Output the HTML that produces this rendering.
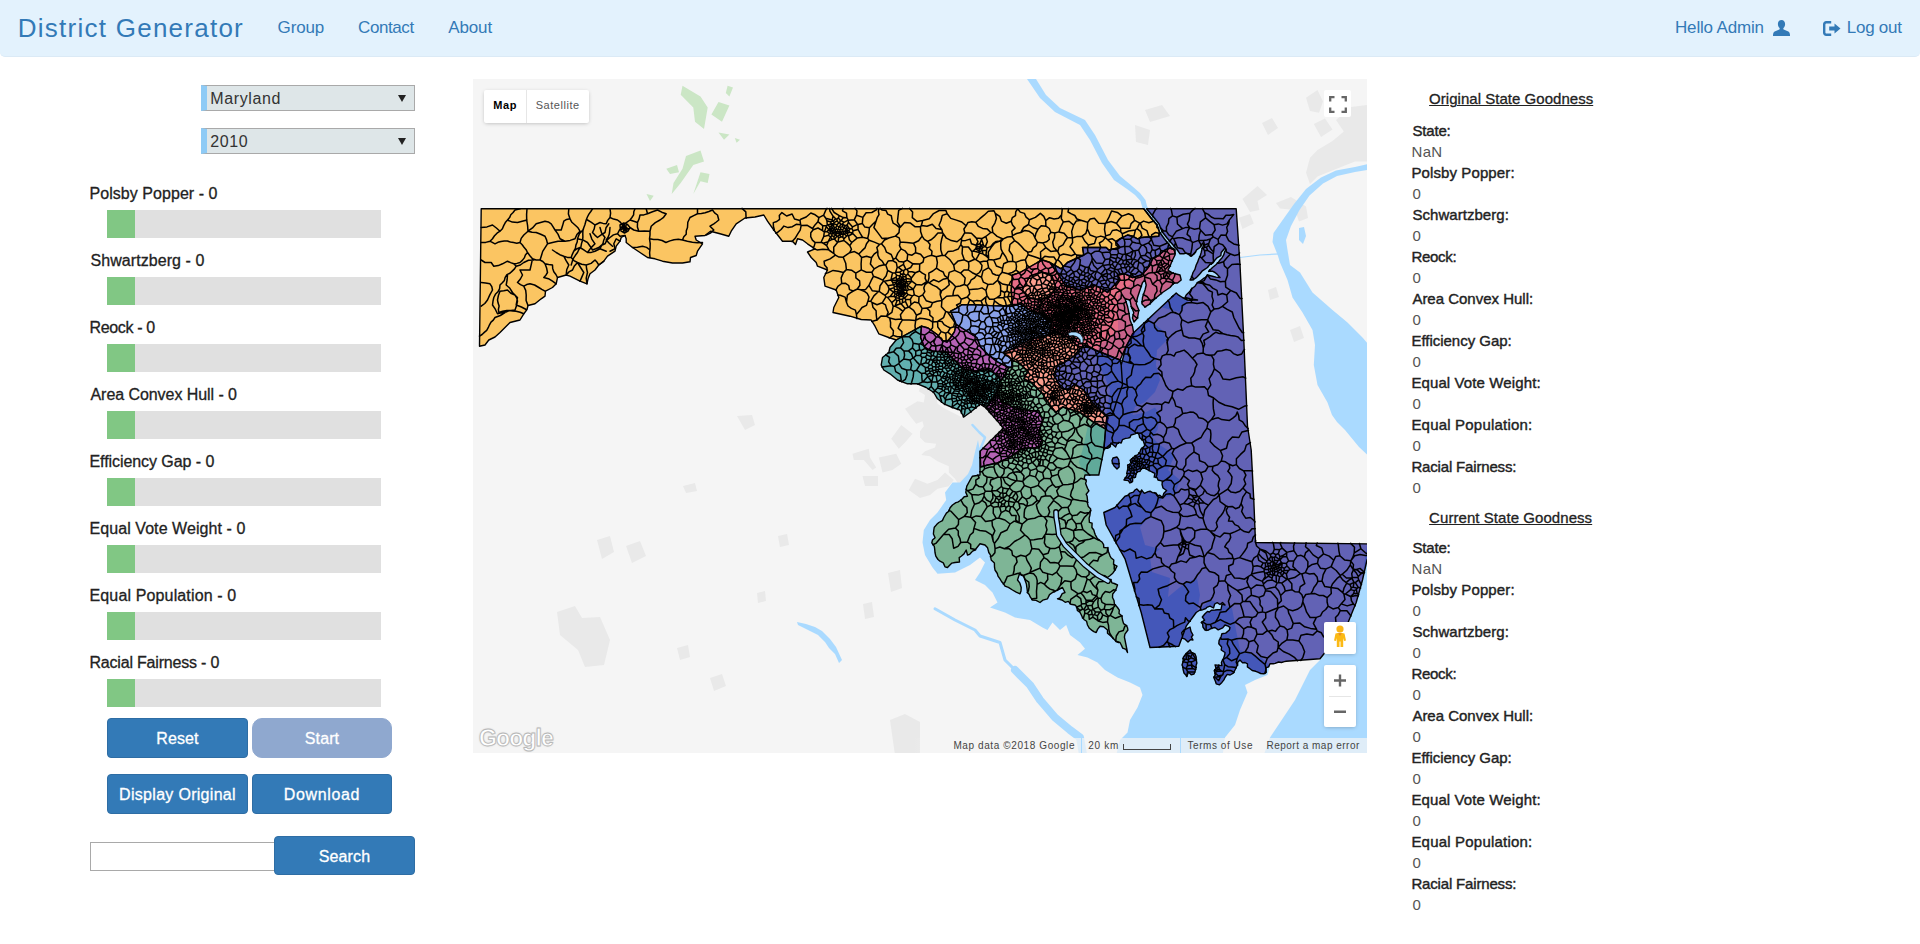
<!DOCTYPE html>
<html lang="en">
<head>
<meta charset="utf-8">
<title>District Generator</title>
<style>
html,body{margin:0;padding:0;}
body{width:1920px;height:944px;overflow:hidden;background:#fff;position:relative;font-family:"Liberation Sans","DejaVu Sans",sans-serif;color:#222;}
.abs{position:absolute;white-space:nowrap;}
#nav{position:absolute;left:0;top:0;width:1920px;height:56px;background:#e3f2fd;border-radius:0 0 5px 5px;border-bottom:1px solid #dbeaf6;}
.brand{font-size:26px;line-height:36px;color:#337ab7;}
.lnk{font-size:17px;line-height:24px;color:#337ab7;}
.sel{position:absolute;left:201px;width:214px;height:26px;box-sizing:border-box;background:#dee6e8;border:1px solid #a9a9a9;border-left:6px solid #8ecbf6;}
.sel span{position:absolute;left:3.3px;top:0.6px;font-size:16px;line-height:24px;color:#333;letter-spacing:0.6px;}
.sel i{position:absolute;right:8px;top:9px;width:0;height:0;border-left:4px solid transparent;border-right:4px solid transparent;border-top:7px solid #222;}
.lab{font-size:16px;line-height:20px;color:#222;-webkit-text-stroke:0.3px #222;}
.bar{position:absolute;left:107px;width:274px;height:28px;background:#e0e0e0;}
.bar b{position:absolute;left:0;top:0;width:28px;height:28px;background:#81c784;display:block;}
.btn{position:absolute;height:40px;box-sizing:border-box;background:#337ab7;border:1px solid #2e6da4;border-radius:4px;color:#fff;font-size:16px;line-height:40px;text-align:center;-webkit-text-stroke:0.3px #fff;letter-spacing:0.1px;}
#srch{position:absolute;left:90px;top:842px;width:185px;height:29px;box-sizing:border-box;border:1px solid #a9a9a9;background:#fff;}
.rt{font-size:15px;line-height:21px;}
.rt.k{color:#222;-webkit-text-stroke:0.4px #222;}
.rt.v{color:#555;}
.rt.h{color:#222;text-decoration:underline;-webkit-text-stroke:0.3px #222;}
#map{position:absolute;left:473px;top:79px;width:894px;height:674px;overflow:hidden;background:#f5f5f5;}
#map svg.m{position:absolute;left:0;top:0;}
</style>
</head>
<body>
<div id="nav"></div>

<svg class="abs" style="left:1773px;top:20px" width="17" height="16" viewBox="0 0 17 16"><path fill="#337ab7" d="M8.5 0C6.2 0 4.9 1.700 4.9 4.100c0 1.600.6 3 1.600 4 .3.400.3 1-.2 1.300L1.700 11.400C.6 12 .2 13 0 15v1h17v-1c-.2-2-.6-3-1.700-3.600L10.700 9.400c-.5-.3-.5-.9-.2-1.300 1-1 1.600-2.400 1.600-4C12.100 1.700 10.800 0 8.500 0z"/></svg>
<svg class="abs" style="left:1823px;top:21px" width="18" height="15" viewBox="0 0 18 15"><path fill="#337ab7" d="M3.200 0H8.200V2.400H3.600C2.900 2.400 2.400 2.900 2.400 3.600V11.400C2.400 12.100 2.900 12.600 3.600 12.600H8.200V15H3.200C1.400 15 0 13.600 0 11.800V3.200C0 1.400 1.400 0 3.200 0Z"/><path fill="#337ab7" d="M11.500 2.600L17.500 7.500L11.500 12.400V9.600H6.200V5.400H11.500Z"/></svg>

<div class="sel" style="top:85px"><span>Maryland</span><i></i></div>
<div class="sel" style="top:128px"><span>2010</span><i></i></div>
<div class="bar" style="top:210px"><b></b></div>
<div class="bar" style="top:277px"><b></b></div>
<div class="bar" style="top:344px"><b></b></div>
<div class="bar" style="top:411px"><b></b></div>
<div class="bar" style="top:478px"><b></b></div>
<div class="bar" style="top:545px"><b></b></div>
<div class="bar" style="top:612px"><b></b></div>
<div class="bar" style="top:679px"><b></b></div>
<div class="abs brand" style="left:17.8px;top:9.9px;letter-spacing:1.25px;">District Generator</div>
<div class="abs lnk" style="left:277.6px;top:15.6px;letter-spacing:-0.17px;">Group</div>
<div class="abs lnk" style="left:358.1px;top:15.6px;letter-spacing:-0.43px;">Contact</div>
<div class="abs lnk" style="left:448.3px;top:15.6px;letter-spacing:-0.15px;">About</div>
<div class="abs lnk" style="left:1675.0px;top:15.6px;letter-spacing:-0.17px;">Hello Admin</div>
<div class="abs lnk" style="left:1846.8px;top:15.6px;letter-spacing:-0.27px;">Log out</div>
<div class="abs lab" style="left:89.5px;top:183.9px;letter-spacing:0.05px;">Polsby Popper - 0</div>
<div class="abs lab" style="left:90.5px;top:250.9px;letter-spacing:0.06px;">Shwartzberg - 0</div>
<div class="abs lab" style="left:89.5px;top:317.9px;letter-spacing:-0.34px;">Reock - 0</div>
<div class="abs lab" style="left:90.5px;top:384.9px;letter-spacing:-0.06px;">Area Convex Hull - 0</div>
<div class="abs lab" style="left:89.5px;top:451.9px;letter-spacing:-0.07px;">Efficiency Gap - 0</div>
<div class="abs lab" style="left:89.5px;top:518.9px;letter-spacing:0.07px;">Equal Vote Weight - 0</div>
<div class="abs lab" style="left:89.5px;top:585.9px;letter-spacing:0.14px;">Equal Population - 0</div>
<div class="abs lab" style="left:89.5px;top:652.9px;letter-spacing:-0.20px;">Racial Fairness - 0</div>
<div class="abs rt h" style="left:1429.1px;top:88.4px;letter-spacing:0.03px;">Original State Goodness</div>
<div class="abs rt k" style="left:1412.4px;top:120.2px;letter-spacing:-0.17px;">State:</div>
<div class="abs rt v" style="left:1411.6px;top:141.2px;letter-spacing:0.21px;">NaN</div>
<div class="abs rt k" style="left:1411.4px;top:162.2px;letter-spacing:0.11px;">Polsby Popper:</div>
<div class="abs rt v" style="left:1412.6px;top:183.2px;letter-spacing:0.00px;">0</div>
<div class="abs rt k" style="left:1412.4px;top:204.2px;letter-spacing:0.05px;">Schwartzberg:</div>
<div class="abs rt v" style="left:1412.6px;top:225.2px;letter-spacing:0.00px;">0</div>
<div class="abs rt k" style="left:1411.4px;top:246.2px;letter-spacing:-0.27px;">Reock:</div>
<div class="abs rt v" style="left:1412.6px;top:267.2px;letter-spacing:0.00px;">0</div>
<div class="abs rt k" style="left:1412.4px;top:288.2px;letter-spacing:-0.01px;">Area Convex Hull:</div>
<div class="abs rt v" style="left:1412.6px;top:309.2px;letter-spacing:0.00px;">0</div>
<div class="abs rt k" style="left:1411.4px;top:330.2px;letter-spacing:-0.02px;">Efficiency Gap:</div>
<div class="abs rt v" style="left:1412.6px;top:351.2px;letter-spacing:0.00px;">0</div>
<div class="abs rt k" style="left:1411.4px;top:372.2px;letter-spacing:0.11px;">Equal Vote Weight:</div>
<div class="abs rt v" style="left:1412.6px;top:393.2px;letter-spacing:0.00px;">0</div>
<div class="abs rt k" style="left:1411.4px;top:414.2px;letter-spacing:0.20px;">Equal Population:</div>
<div class="abs rt v" style="left:1412.6px;top:435.2px;letter-spacing:0.00px;">0</div>
<div class="abs rt k" style="left:1411.4px;top:456.2px;letter-spacing:-0.17px;">Racial Fairness:</div>
<div class="abs rt v" style="left:1412.6px;top:477.2px;letter-spacing:0.00px;">0</div>
<div class="abs rt h" style="left:1429.1px;top:506.6px;letter-spacing:0.06px;">Current State Goodness</div>
<div class="abs rt k" style="left:1412.4px;top:537.0px;letter-spacing:-0.17px;">State:</div>
<div class="abs rt v" style="left:1411.6px;top:558.0px;letter-spacing:0.21px;">NaN</div>
<div class="abs rt k" style="left:1411.4px;top:579.0px;letter-spacing:0.11px;">Polsby Popper:</div>
<div class="abs rt v" style="left:1412.6px;top:600.0px;letter-spacing:0.00px;">0</div>
<div class="abs rt k" style="left:1412.4px;top:621.0px;letter-spacing:0.05px;">Schwartzberg:</div>
<div class="abs rt v" style="left:1412.6px;top:642.0px;letter-spacing:0.00px;">0</div>
<div class="abs rt k" style="left:1411.4px;top:663.0px;letter-spacing:-0.27px;">Reock:</div>
<div class="abs rt v" style="left:1412.6px;top:684.0px;letter-spacing:0.00px;">0</div>
<div class="abs rt k" style="left:1412.4px;top:705.0px;letter-spacing:-0.01px;">Area Convex Hull:</div>
<div class="abs rt v" style="left:1412.6px;top:726.0px;letter-spacing:0.00px;">0</div>
<div class="abs rt k" style="left:1411.4px;top:747.0px;letter-spacing:-0.02px;">Efficiency Gap:</div>
<div class="abs rt v" style="left:1412.6px;top:768.0px;letter-spacing:0.00px;">0</div>
<div class="abs rt k" style="left:1411.4px;top:789.0px;letter-spacing:0.11px;">Equal Vote Weight:</div>
<div class="abs rt v" style="left:1412.6px;top:810.0px;letter-spacing:0.00px;">0</div>
<div class="abs rt k" style="left:1411.4px;top:831.0px;letter-spacing:0.20px;">Equal Population:</div>
<div class="abs rt v" style="left:1412.6px;top:852.0px;letter-spacing:0.00px;">0</div>
<div class="abs rt k" style="left:1411.4px;top:873.0px;letter-spacing:-0.17px;">Racial Fairness:</div>
<div class="abs rt v" style="left:1412.6px;top:894.0px;letter-spacing:0.00px;">0</div>
<div class="btn" style="left:107px;top:718px;width:141px">Reset</div>
<div class="btn" style="left:252px;top:718px;width:140px;background:#8fa8cf;border-color:#8fa8cf;border-radius:10px">Start</div>
<div class="btn" style="left:107px;top:774px;width:141px;letter-spacing:0.3px">Display Original</div>
<div class="btn" style="left:252px;top:774px;width:140px;letter-spacing:0.65px">Download</div>
<div id="srch"></div>
<div class="btn" style="left:274px;top:836px;width:141px;height:39px">Search</div>
<div id="map">
<svg class="m" width="894" height="674" viewBox="0 0 894 674">
<rect width="894" height="674" fill="#f5f5f5"/>
<path fill="#e9e9e9" d="M447.0,308.5 457.0,309.8 463.2,317.2 464.5,324.8 472.0,329.8 489.5,338.5 507.6,324.0 532.6,349.8 507.0,374.8 505.8,397.2 497.0,398.5 494.5,401.0 489.5,404.8 485.8,406.0 482.0,399.8 475.8,393.5 475.8,387.2 464.5,382.2 457.0,377.2 448.2,376.0 452.0,372.2 462.0,368.5 463.2,364.8 452.0,363.5 447.0,358.5 447.0,352.2 450.8,347.2 449.5,342.2 443.2,344.8 438.2,338.5 432.0,329.8 444.5,322.2 450.8,323.5 452.0,316.0 445.8,312.2Z M418.2,359.8 428.2,346.0 439.5,354.8 432.0,363.5 425.8,369.8Z M405.8,378.5 423.2,374.8 428.2,384.8 419.5,391.0 409.5,393.5Z M379.5,374.8 395.8,369.8 397.0,378.5 403.2,388.5 399.5,391.0 390.8,381.0 380.8,381.0Z M389.5,397.0 405.0,397.0 405.0,407.0 392.0,407.0Z M442.0,399.8 454.5,404.8 464.5,401.0 472.0,393.5 480.8,401.0 475.8,407.2 464.5,409.8 457.0,416.0 447.0,419.0 435.8,411.0Z M878.0,28.0 894.0,26.0 894.0,82.5 882.0,82.5 863.0,90.0 844.5,97.5 837.0,105.0 833.0,93.8 837.0,78.8 844.5,71.0 859.5,62.0 870.8,52.5 863.0,41.0Z M840.8,45.0 852.0,39.4 859.5,50.6 848.0,58.0Z M833.0,18.8 844.5,11.0 850.0,22.5 846.0,33.8 837.0,31.9Z M769.5,120.0 784.5,107.0 794.0,116.0 784.5,122.0 786.4,131.0 777.0,133.0Z M803.0,124.0 818.0,118.0 833.0,127.5 835.0,139.0 826.0,142.5 822.0,131.0 807.0,129.4Z M765.8,138.8 777.0,135.0 780.8,144.4 769.5,150.0Z M789.0,44.0 799.0,39.0 805.0,49.0 795.0,56.0Z M672.0,31.0 689.0,26.0 697.0,37.0 677.0,43.0Z M662.0,46.0 677.0,51.0 675.0,66.0 663.0,63.0Z M264.0,337.0 279.0,336.0 282.0,346.0 272.0,351.0Z M210.0,407.0 222.0,404.0 224.0,412.0 213.0,414.0Z M305.0,457.0 314.0,455.0 316.0,466.0 307.0,468.0Z M284.0,514.0 292.0,512.0 293.0,522.0 285.0,524.0Z M390.0,525.0 399.0,523.0 401.0,538.0 392.0,540.0Z M237.0,599.0 249.0,595.0 253.0,607.0 241.0,612.0Z M204.0,569.0 215.0,566.0 217.0,578.0 207.0,581.0Z M415.0,494.0 427.0,491.0 429.0,509.0 418.0,513.0Z M417.0,641.0 432.0,635.0 447.0,643.0 447.0,676.0 422.0,676.0Z M84.0,533.0 102.0,527.0 109.0,539.0 127.0,538.0 137.0,561.0 131.0,586.0 112.0,588.0 105.0,571.0 87.0,556.0Z M124.0,461.0 137.0,457.0 141.0,473.0 129.0,480.0Z M153.0,467.0 167.0,462.0 173.0,477.0 159.0,484.0Z M817.0,251.0 827.0,247.0 831.0,259.0 821.0,263.0Z M795.0,211.0 803.0,208.0 806.0,218.0 797.0,221.0Z"/>
<path fill="#cbe6c5" d="M209.5,6.8 227.5,17.6 234.7,28.4 231.0,50.0 222.0,42.8 220.3,28.4 207.7,15.8Z M245.5,23.0 256.4,26.6 249.0,42.8 238.4,35.6Z M254.6,6.8 260.0,8.6 256.4,17.6 252.8,14.0Z M245.5,53.6 256.4,55.4 251.0,60.8Z M261.8,59.0 267.0,60.8 263.6,63.7Z M213.0,77.0 227.5,71.6 231.0,82.5 220.3,86.0 207.7,104.0 198.7,115.0 200.5,104.0 209.5,89.7Z M193.3,89.7 204.0,86.0 206.0,93.3 197.0,95.0Z M227.5,93.3 236.5,95.0 234.7,104.0 227.5,102.3 220.3,115.0Z M173.5,115.0 180.7,116.7 177.0,122.0Z"/>
<path fill="#aadaff" d="M505.0,361.0 502.0,373.0 499.0,386.0 495.0,395.0 487.0,403.5 479.5,403.5 472.0,413.5 473.2,421.0 464.5,433.5 457.0,441.0 450.8,451.0 449.5,463.5 452.0,476.0 459.5,488.5 464.5,494.8 482.0,493.5 497.0,486.0 507.0,478.5 512.0,483.5 507.0,493.5 502.0,501.0 512.0,506.0 519.5,513.5 524.5,523.5 517.0,528.5 532.0,533.5 542.0,538.5 557.0,541.0 569.5,548.5 574.5,551.0 579.5,543.5 587.0,551.0 593.2,546.0 597.0,556.0 607.0,563.5 612.0,569.8 604.5,576.0 614.5,578.5 624.5,583.5 632.0,591.0 644.5,598.5 657.0,603.5 667.0,608.5 669.5,616.0 664.5,628.5 657.0,641.0 654.5,653.5 647.0,661.0 642.0,681.0 749.0,681.0 752.0,658.5 762.0,646.0 767.0,631.0 774.5,613.5 772.0,606.0 782.0,601.0 794.5,596.0 797.0,587.0 789.0,579.0 767.0,571.0 763.0,551.0 759.0,529.0 737.0,521.0 724.0,533.5 727.0,516.0 724.0,499.0 712.0,504.0 695.0,518.0 697.0,499.0 679.0,493.0 677.0,478.0 687.0,470.0 672.0,466.0 667.0,448.0 682.0,431.0 689.5,418.5 702.0,416.0 707.0,401.0 695.0,391.0 702.0,376.0 687.0,366.0 679.5,358.5 684.5,351.0 687.0,336.0 682.0,328.5 672.0,333.5 659.5,336.0 662.0,328.0 672.0,323.0 682.0,313.0 687.0,301.0 683.0,286.0 684.0,271.0 694.0,261.0 689.0,251.0 677.0,241.0 687.0,228.0 707.0,233.0 716.0,221.0 705.7,216.2 709.5,218.5 714.5,221.0 717.4,221.3 720.6,221.0 724.5,221.0 721.6,220.4 717.0,219.8 712.0,218.5 713.2,216.0 717.0,212.2 718.3,210.0 722.0,207.2 724.1,204.1 727.0,202.2 730.2,199.7 732.5,198.4 734.5,196.0 739.5,197.2 742.9,198.1 747.0,198.5 744.0,195.1 742.0,193.5 739.4,192.2 735.8,192.2 739.5,188.5 742.9,185.8 745.1,183.6 747.0,181.0 749.1,178.7 750.6,176.2 751.7,172.7 753.2,170.4 752.0,169.0 748.2,173.5 747.8,176.6 744.3,178.6 742.0,181.0 739.8,184.2 736.8,185.5 734.5,188.5 732.0,190.2 729.0,192.2 727.0,194.8 724.2,197.7 722.6,199.1 719.5,201.0 717.0,201.0 718.6,198.1 720.0,193.5 721.9,190.4 723.2,186.0 724.5,183.4 725.8,179.8 727.1,177.3 728.2,173.5 729.1,169.6 730.8,166.0 729.5,164.0 727.0,168.5 723.6,170.8 722.0,173.5 718.2,177.2 713.2,174.0 710.7,174.8 707.0,174.8 704.0,170.5 699.0,163.0 693.0,168.0 677.0,183.0 667.0,196.0 645.0,217.0 645.0,251.0 627.0,266.0 622.0,273.0 625.0,286.0 631.0,296.0 637.0,311.0 635.0,326.0 633.0,337.0 614.5,348.5 609.5,371.0 605.8,383.5 612.0,396.0 612.0,396.0 611.2,399.2 613.4,401.9 612.6,404.5 614.5,409.2 615.9,411.9 613.2,415.3 614.1,417.3 614.5,421.0 614.5,424.3 615.3,427.6 617.7,429.9 617.2,433.7 616.9,436.2 616.1,439.1 616.4,443.4 619.1,444.2 618.9,448.5 620.8,451.0 621.8,454.6 622.3,455.8 624.2,459.1 625.7,460.8 629.0,463.0 630.6,465.7 630.8,468.5 634.7,468.9 635.4,472.5 636.9,476.6 638.0,478.8 640.8,481.0 640.5,485.3 644.0,487.2 642.0,491.0 639.8,494.2 636.8,496.7 634.5,498.5 632.1,496.8 627.0,496.0 629.2,497.7 632.5,499.5 634.0,501.0 637.8,500.7 638.9,503.8 641.3,504.5 644.5,506.0 643.7,508.4 642.4,511.6 639.7,515.0 639.5,518.5 641.0,521.5 641.4,524.9 644.5,528.5 646.3,531.1 646.0,534.5 648.8,536.7 649.5,541.0 650.6,544.6 653.2,546.4 654.5,548.5 654.9,551.0 651.9,555.2 651.4,558.2 652.0,561.0 654.5,573.5 653.0,570.4 649.7,569.1 648.3,566.0 647.0,563.5 643.0,562.5 642.0,561.4 639.5,558.5 637.8,556.9 634.5,554.2 634.5,551.0 630.6,547.8 627.0,547.2 624.7,550.1 623.2,553.5 620.8,552.6 618.7,551.1 616.4,549.3 614.5,546.0 613.6,542.3 611.3,540.7 609.5,538.5 608.1,535.5 606.6,532.7 604.4,531.6 603.7,527.7 602.0,526.0 597.9,525.3 595.3,522.4 592.2,523.3 589.0,521.0 584.5,519.8 587.0,518.8 589.2,514.7 592.0,513.5 589.5,508.5 584.5,511.0 579.5,513.5 576.5,515.6 574.5,519.8 569.8,521.2 567.0,523.5 563.1,521.4 559.5,521.0 557.2,517.9 556.2,515.5 554.5,513.5 554.1,510.0 553.7,507.3 553.4,504.9 552.0,501.0 550.8,497.1 548.1,496.1 547.0,493.5 545.8,496.9 544.5,501.0 546.9,504.2 548.2,508.5 548.0,511.9 547.0,514.8 543.2,513.1 539.5,511.0 535.4,508.4 532.0,507.2 530.5,504.7 528.5,502.5 527.0,499.8 525.0,497.1 524.3,494.5 522.0,491.0 521.5,488.2 521.4,483.9 518.2,481.0 517.4,475.9 515.8,473.5 514.6,468.8 512.0,466.0 507.0,464.8 505.2,467.0 502.0,471.0 499.6,472.1 496.7,475.3 494.5,476.0 493.2,471.0 491.0,474.9 488.2,477.2 486.2,478.6 486.5,483.0 482.0,483.5 478.9,484.1 476.9,486.0 474.5,488.5 472.0,487.8 470.3,483.9 467.0,482.2 465.0,480.5 462.8,477.1 462.0,473.5 461.7,470.1 461.3,467.4 458.8,463.8 459.5,461.0 462.1,458.7 460.4,455.0 460.8,451.0 461.3,448.2 463.6,445.6 465.8,443.5 469.4,441.6 470.8,438.5 473.4,434.1 475.8,432.2 477.1,428.8 479.5,426.0 482.9,423.7 484.8,423.1 488.2,421.0 491.2,417.7 494.5,417.2 492.8,413.4 493.2,411.0 493.7,407.3 495.8,403.5 497.8,399.8 499.5,397.2 507.0,396.0 507.0,372.2Z M902.0,83.5 882.0,88.0 863.0,91.5 848.0,98.5 833.0,110.0 821.0,125.0 810.0,140.5 800.5,154.0 799.5,163.0 805.0,177.0 807.0,183.5 814.5,201.0 819.5,218.5 829.5,233.5 839.5,251.0 842.0,266.0 840.8,286.0 844.5,306.0 854.5,323.5 859.0,336.0 864.0,343.0 872.0,351.0 886.0,368.0 902.0,383.0 902.0,273.0 889.5,258.5 874.5,243.5 859.5,231.0 839.5,213.5 827.0,193.5 817.0,186.0 814.5,171.0 813.0,161.0 818.0,147.0 826.5,131.0 836.5,116.5 850.0,104.5 864.0,97.0 882.0,93.0 902.0,89.5Z M826.0,149.0 831.0,148.0 833.0,157.0 830.0,165.0 826.0,161.0Z M894.0,466.0 902.0,466.0 902.0,681.0 789.0,681.0 797.0,658.5 802.0,651.0 812.0,636.0 822.0,621.0 829.5,606.0 837.0,591.0 847.0,581.0 852.0,573.5 872.0,553.0 883.0,525.0 889.0,501.0Z M554.0,0.0 563.0,0.0 573.0,16.0 587.0,29.0 612.0,41.0 622.0,56.0 635.0,81.0 647.0,97.0 659.0,107.0 667.0,114.0 672.5,121.0 675.0,131.0 670.0,131.0 667.5,122.0 662.0,116.0 654.0,110.0 641.0,101.0 629.0,84.0 617.0,61.0 607.0,46.0 582.0,33.0 567.0,19.0Z M670.0,129.0 674.0,129.0 681.0,138.0 687.0,145.0 690.0,152.5 695.0,159.0 701.0,166.0 705.0,171.0 702.0,175.0 697.0,168.5 691.0,160.5 686.0,153.5 683.5,146.5 677.5,139.5Z M324.0,543.0 333.0,545.0 342.0,548.0 349.0,552.0 357.0,560.0 363.0,568.0 369.0,581.0 366.0,584.0 362.0,575.0 356.0,569.0 352.0,563.0 345.0,556.0 335.0,551.0 325.0,546.0Z"/>
<path fill="none" stroke="#aadaff" stroke-width="4.5" stroke-linecap="round" stroke-linejoin="round" d="M672.5,129.0 679.5,138.5 685.0,145.5 688.0,152.5 693.0,159.5 699.5,167.0 704.0,172.0"/>
<path fill="none" stroke="#aadaff" stroke-width="3" stroke-linecap="round" stroke-linejoin="round" d="M462.0,529.8 482.0,541.0 502.0,551.0 507.0,557.0 527.0,563.5 532.0,581.0 542.0,591.0"/>
<path fill="none" stroke="#aadaff" stroke-width="8" stroke-linecap="round" stroke-linejoin="round" d="M542.0,591.0 557.0,606.0 567.0,621.0 582.0,638.5 597.0,651.0 607.0,658.5 611.0,681.0"/>
<path fill="none" stroke="#aadaff" stroke-width="1.2" stroke-linecap="round" stroke-linejoin="round" d="M767.0,178.5 787.0,176.0 807.0,174.8"/>
<path fill="none" stroke="#aadaff" stroke-width="2.5" stroke-linecap="round" stroke-linejoin="round" d="M499.5,346.0 506.0,353.0 512.0,358.5 507.0,371.0"/>
<path fill="orange" fill-opacity="0.6" fill-rule="evenodd" stroke="#000" stroke-width="1.4" stroke-linejoin="round" d="M8.2,129.8 670.8,129.8 678.0,139.0 684.0,146.0 686.5,153.0 685.8,157.2 668.2,158.5 664.5,159.8 659.5,157.2 654.5,156.0 647.0,159.8 643.2,163.5 647.0,168.5 635.8,171.0 633.2,168.5 609.5,168.5 610.8,176.0 594.5,183.5 588.2,189.8 577.0,183.5 569.5,181.0 564.5,183.5 547.0,193.5 539.5,196.0 538.2,211.0 539.5,227.2 517.0,226.6 502.0,225.7 488.9,225.7 483.2,229.4 477.6,232.2 480.4,238.8 483.2,245.4 481.4,252.9 477.6,258.5 473.9,263.2 469.2,261.3 464.5,255.7 455.0,249.0 448.5,247.2 423.2,261.0 415.8,258.5 405.8,254.8 402.0,247.2 398.2,241.0 388.2,240.5 377.0,237.2 360.0,233.5 360.8,228.5 365.8,218.5 363.2,211.0 352.0,207.2 350.8,198.5 354.5,191.0 344.5,187.2 343.2,183.5 338.2,178.5 334.5,173.0 342.0,169.8 334.5,164.8 329.5,161.0 324.5,159.8 322.5,165.5 319.5,162.2 317.0,162.2 309.5,162.2 300.8,151.0 294.5,142.2 290.8,136.0 282.0,138.0 272.0,139.0 263.2,144.8 258.2,152.2 255.8,157.2 247.0,154.8 237.5,152.2 232.0,156.5 222.0,157.2 223.2,161.0 229.5,164.8 224.5,172.2 223.2,176.5 217.5,178.5 217.0,182.8 209.5,184.0 199.5,184.0 189.5,182.2 182.0,179.8 174.5,178.5 167.0,173.5 159.5,168.5 153.2,163.5 153.2,159.8 152.0,156.5 148.2,158.5 147.0,162.2 143.2,167.2 142.0,172.2 134.5,177.2 130.8,182.2 125.8,186.0 122.0,191.0 117.0,194.8 115.0,199.8 114.0,204.8 107.0,202.2 97.0,197.2 93.2,196.0 84.5,198.5 83.2,204.8 79.5,208.5 72.5,212.2 72.0,217.2 68.2,219.8 62.0,224.8 55.0,226.5 54.0,230.5 50.8,234.8 47.0,241.0 37.0,243.5 32.0,248.5 27.0,253.5 22.0,258.0 15.8,261.0 12.0,266.0 6.5,267.2Z"/>
<path fill="teal" fill-opacity="0.6" fill-rule="evenodd" stroke="#000" stroke-width="1.4" stroke-linejoin="round" d="M423.2,261.0 448.5,247.2 447.6,258.5 451.4,267.9 457.0,271.6 473.9,273.5 483.2,282.9 490.8,290.4 502.0,292.2 515.1,290.4 524.5,296.0 528.2,303.5 524.5,311.0 520.8,318.5 513.0,329.0 507.5,325.0 503.2,328.5 497.0,333.5 490.8,338.0 487.0,331.0 479.5,328.5 470.8,324.8 464.5,319.8 460.8,313.5 453.2,308.5 444.5,304.8 434.5,304.8 424.5,301.0 417.0,294.8 410.8,291.0 408.2,286.0 409.5,278.5 415.8,273.5 417.0,268.5Z"/>
<path fill="darkmagenta" fill-opacity="0.6" fill-rule="evenodd" stroke="#000" stroke-width="1.4" stroke-linejoin="round" d="M448.5,247.2 455.0,249.0 464.5,255.7 469.2,261.3 473.9,263.2 477.6,258.5 481.4,252.9 483.2,245.4 488.9,249.0 498.2,254.8 503.9,258.5 507.6,267.9 515.0,275.4 524.5,282.9 535.8,288.5 532.0,296.0 526.4,303.5 524.5,314.8 528.2,322.2 539.5,327.9 554.5,331.6 565.8,331.6 569.5,341.0 565.8,352.2 569.5,363.5 565.8,369.0 554.5,369.0 547.0,371.0 539.5,376.6 532.0,380.4 524.5,384.0 515.0,386.0 507.6,388.0 507.3,372.0 530.5,349.0 513.0,329.0 520.8,318.5 524.5,311.0 528.2,303.5 524.5,296.0 515.1,290.4 502.0,292.2 490.8,290.4 483.2,282.9 473.9,273.5 457.0,271.6 451.4,267.9 447.6,258.5Z"/>
<path fill="royalblue" fill-opacity="0.6" fill-rule="evenodd" stroke="#000" stroke-width="1.4" stroke-linejoin="round" d="M483.2,229.4 488.9,225.7 502.0,225.7 517.0,226.6 539.5,227.2 547.0,224.8 558.0,232.0 573.0,236.0 579.0,243.0 577.0,254.0 567.0,259.0 557.0,266.0 547.0,271.6 532.0,273.5 539.5,281.0 539.5,288.5 535.8,288.5 524.5,282.9 515.0,275.4 507.6,267.9 503.9,258.5 498.2,254.8 488.9,249.0 483.2,245.4 480.4,238.8 477.6,232.2Z"/>
<path fill="tomato" fill-opacity="0.6" fill-rule="evenodd" stroke="#000" stroke-width="1.4" stroke-linejoin="round" d="M530.0,273.5 539.5,269.8 558.0,260.0 573.0,256.6 582.6,253.0 595.8,258.5 607.0,269.8 601.0,277.0 592.0,283.0 584.5,286.6 580.8,296.0 588.2,309.0 595.8,311.0 601.4,305.4 610.8,311.0 614.5,318.5 623.9,327.9 635.0,339.0 633.2,350.4 620.0,342.9 607.0,333.5 590.0,327.9 582.6,333.5 577.0,326.0 569.5,314.8 558.2,303.5 550.8,299.8 554.5,292.2 547.0,284.8 539.5,281.0Z M549.0,211.0 557.0,197.0 569.0,193.0 579.0,197.0 583.0,209.0 577.0,217.0 567.0,221.0 557.0,219.0Z"/>
<path fill="crimson" fill-opacity="0.6" fill-rule="evenodd" stroke="#000" stroke-width="1.4" stroke-linejoin="round" d="M539.5,227.2 538.2,211.0 539.5,196.0 547.0,193.5 564.5,183.5 569.5,181.0 577.0,183.5 585.8,196.0 592.0,206.0 607.0,211.0 622.0,206.0 630.8,211.0 634.5,213.5 645.8,201.0 644.5,196.0 652.0,194.8 659.5,198.5 668.2,196.0 673.2,191.0 677.0,186.0 679.5,179.8 684.5,177.2 692.0,171.0 697.0,169.0 702.0,171.0 702.0,176.0 698.9,182.2 697.0,187.2 695.0,191.0 698.2,193.5 702.0,194.8 707.0,196.0 708.2,201.0 704.5,204.0 700.8,204.0 697.0,208.5 689.5,213.5 682.0,219.8 677.0,224.8 672.0,227.9 668.9,224.8 669.5,218.5 672.0,211.0 673.2,206.0 672.0,201.0 669.5,203.5 667.0,211.0 664.5,218.5 663.2,224.8 665.8,231.0 664.5,239.0 661.0,243.0 659.5,239.0 660.8,233.5 658.2,227.2 657.0,221.0 652.0,219.8 654.5,227.2 655.8,233.5 657.0,241.0 659.5,247.2 660.8,254.8 653.2,267.2 647.0,281.0 622.0,271.0 612.0,266.0 607.0,269.8 595.8,258.5 582.6,253.0 573.0,256.6 577.0,254.0 579.0,243.0 573.0,236.0 558.0,232.0 547.0,224.8Z M549.0,211.0 557.0,197.0 569.0,193.0 579.0,197.0 583.0,209.0 577.0,217.0 567.0,221.0 557.0,219.0Z"/>
<path fill="seagreen" fill-opacity="0.6" fill-rule="evenodd" stroke="#000" stroke-width="1.4" stroke-linejoin="round" d="M507.0,372.2 507.0,396.0 499.5,397.2 497.8,399.8 495.8,403.5 493.7,407.3 493.2,411.0 492.8,413.4 494.5,417.2 491.2,417.7 488.2,421.0 484.8,423.1 482.9,423.7 479.5,426.0 477.1,428.8 475.8,432.2 473.4,434.1 470.8,438.5 469.4,441.6 465.8,443.5 463.6,445.6 461.3,448.2 460.8,451.0 460.4,455.0 462.1,458.7 459.5,461.0 458.8,463.8 461.3,467.4 461.7,470.1 462.0,473.5 462.8,477.1 465.0,480.5 467.0,482.2 470.3,483.9 472.0,487.8 474.5,488.5 476.9,486.0 478.9,484.1 482.0,483.5 486.5,483.0 486.2,478.6 488.2,477.2 491.0,474.9 493.2,471.0 494.5,476.0 496.7,475.3 499.6,472.1 502.0,471.0 505.2,467.0 507.0,464.8 512.0,466.0 514.6,468.8 515.8,473.5 517.4,475.9 518.2,481.0 521.4,483.9 521.5,488.2 522.0,491.0 524.3,494.5 525.0,497.1 527.0,499.8 528.5,502.5 530.5,504.7 532.0,507.2 535.4,508.4 539.5,511.0 543.2,513.1 547.0,514.8 548.0,511.9 548.2,508.5 546.9,504.2 544.5,501.0 545.8,496.9 547.0,493.5 548.1,496.1 550.8,497.1 552.0,501.0 553.4,504.9 553.7,507.3 554.1,510.0 554.5,513.5 556.2,515.5 557.2,517.9 559.5,521.0 563.1,521.4 567.0,523.5 569.8,521.2 574.5,519.8 576.5,515.6 579.5,513.5 584.5,511.0 589.5,508.5 592.0,513.5 589.2,514.7 587.0,518.8 584.5,519.8 589.0,521.0 592.2,523.3 595.3,522.4 597.9,525.3 602.0,526.0 603.7,527.7 604.4,531.6 606.6,532.7 608.1,535.5 609.5,538.5 611.3,540.7 613.6,542.3 614.5,546.0 616.4,549.3 618.7,551.1 620.8,552.6 623.2,553.5 624.7,550.1 627.0,547.2 630.6,547.8 634.5,551.0 634.5,554.2 637.8,556.9 639.5,558.5 642.0,561.4 643.0,562.5 647.0,563.5 648.3,566.0 649.7,569.1 653.0,570.4 654.5,573.5 652.0,561.0 651.4,558.2 651.9,555.2 654.9,551.0 654.5,548.5 653.2,546.4 650.6,544.6 649.5,541.0 648.8,536.7 646.0,534.5 646.3,531.1 644.5,528.5 641.4,524.9 641.0,521.5 639.5,518.5 639.7,515.0 642.4,511.6 643.7,508.4 644.5,506.0 641.3,504.5 638.9,503.8 637.8,500.7 634.0,501.0 632.5,499.5 629.2,497.7 627.0,496.0 632.1,496.8 634.5,498.5 636.8,496.7 639.8,494.2 642.0,491.0 644.0,487.2 640.5,485.3 640.8,481.0 638.0,478.8 636.9,476.6 635.4,472.5 634.7,468.9 630.8,468.5 630.6,465.7 629.0,463.0 625.7,460.8 624.2,459.1 622.3,455.8 621.8,454.6 620.8,451.0 618.9,448.5 619.1,444.2 616.4,443.4 616.1,439.1 616.9,436.2 617.2,433.7 617.7,429.9 615.3,427.6 614.5,424.3 614.5,421.0 614.1,417.3 613.2,415.3 615.9,411.9 614.5,409.2 612.6,404.5 613.4,401.9 611.2,399.2 612.0,396.0 625.8,396.0 630.8,371.0 633.0,346.0 634.0,337.0 633.2,350.4 620.0,342.9 607.0,333.5 590.0,327.9 582.6,333.5 577.0,326.0 569.5,314.8 558.2,303.5 550.8,299.8 554.5,292.2 547.0,284.8 539.5,281.0 539.5,288.5 535.8,288.5 532.0,296.0 526.4,303.5 524.5,314.8 528.2,322.2 539.5,327.9 554.5,331.6 565.8,331.6 569.5,341.0 565.8,352.2 569.5,363.5 565.8,369.0 554.5,369.0 547.0,371.0 539.5,376.6 532.0,380.4 524.5,384.0 515.0,386.0 507.6,388.0Z"/>
<path fill="darkblue" fill-opacity="0.6" fill-rule="evenodd" stroke="#000" stroke-width="1.4" stroke-linejoin="round" d="M670.8,129.8 678.0,139.0 684.0,146.0 686.5,153.0 685.8,157.2 668.2,158.5 664.5,159.8 659.5,157.2 654.5,156.0 647.0,159.8 643.2,163.5 647.0,168.5 635.8,171.0 633.2,168.5 609.5,168.5 610.8,176.0 594.5,183.5 588.2,189.8 577.0,183.5 585.8,196.0 592.0,206.0 607.0,211.0 622.0,206.0 630.8,211.0 634.5,213.5 645.8,201.0 644.5,196.0 652.0,194.8 659.5,198.5 668.2,196.0 673.2,191.0 677.0,186.0 679.5,179.8 684.5,177.2 692.0,171.0 697.0,169.0 702.0,171.0 698.0,168.0 691.5,160.0 686.5,153.0 684.0,146.0 678.0,139.0Z M673.5,129.8 680.5,138.0 686.0,145.0 689.0,152.5 694.0,159.0 700.5,166.5 704.0,170.5 707.0,174.8 710.7,174.8 713.2,174.0 718.2,177.2 722.0,173.5 723.6,170.8 727.0,168.5 729.5,164.0 730.8,166.0 729.1,169.6 728.2,173.5 727.1,177.3 725.8,179.8 724.5,183.4 723.2,186.0 721.9,190.4 720.0,193.5 718.6,198.1 717.0,201.0 719.5,201.0 722.6,199.1 724.2,197.7 727.0,194.8 729.0,192.2 732.0,190.2 734.5,188.5 736.8,185.5 739.8,184.2 742.0,181.0 744.3,178.6 747.8,176.6 748.2,173.5 752.0,169.0 753.2,170.4 751.7,172.7 750.6,176.2 749.1,178.7 747.0,181.0 745.1,183.6 742.9,185.8 739.5,188.5 735.8,192.2 739.4,192.2 742.0,193.5 744.0,195.1 747.0,198.5 742.9,198.1 739.5,197.2 734.5,196.0 732.5,198.4 730.2,199.7 727.0,202.2 724.1,204.1 722.0,207.2 718.3,210.0 717.0,212.2 713.2,216.0 712.0,218.5 717.0,219.8 721.6,220.4 724.5,221.0 720.6,221.0 717.4,221.3 714.5,221.0 709.5,218.5 705.7,216.2 703.2,214.0 677.0,238.5 659.5,254.8 653.2,267.2 648.2,286.0 649.5,306.0 644.0,321.0 639.5,336.0 634.0,337.0 633.0,346.0 630.8,371.0 632.2,369.0 634.6,369.3 636.8,368.2 638.0,364.0 642.6,368.0 643.7,365.3 646.0,363.3 648.2,364.1 649.4,360.7 652.6,359.4 654.8,359.1 657.0,358.5 658.0,356.0 662.1,354.8 664.5,353.5 666.0,355.6 666.6,358.4 668.2,359.9 670.3,361.7 670.7,363.3 672.0,366.0 670.7,367.9 667.8,370.4 667.0,373.0 664.6,375.9 662.0,376.9 660.0,379.0 657.1,381.3 658.7,384.9 654.6,386.0 655.0,389.0 654.7,391.2 653.9,393.2 654.2,396.1 652.8,398.3 651.0,401.0 655.3,401.6 657.0,404.0 659.6,402.4 659.7,398.6 662.5,398.2 663.0,395.0 664.2,392.9 667.1,392.2 668.5,389.3 672.0,389.0 674.0,390.4 676.9,391.9 679.0,393.0 681.9,394.3 681.2,398.1 684.0,398.4 685.0,401.0 689.6,402.1 689.0,405.3 690.0,409.0 693.6,411.5 690.7,414.6 689.5,418.5 686.8,416.2 684.6,416.6 683.1,414.0 679.5,413.6 677.0,412.2 675.1,412.6 671.3,414.3 668.8,411.4 666.8,413.0 663.9,409.9 662.0,411.0 660.4,413.2 656.5,414.3 655.3,416.3 652.0,417.2 642.0,428.5 630.8,433.5 633.2,446.0 652.0,479.8 668.2,533.5 677.0,568.5 705.8,567.2 713.2,547.2 723.2,533.5 727.0,531.0 729.9,530.7 732.9,529.5 733.8,528.4 737.0,527.2 740.5,529.0 741.7,525.0 744.2,523.6 747.0,525.5 749.5,523.5 752.0,526.0 749.1,525.2 747.9,530.8 744.3,530.8 742.0,531.0 738.4,531.2 736.3,533.0 734.5,532.4 732.0,534.8 729.3,538.0 731.6,541.2 728.2,543.5 729.7,545.1 729.9,548.0 732.0,551.0 735.2,551.2 738.3,549.4 742.0,548.5 745.2,550.9 749.7,548.9 752.0,546.0 755.1,547.1 757.0,548.5 756.4,551.0 752.7,554.1 748.9,554.7 748.2,557.2 747.4,559.5 746.1,561.4 745.8,564.8 748.6,568.0 748.2,571.0 752.0,573.5 751.8,575.5 750.6,579.3 749.5,581.0 748.4,583.6 748.9,586.6 742.0,585.9 743.2,589.8 741.2,591.5 742.4,595.6 740.8,598.5 742.4,602.2 743.2,604.8 746.5,605.8 748.9,603.4 750.9,600.9 752.0,598.5 754.2,595.4 757.1,596.0 760.3,594.1 762.0,591.0 763.5,587.7 764.6,585.6 764.7,583.2 767.0,581.0 769.6,583.9 772.0,583.5 774.5,584.9 774.4,587.9 777.0,589.8 779.2,591.5 782.7,592.3 784.8,593.2 787.7,594.5 790.8,594.8 793.3,593.3 792.7,588.9 795.6,587.9 797.0,584.8 800.3,584.7 802.2,584.4 805.6,583.0 808.5,583.5 811.3,582.6 813.2,582.2 847.0,579.8 852.0,573.5 872.0,551.0 883.2,523.5 889.5,501.0 894.0,481.0 902.0,465.0 782.5,463.5 780.8,421.0 778.2,371.0 774.5,347.0 770.8,261.0 767.0,186.0 763.2,129.8Z M607.0,269.8 612.0,266.0 622.0,271.0 647.0,281.0 648.2,286.0 649.5,306.0 644.0,321.0 639.5,336.0 634.0,337.0 635.0,339.0 623.9,327.9 614.5,318.5 610.8,311.0 601.4,305.4 595.8,311.0 588.2,309.0 580.8,296.0 584.5,286.6 592.0,283.0 601.0,277.0Z M640.0,379.0 644.0,378.0 645.7,380.7 646.0,384.0 646.1,388.1 644.0,390.0 641.0,387.0 639.4,383.8 639.0,381.6Z M712.0,576.0 714.5,573.3 717.0,571.0 718.5,573.3 722.0,575.0 723.2,578.0 723.1,580.3 723.9,584.1 723.1,586.3 723.0,589.0 722.0,592.4 721.0,595.0 718.2,595.7 715.4,593.1 713.9,597.4 711.0,594.0 710.1,590.6 709.9,587.9 709.0,586.0 710.0,583.0 710.3,578.5Z M711.0,551.0 714.0,549.7 717.0,548.0 717.6,550.6 718.1,552.7 720.0,556.0 718.4,558.0 720.0,561.0 717.7,560.5 715.0,563.0 712.1,560.2 709.0,559.0 709.6,557.2 708.7,553.8Z"/>
<path fill="none" stroke="#000" stroke-width="1.5" stroke-linecap="round" stroke-linejoin="round" d="M874.8 544.9l-5.1 .4-6.4 1.8-.4-4.3-.4-4.2 2.9-3.2 1.9-3.9 6.6 .2 4.1 5.3 0 .1M827.7 581.5l2.1-2.9 1.8-5.9-2.2-5.8-3.5-5 2.1-5.7 5.9-1.3 5.9 1.2 4.4-4.1 4.2 1.8 2.2 4.1 3.3-3.5 4.8 .2 1.5-4.3 3.1-3.2M867.3 531.5l-2-2.9-5.3 1.3-4.9-2.7-2.4 3.3-3.2 2.5-2 3.9-4.1 1.5-3 5.9 3.1 5.9-6-.8-5.8-1.6-5.1-3.9-6.4 .5-1.4-3.5-1.3-3.4-1.8-3.4-.7-3.7 4.7 1.3 4.6-1.4 4.1-2.8 1.4-4.7 2.1 5.1 1.7 5.3 3.5 5.3 6.3-.1M412.7 275.6l.2 .4 3.7 2.4-1 4.5 2.5 3.8-9.1 1.4M273.1 139.2l-.3-6.3-3.8-3.5M302.8 154.1l2-.9 3.3-2.7 2.8-3.4 4.2 1.5 4.3-.9 3.8-2.4 4.5 .5-.7-4.4-5.5-1.4-2.4-5-5.5 2-4.7-3.4-2.6 2.8 .3 3.9-2.8 2.2-3.5 1.1 .1 3.7 .9 3.5-.7 .4M517.4 477.6l2-.8 2.5-3.1 .2-4.1 4.7-1.6 4.7 1.7 4.1-.3 3.2 2.5 .7 4.2 3.6 2.2 1 4.7-2.7 4.1-.3 4.4-1.1 4.4-5.7 1.6-2.3 5.4-1.7 2M546.8 495l-1.6-.7-5.2 1.6M554.3 513.7l1.1-1.8 .8-4.3-.4-4.4-3.6-2.7-2-4-2.8-1.2M558.8 520.5l1.1-.8 3.8-.4-.2-6.9 .6-7 .1-3.8-1-3.7-2.6-3.2-4-.7-6.4 2.5M632.2 499l-4.4 .7-3.7-2.8-4 1.5-3.3 2.7 3.6 5.4 4.5 4.5-1.7-4.4 2.7-3.8 4.5-.3 2.4-3.1M638.1 500.7l-1.6-.1-.3-.1M637.8 500.4l-.8 .4-.6-.3M764.6 586.4l-1.4-3.2 1-3.8 2.4-4.7 5.5-1.8 6.1 1 4.8 3.8 4.4 4 4.6 3.8 1.1 4.2M793.1 589.9l-1.1 4.3 0 .2M825.9 561.9l-6-1-6 0-4.8 3.2-3.9 4.2 5.1 4.2 6 2.6 5.5 3.6 2.7 3M844.2 552l-.7-1.8M813.9 560.9l.9-5-.7-5 4.6-1.8 1.5-4.7M814.1 550.9l-3-2.9-4-1-1.8-4.6-2.9-4.1 .2-5 2.7-4.4 5.3-1.9 4.4 3.4M426.9 302.2l1.3-1.3-.8-5.5-4.7-2.8-1.3-5.2-3.3-.7M436.5 129.4l3.1 3.5-.3 5.8 4.6 3.7 5.8-.9 6.5-1.8 4.3-5.1 5.7-3.1 6.6-.1 1.4 3.3-4.9 1.7-1.3 5.1-2 4.8 2.9 4.3-5.8-1-3.8-4.4-5.3 2-5.6-.7 1.3-5M556.4 140.8l-.9 4.7 4.4 3 5.1 1.8 3.2-3.5 4.7 .4-.2-5.6-1.9-4.2-3.4-3-5 4-6 2.4-3.3-2.6-1.7-3.8-4.1-1.3-2.7-3.3-1.9 3.1-.2 3.7-3.2 2-1.1 3.6-4.9 2.1-4.9-2.2-1.7-4.8-4.4-2.8-1.3-2.8-5.7 .6-4.2 3.9-4.2 3.5-4.1 3.6-4-.6-3.8 .7-1.9 3.4-4.3-3.8-5.4-1.9-5.6-1.7-3.6-4.7M487.7 463.5l6.7-.5 1.3-3.5 1.4-3.5 3.1-2.6 .7-4 1.7-5.8-4-4.7-1-.7-6.3-.9-5.7 3.3-.2 4.8-3 3.6 2.9 3 0 4.2 1.7 3.5 .7 3.8-2.7 3.9-4.3 1.9-.8-4.8-.7-4.7-3.1-4.4-5.4-.2-7.9 9.2-3 1.4M564.1 505.4l3.6-2 3.6 1.8 2.7 2.7 3.1 2.2 3.7 1.2 1 1.4M722.8 590.6l-3.4-1.1-6.2 .4 1.4 2.8 6.8 .4 .6 0M584.4 511.4l.5-1.2 2.5-4 .9-3.8 .6-3.7-2.9-2.5-2.4-3.1 1.9-2.9 1.4-3.2 6.8 0 6.8 .2 2.5 3.4 1 4.1-1.7 5.1-4.3 3-6.2-1.1-4.4 4.5M598 502.8l-.1 3.8 .6 3.8 3.3 2 3.1 2.3-1.5 1.7-5.7 3.9-.7 4.4M583.6 493.1l-4.2 2.8-4.9-1.3 .3 5.9-3.5 4.7M604 494.7l4.1 2.7 4.9 .7 3.1-2.6 0-4-.9-3.9 2.2-3.4 3-3 4.3 .8 1.3-3.8 3.4-2.2-6.3-2.4-6.8 .2-5.5 4.1-6.6 1.5-2 3.9-1.7 3.9M543.1 478.3l4.7-2.1 5 1.2 4.1-3.1 2-4.7 6.9 .7 4.2 5.4 1 2.9-3.5 4.7-.5 5.8-5 2.2-5 2.1 1.4-4.3-2.2-4.1-2.2-3.6-1.2-4M557 493.4l-.4 .6M531.5 469.7l5.5-2.9 4.5-4.3 5.4-2.8 5-3.7 2.8 2.2 2.4 2.7 .8 4.4 1 4.3M567 489.1l2.7 4.1 4.8 1.4M586.9 487l-1.5-2.7-4-.8-4.2 .3-2.7-3.1-3.5-2.1M865.3 528.6l2.8-3.7 6.1 2 6.2-1.9 1.8 1.8M896.5 476.7l-4.2-.2-5.2-1.1-5.4 1.4-3.5 4.4-.5 .6 .1 .3 2.7 3.5-.5 4.4 4.2 .9 3.1 3 4-.6 .2 .1-4.5-4-6.2 1.8 2.6 2.9 1.9 3.4 2.7-2.8 3.4-1M646.6 470.6l4.8 2.1 5.5-2.7 5.4 3.1 .9 6.1 5.3-1.6 5.1 2.3 5.2-1.6 3.2-4.5 1.8 4.2 4.3 1.2 .5 4.3 3 3.1-5.9 1.6-5.8 1.7-5.5 3.3-6.3-.1-2.2 3.1 .8 3.8-2.2 3.4-4 .1 1.4 6.4-.4 2.1M641.3 485.4l0 1-.1 3.7 1.2 .7M616.8 501.1l-2.6-1-1.2-2M634.9 468.6l-.9 5-4.6 2.4M766.6 574.7l-2.1-3.3-2.2-3.2-2.2-3.3-1.6-3.6 5.1-1.6 5.3-.4 4.1 .6 3 2.8-1 5.5-2.9 4.7M758.5 561.3l-3.3-1.2-1 4.9 2.3 4.4 .3 5.1-3.2 3.9 5 3.4 5.6-2.4M738.9 549.5l-1.4-4.1 5-2.2 2.7-4.8 2-5.1 5.7-.9 4.1-4.1 4.5-3.7 5.8 .2 2.2 6.5 1.6 6.6-5.2 1.4-3.8 3.9 4.7 3 3.9 3.8 3.7-2.2 4.2 .5-1.5-5 2.2-4.7-4.1-.6-4.1-.1M762.1 543.2l-4.9 2.2-4.9-2.1-4.9-2.7-4.9 2.6M755.2 560.1l-6.5 .1-1.4-1.3M770.7 550l-.2 4.8-1.6 4.5M878.2 481.2l1.9-3.5 1.1-3.8 3.4-2.1 3.3-2.1 4.5 4.1 4.3 2.4M886.4 464.5l1.5 5.2M506.7 392.7l2.4 0 1.8 3.4 3.2 1.9-.6 5.5-3.4 4.5-4-.4-3.2-2.5-.1-4 3.3-2.2-1.2-2.9M723.3 588.5l-1.8-.7-2.9-2.1-.3 .4 1.1 3.4M792 585.5l2.4-6.4 2.8-2.5 2.8-2.6 4-1.5 1.1-4.1 .2-5.4-4.5-3.1-2.1-4.2-3.3-3.4-1-.6-4.6 3.5-5.8-.1-2.8 6.1 4 5.4-1.5 6.5 4.5 4.5 6.2 1.5M781.2 561.2l-5.2 1.5M805.1 568.4l.1-.1M795.4 552.3l3.6-1 3.5 1.1 2-2.9 2.6-2.5M784 555.1l-1-4.8-4.4-2M794.4 551.7l-2.4-4.4-2.7-4.2 3.5-4-.1-5.3-3.3-.9-4.4 .8-2 3.5-3.7 1.4M805.3 528.9l-.4-.1-6.1 2.4-6.1 2.6M383.9 239.6l-.5-4.2-1-4.3-4.1-1.7-3.3-2.4-1.5-3.8-1.4-5.1-4.9-1.8-2.6-.3M382.8 194.2l-4.3-3-5.1-.6-3 3-2.2 5.3 .5 5.6 3.9-.2 3.1 2.2 .8 4.1 3.8 1.4 4-2 2.6-3.7-.3-4.5-3.7-2.9-.1-4.7 5.5-3.3 5.1 2.3 5.5 0 1.5 4.1 4.8 1.7 4.6 2.1 .7 .9-3.4 4.7-.9 5.7-.7 .1-6.3-.8-3.2-5.4 2.1-4.6 2.3-4.4M396 206.3l-3.3 4.1-5.2 .4 3.6 1.4 3.1 2.1 1.8 3.7-1 3.9 2.6 .4 3.3-5.4 4.6-4.4M397.6 222.3l1.4 1.2 .9 4.7 3.2 3.6 .2 4.7 .6 4.6-5.2 1.3M383.4 235.4l3-3.3 2.6-3.6 4.4-2.1 1.6-4.5M444.6 305.1l4.7-2-.4-4.2-.2-4.3-5.1-3.4-2.9 1.1-.5 5.6-1.6 5.6-.5 1.6M415.1 273.7l.6 .2 4.9-1.2 2.6-3.5 4.3-.5 3.1-5.1-1.7-5.7-.1-.1-4.4-.1-4.3-1.3-3.8 2.6M319.1 162.6l3-3.3 2.5-4.1 2.6-4 1-4.8 6.1-.1 5.2 3.2 2.5-3.6 2.9-3.2 1-4-3.7-2.9-4.4-1.8-4.6 4-5.5 2.3-.7 1.1M468.9 150.6l.8 3.5 .6 .7 3.1 4.4 4.9 2.4 5.8 1.2 4.5-3.8 3.2-5.3-.9-3.7 2.2-3.2M469.7 154.1l-4.8 0-3.1 3.5-3.3 2.9-3.9 1.9 2.5 3.1-.8 3.9 2.7 2.9-.4 4 4.7 1.5 6.1-1.6-1.6-5.3-.1-5.5 1-5.4 1.6-5.2M522.3 134.5l1.1 4.9-1.5 4.7-2.7 4.4 .6 5-2 0-3.4-3.4-4.8-.7-4.3-2-2.5-4.1M475 199.2l.4 1.7 3.8 3.2 3.5 3.6 4.4-.7 4.2-1.5 .9-6.6-4.6-4.8-5.9-2.7-5.5 2-1.2 5.8-.1 0-3.2-2.5-1.5-3.7-3.5-1.7-3.2-2.2-3.7 2.9-4 2.2 .2 4.6-1.1 4.5 1.2 .6 4.6-3.2 5.1 2.2 4.2-2.6 4.9-1.1M624.9 511l-1.2 5.8-.2 0-4.1-1.2-1.6-3.9-3.7 2-3.9-1.5-2.2 1.7 2.8 3.4 2.3 3.9 6.2 .1 4.2-4.5M610.2 512.2l2.1-6.1 1.9-6M608 513.9l-3.1 .8M713.6 597.5l1-4.8M570 475.7l5.1-1.5 1.9-5-3.8-1.8-1.9-3.6 .5-3.9 0-3.9-2.4 3.6-4.4 .5-3.9 .7-4 .1M885.7 515.8l-1.5-1.4-3.5 .2-3.1 2.9 .3 .2 4.8-1.1 2.6 .5M877.9 517.7l.5 3.9 2 3.4M868.1 524.9l3.9-4.3-1.1-5.6-1.1-1.3-5.2-4.3-6.6-.9-.1 0 .4 5.9-4.2 4.3 0 4.3 1 4.2M870.9 515l1.5 0 5.2 2.5M858 508.5l1.4-3.5 2.3-2.8 2.4-2.8 3-2.2 2.6 3.7 3.6 2.7 .3 .8-2.5 4.4-1.3 4.9M649.2 537.1l-1.2-.1-5.6 2.3-5.2-3 2-3.9 1.4-4.1-3.6 2.4-4.3 .1 .3 3.7 2.6 2.8 1.6-1M665.8 526.5l.6-1-.5-6.1-2.7-1.6M640.6 528.3l1.9-2.2-5.1-.7-5.1-.2-1.1 4.8 1.5 .8M632.3 525.2l-3.3-1.9-1.1-3.7 1.6-3.9 2.8-3.3 4.5 1.1 3.8-2.7 2.3 .5M643.3 464.6l-.5-1.7 3.8-4.9 .4-6.1 5-3.2 4.7-3.4 5.9-1.1 5.8 .4 4.1-4.4 5.4-2.6 5.2 2.1 5.2 2 2.3 5.3 .3 5.7-.9 5.7-2.6 5.1-4.1 4.5-1.3 5.8M829.8 522.8l.4-3.1 2.6-4.2 4.9-.7 4.3-.2 4 1.8 4.3 .1 3.8 2.2M789.4 532.9l.1-4-2.5-3.1 .2-3.8-1.2-3.6 4.7-1.9 1.8-4.8 5.2 .7 3.6 3.9 3.2 4 .1 5.3 .3 3.2M792.5 511.7l0-1.3 4.9-1.4 4.9-1 3.3 3.8 2 4.7 .8 5.3-3.8 3.8M775.5 351.4l-.4 0-6.1 1.5-3.1 5.6-6.5-.5-4.3 4.8-1.6 6.4-6.1 2.3 2.2 5.2-1.4 5.4 4.3 .7 3.6 2.5 3.6 1.4 3.7-1.1 0-5.9 4.1-4.3 4.1-3.8 1.7-5.5 4.1-2.5M775.2 349.6l-.2 0-3-3.2-2.3-3.5-3.5-2.1-.5-4-1.4-3.8-1.5 3.6-3 2.5-3.3 2.3-4-.5-3.8-.3-3.4-1.8-3.6 .8-3.5 1.2-3.2 3.1-1.1 5.3 3.5 2 .5 4-.2 3.6-.5 3.6 4.6 5 5.6 4.1M727 260.3l-5.4-1.2-5.5-.1-5.8-2.3-1.4-6-1-5 1-5 6.3 3.1 6.7-2.1 6.4-.9 6.5-.3 .1 1-2.5 5.9 3.3 5.5-5.6 2.2-3.1 5.2 2.2 4.1 1.1 4.6 1.4-3.7-.9-3.8 3.2-1.9 3.1-2 2.9-2.4 3-2 3.4 1.4 3.8 .2-4.5-3.3-5.5-.7-2.6-4.7-2.7-4.6M718.3 586.1l-3.9 .7-1.5 2.8 .3 .3M709.7 588.3l3.2 1.3M718.6 585.7l-.3-2.6 4.7-2.2 .5 0M763.3 588.8l-.1-.3-4.3-.5-3.9-.3-3.3-2.1-.6 3.5-.8 3.5 .2 .6 3.3-1.9 3.9 .1 3.4 2M751.7 585.6l-1.9-5 3.8-2.2M399 223.5l5 2.2 5.2-1.9 3.7-5.9-.8-1.6-3-1.8-2.9-2.1M380.3 212l-3 1.9-2.9 2.2-.5 3.5-.4 3.6M384.3 210l3.2 .8M368.7 204.5l-3.8 2.9-2.1 3.8M370.4 193.6l-5.1-1.3-5.2-.9-4.8 2.2-2.9 .9M373.4 190.6l-.7-6.4-2.5-6-4.2-.1-3.6-2-5.3 3.8-6 2.4 .5 3.8 2.6 2.8-.5 2.1M443.6 291.2l3.2-5.3 1-.4 .4-3.5 .9-3.4-1.7-2 1.1-2.6-.3-2.3-1.6-1-.6-5.4-5.8-1.1-.8 4.7 3.3 3.3 3.9-1.5M428.9 257.9l3.7-.2 3.7 .1 2.7 2.8 1.2 3.6M439.4 268.9l-3.9 3-4.5 .2-3.5-3.4M436.3 257.8l2.8-3 3.5-2.3 4.2 2.6 4.9 1 0 .6-1.4 4.4-2.9 3.6-1.4 .6M435.5 271.9l3.1 3 1.3 4.1-2.9 2.1 1.6 4.7-1 4.9-4 .3-4.9-1.8-2.9-4.5 .4-1 4.5-3.7 6.3 1.1M430.7 280l.9-3.9-.6-4M425.8 284.7l-4.4 2.7M433.6 291l.5 4.8-1.7 4.5-3.9 2.5M437.6 290.7l3.1 1.6M426.2 283.7l-.8-6.6-4.8-4.4M403.9 241.1l4.1-4.1 5.7 .3 3 1.8 .9 4.4-.1 4.5 2.9 3.7-.3 4.7M413.7 237.3l.1-.5 1.4-3.6-1.7-3.6-1-3.7-3.3-2.1M428.8 257.8l.1-5.2-3.8-3.4 1.8-4.3 2.6-4 6.6 .2 6.6 .3-.7 5.5 .6 5.6M429.5 240.9l-1.3-1-5.8 .5-5.7-1.3M339.5 149.5l.7 1.2-2.4 3.1-.1 3.9 1.7 3.4 2.8 2.5-1.1 3.8-1.1 1.4M327.7 145.8l.5 .6M458.6 176.3l-4 1.1-3.7 1.8-3.3-4-5-1.5 0-5-2.2-4.5 5.2-2.5 3.5-4.6-1.5-4.5-.1-4.8-5.6-.1-4.4-3.6-6-.5-4 4.4-1 .6-.5 5-3.5 3.5 3.7 1.8 1 4 6.6 .5 6.6 .8M449.1 157.1l2.2 3.2 3.3 2.1M447.5 147.8l.9-1.3M427.5 148l-3.1-4.8 .6-5.8 .7-6.1 3.8-1.9M469.4 176.2l2.5 .3 3.3-4.1 5.3-.5 4.8-1.9 2.5-4.5 .7-3.7 .1-2.8M456.1 203.9l3.7 2.2 3.9 1.8 3.7 3.2-.2 4.7 1.8 5.5-.1 .1-4.8 .8-4.6 1.6-6.3-2.1-3.5-5.8 2.1-3.2-1-3.7 1.2-3.4 2.8-2.3 .1 0M532.5 431.3l-4.3 2.3-2.5 5.4 6.2 2 5.2 4 4.1-2.9 4.6 1.7 .3 0 .1-6.2-2.7-5.5-3.5-4.5-2.4 .2-1.7-1.1-2.9 1.8-.5 2.8 3.9 1.6 1.2-5.1M545.8 443.8l-3.1-2.9 .4-4.3-4.4 0-2.3-3.7M537.1 445l-3.1 6-6 2.7-2.8 5.8-3.8 5-1.2-2.1-.6-5.5 2.3-5.1-2.5-4.9-.4-5.4 4.2-2.2 2.5-.3M491.3 437.3l3-3.8-.5-4.9-3.4-3-2.2-4.1-.6-.5M493 410.3l1.6 1.4 4.2 3.9 .9 4.9 1.8 4.7-2.8 6.3-1.1 6.7M498.6 438.9l4.6-2 4.9 .7 3-4.9 3.1-4.8-1.6-4-3.5-2.5-3.4 2.7-4.2 1.1M519 441.5l-6.5 1.1-4.4-5M500.9 449.4l5.9 2.1 6.2 .8 5.6 3.6 1.6 6.5M485.6 440.6l-7.4-8.2-2.4-1M482.4 449l-6.8 1.3-4.9 4.9M522.1 469.6l-.7-5.1M494.4 463l3.3 2.4 0 4 3.5 .9 1.4 .5M546.1 443.8l3.2 1.2-1.8 6.2 4.4 4.8M631.2 530l-3.4 1.3-.3 1.5 2.3 3.1 5.2 2.2-.5 4.6-4.8 .7-4.6-1.4 3.2-2.4 1.5-3.7M635 538.1l.6-.8M634.5 542.7l1 3.7 .3 3.9 .9 3.8 2 3.3 1.5 2.3M653.7 546.6l-1.8 .5-1.6 4.4-4.4 1.4-2.6 4.1-.6 4.8 2.9 1.7M741.8 590.6l1.4 1.8 0 .1-.7 1.8-.7 .5M743.2 592.5l5.3-.5 1.8 .6M750.5 593.2l-.7 2.6-.5 .2-3.9 1-2.9-2.7M571.8 456l.8-.9 6.5 .4 6.4-.5 1.4 4.2 1.9 3.9 7 .2 4.9 3.1 2.1 5.4 .6 5.8-4.5 1.1-3.8-2.5-3.1-3.2-4.5-.6-1.3-4.7 2.6-4.6M595.8 463.3l3.8-1.5 1.6-3.8 4.9 4.3 6.3-1.4-2.7 2.7-3.5 1.5-3.2 2.6-.2 4.1M603.4 477.6l.8 1.8M587.5 472.4l1.5 6.4-3.6 5.5M586.2 467.7l-4.4 1.9-4.8-.4M687.4 463.5l3.5 3.7 5.1-.6 4.5-.6 4.6-.2 2.7 6-2.8 5.9-2.1 6.3-4.3 .9-2.4 3.8-4.6-2.1M696.2 488.7l2.3 3.3 3.3 2.3-.4 4.2 2.1 3.6 3.1 2.2 3.7 .9 3.3-2.5 4 1.1 3.2-2.1 2.1-3.2 1.8-3.1 2.4-2.7 2.1-3.3 3.9-.8-2.1-5 .2-5.5-4.5-1.3-4.5 1.5-5.4 1-3.6 4.1-5.2-1.5-5.1 2.1M703.5 502.1l-4.5 2.2-4.4 2.4-4.8 1.6-4.7 1.8 1.1 5.6 2.3 5.1-2.2 5.4-4.5 3.7-2.6-3.7-4.5-.4-4.2 .5-4.1-.8M710.3 505.2l2.9 3.7 2.5 3.9-2.8 3.9-.4 4.9 3.4 3.2 4.6-.7 3.5 2.2 3.5 2.3 1.7-4.2 4.2-1.6 4.1-1.5 2.3-3.7 1.5-4.1-.7-4.4 3.6-2.7 1.6-4.1-.2-5.4-4.2-3.2-5-1.1-3.3-4M757 528.3l-1.6-6 2.2-5.8-2.5-5.4-.5-6 4.7 3.3 4.9 3 6-1.5 5.8-2.2 1.9 2.3 .5 6.2-3.6 2.6-2.7 3.6-2.5 .2-.7-6.6-4.7-4.6M769.6 522.6l-2.3 2.2M792.5 510.4l-2-3.7-6.9-.8-5.7 4.1M778.4 516.2l3.8 1.1 3.8 1.1M772.1 522.4l4.9 .2 2.7 4.1 2.7 3.5 2.6 3.5M705.1 465.8l.5-.4 3.5-2.3 .1-4.2-1.3-3.4-.6-3.7-.2-1.5-3.6-2 2.7-2.8 .7-3.9 .7-3.8-1.6-3.6 3.8 3 4.8 .3 4.4-.9 4.5-1.1 2.7 2.9 3.8 .9 1.6 5.5 2.3 5.2-6.1 .3-5.9 1.7-2.9-3.1-4.2-.4-3.6 2.1-4.1-.3M703.5 448.3l-6.1 2.7-6.5 1.7M706 434.2l-.2-.6-6.1-.4-5.9-1.8-5.4-4.2-6.6 2-3.8 4.6-.1 3.8M779.6 392.1l-1.4-.3-7.5 0-4.3-2.3-3-3.9M770.7 391.8l2.2 4.3-1.9 4.3 1.7 4.6-2.8 4-3.1 3.3-4.2 1.5-4.5-.7-3.4-3 3.5-5.6 .8-6.6-1.8-3.1-2.4-2.5 2-3.2-.7-3.8M735 343.9l-2.4-2.6-3-1.9-3.9-.6-2-3.4-3.1-2.1-3.8-.2-3.5 1-3.6 .5-1.4-5.6-5.5-1.9-1.3-5-2.5-4.5 1-5.1 4.7-2.6 5.2 1.3 3.9-3.2 4.9-1.3 4 1.4 4.1 0 4.6-.4 3.1 3.4 1 5.4 4.9 2.2-.3 5.6 .3 5.6 1.2 5.9-3.4 5M873.3 503.6l2.6-2.5 3.1-1.8 0-.3-5.6 0-4.2-3.8-1.9 1.3-.2 .7M869.2 495.2l4.7-4.1 3.4-5.3 3.1 5.1-1.7 3.7 .6 4-.3 .4M887.6 509l-2.3-.7-3-4.7 3.4-2.7 2.6 4.7 .2 .1M643.4 144.3l4.2 5 .2 3.6-4-2.1-4.4 .7-2.3 4-4.4 1.4-1.2-6.2 .7-6.3 .7-.4 3.1-5.9 2.6-6.1 5.8 1.4 4.6 3.7-3 3.4-2.6 3.8-5.2-1.8-5.3 1.5M680 137.9l-.5-2 3.1-5.5 1.3-1M649 137.1l6.5-2.4 4.5 2 1.7 4.7 5 2.8 .6-.1 3.2-2 5.3 1.7 5.2-1.8M555.5 145.5l-4.8 3-2.9 5 4.1-2.1 4.4 .9 3.7 2.5 1.9 4 1-4.5 2.1-4M572.7 141.6l3.8-2.9 4.6 1.2 4.5-.6 3-3.5 .6-5.3-.4-1.1M538.2 142.2l1.3 3.8 2.6 3.1-3.3 3.1 .7 4.4 4-2.1 4.3-1M561.9 158.8l2.6 4.5 5.4 .6 3.6-1.1 2.8-2.3-.7-3.9 2.2-3.3-1.5-3.8-3.4-2.3M569.9 163.9l3 4.7-5.4 4.4 .3 7-6.3-2.3-6.4-2-.4-2.5 3.9-.8 1.6-3.5 3-2.2 1.3-3.4M771.5 270.6l-.7 .6-2.1 3.8-4.1 1.2-4.2-1.6-3-3.2-4.3-.9-4.3 1.3-4.5 .5-2.9 3.5-4.2 .8-4.2-.8 5.2 .4 2.6 4.4-.4 4.7 1 4.5 5.5 4.2 3.1 6.1 6.8 .6 6.6-1.9 6.8-1 2.5 1.3M750.2 254.8l3.7 1 3.7 .6 3.9 .5 3.6 1.1 3.3 3.5 2.7-.2M730.3 269l-.2 4.9 2.9 1.9M741.4 289.8l-2.2 5.2-3.1 4.9 1.7 6-3.3 5.2M730.1 273.9l-6.1 1.2-4.6 4.1 2.6 2.9 2 3.4-1.8 3.6-.6 3.9-1.5 3.4-2.3 2.9 .3 3.7 .6 3.7M773.9 326.8l-1.9 .1-6.4 3.4-6.5-2.6-6.9-1.4-6.4-3-5.4-4.6M460.2 313.5l1.5-1.7-3.5-4.4-2.8 2.9M410.5 202l.9 .3 3.6 4.5 1.1 3.3-1.2 3.7-2.8 2.5M442.7 272.2l.1 4.4-2.4 2.4-.5 0M446.8 285.9l-3.3-3.3-3.1-3.6M442.7 241.4l0-.1 4.2-2 4.5 .5 4.5 .9 3.8 2.5-.1 5.6-3.7 4.3-4.2 3M459.7 243.2l.2-.2 .1-4.2-3.2-2.7 0-4.1-2.9-2.9-4.8 .3-1.3 4.8-4.4 2-.7 5.1M443.4 236.2l-2.8-4.8-4.5-3.2-.8 .1-3.2 1.2-2.1 2.9-2.6 3.3 .8 4.2M388.3 190.9l-.2-6.2 .5-6.2 5-1.3 4.9 1.6-1.1 6.2 3.8 4.9-2.3 3.3M388.6 178.5l-2.8-3.5-4.3-2.4-4.8 1.1-3.3 2.2-3.2 2.3M342.2 163.6l5.9-.4 2.3 1.1 3.3 2.3 1.5-4.2 4-2-1.7-2.4-2.3 4.6-4.8 1.7M353.7 166.6l2.5 4.7 4.4 3-4.8-3.5-5.9-.6-5.9 .7-2.9-1.1M360.6 174.3l.2 .1 1.6 1.7M426.5 148.6l-2.9-2.5-3.4-1.9-1.2-3.7-.7-3.8-3.6-1.6-1.7-3.6-3.8-.4-2-1.7M442.6 173.7l-3.6 2.5-4.3-.9-2.7-3.5-3.9-1.9-3.3 4.2-2.1 5 3.3 3.5 4.7 .4 3.4-1.9 .6-5.8M428.1 169.9l-1.6-3.3 .7-3.7M487.8 165.5l1.7 2.3-.4 6.7 2.2 6.3-6.1 1.1-4.5 4.3-3.7-5.4-5.1-4.3M488.5 161.8l4.3-.4 4.2-1.3 1.5 4.6 4.5 1.6 2-3.7-1.9-3.7-4.7-4.6-6.6-.6M503.1 158.9l5.7 .7 4-2.1 5-4M494.6 411.7l5.4-1.6 2.9-5M498.8 415.6l6.4 .5 6-2 1.2-1.8-2.3-4.3M511.2 414.1l-.2 3.2-1.9 4.1M509.1 392.7l2.4-2.8 4.5-1.6 4.8-.5 1.5 5.4 3 4.8-3.7 1.5-3.7-1.1-3.8-.4M521.6 399.5l-3.8 1.5-.8 4 2.6 3.1-1 4-6.2 .2M543.5 432.1l3.4-3.1-.8-4.5 4.2 .4 3.4 2.5-2 3-.5 3.7-.1 4.1 3.3 2.4-5.1 4.4M553.7 427.4l0-.1 5.8-1.7 4.6-4 2.3 .6-3.1 3.5 1.1 4.5 1.6 3.9 2.8 3-3.7 .5-3.4 1.6-3.7 .6-3.6 .8M564.1 421.6l-1.6-3.6-3.6-1.7-2.5 2.7-3.4 1.1 1.6 3.5-.9 3.7M546.1 424.5l-1.1-1.5 4.3-5.3 3.7 2.4M612.4 460.9l4.3-.6 4.2-1.6 4.4 2.4 1.2-.1M641.3 461.2l.8 .6 .7 1.1M625.1 542l-.2-.4-5.1-3.4-3.5 2.1-.4-4.2 3.3-.8 .9 .7-.3 2.2M627.9 519.6l-2.6-.5-.5 4.5 .6 4.5 2.4 3.2M625.3 519.1l-.6-.5-1-1.8M606.2 532.8l.9-1.3-3.6-3.2 4.4-2 .7-1.2-.9-5.4-4.3-3.3M742.7 589l1.2 .4 1.7-2.5 .7 3.3-2.1 .3-.3-1.1M744.2 590.5l-1 1.9M745.6 586.9l.2-.9M746.3 590.2l2.2 1.8M749.3 596l-1.5 1.4-2.1 4.3-3.6-3.4 5.7-.9M742.1 598.3l-1.3-.4M880.7 514.6l.6-3 2-1 .9 3.8M881.3 511.6l-3.6-1-5.3 4.4M883.3 510.6l.7-1.3 1.3-1M697.1 567.9l-.4-.1-2.3-5.9 1.7-4.1-1.8-3.9 2.6-3.2 3.7-1.8 3.3-2.3 3.6-1.7 4.2-1.8 .8-4.4 2.8 3.3 2 .2M733.1 551.4l0-6.2-4-2.6M713.4 580l-1.2 .3-2 2.5 4.4 1 1-1.4-.2-1.4-2-1-.4-5.6 .5 .1 6-.8 .1 .8 1.8 3.5 2 2.2M700.6 548.9l0-3.9-.2-3.9-3.6-2.1-1.1-4.1-4.4-.8-1.6-4.1-3.9-.2-4 .1M727.8 531.2l-.3-2.6M733.1 545.2l4.4 .2M754.6 505.1l-2.7-3.4-6.1 .6M694.4 561.9l-.8 1-3.1 3.6-4.4 1.7-.1 .2M751.9 501.7l1.5-5.2 5.1-1.6 3 4.1 5.1 .3 4.9 .9 4.1-2.9-1.7 5.3 2.1 5.1M790.5 506.7l0-1.8-1.1-2.5-6.1-2.5-5-4.2-2.7 1.6M721.9 452l-.4 6.6-4.8 4.7 0 .8 5.3 2.2 5.6 1 2 5.3 1.6 5.5 3.2-4.6 6.7 2 5.3 4.5 6.8-.2 6.8-.5 .9 1-.9 4.7-4.3 2 .1 4.4 2.7 3.5M734.4 473.5l4.2-4 1.3-5.6 2-6-4-4.9 4.3 3.1 4.9 2 4-4.2 5.9 .8 .7 3.7-1.6 3.5-2.5 2.7-1.9 3.2 3.1 2.1 1.2 3.5 3 2.3 1 3.6M830.2 519.7l-1.3-3.9-2.8-2.9-3.9-.1-3.3-2.1-6.6 1.3-4.7 4.5M864.9 464.2l.5 2.5 .5 5.1 1 5-4.2 .7-1.9 3.8-4.6-4.2-5.7-2.2-1.7-5.8-5.5-2.6 .9-2.5M769.9 409l3.6 3.8 3.5 2.1 .4 4.1 3.5 1.2 .1 .1M877.7 464.4l3.8 3.8-.3 5.7M866.9 476.8l4.6 4.1 6.2 .9M877.3 485.8l.5-3.7M860.8 481.3l-2.7 6.3 5.1 3.9 4.1 5M760.9 480.3l5.7-1.7 6.2 2.2 6.2 1.9 1.1 4.9-.4 3.7-1.1 3.6-.3 .8M858.1 487.6l-5 2.3-2.9 5.7-1.2 6.3 2.8 5.7 6.1 .9M849 501.9l-4.1 .5-1.7 3.2-2.3 2.8-1.3 3.4-1.9 3M844.9 502.4l-.8-4.4-3-3.5-4.5 .5-4.3-1.4-3.4 1.4 1.3 4.9 1.6 4.7-4.5 3.1-1.2 5.2M885.3 497.5l-.3 1.1 .7 2.3M880.8 491.2l-.4-.3M885 498.6l-5.7 0M661.7 141.4l-3.6 3.2-1.3 4.6-4.6 0-4.6 .1M719.4 279.2l-2.5-2.8-2.5-2.6-3.3-2.7-4 1.4-4.1 1.1-2 3.6-3.6-1.8-4-.1 1.8-3.9-.5-4.2-.7-6.5 4.7-4.5 4.6-3.6 5.6-1.9M584.8 172.6l1.9 4 3.7-1.6 4 .7 4 1 3.8-1.7-2.4-3.8-2.8-3.5 2.6-4-.2-4.7-4.9-.5-2.4 3.5-2.1 3.8-4 2.3-1.2 4.5-1-.8-3.1-3.8-1-4.8 1.8-4.5 .3-4.7 4-1.1 5.3 1.3 3.4 4.3M583.8 171.8l-6.1 .6-4.8-3.8M581.8 154l-4-.7M585.8 152.9l2-5.1 2.5-4.9-2-3.3 .3-3.8M595.7 129.4l-.7 3.6 3.4 1.9 3.4 1.6 2.1 3.5 3.9 1.2 3.4 1 3.5 1.2 2.5-3.4 4.2-.7 4.3 5 6.5 .1M492 235.9l2.5 .8 3 4.3 .6 5.8-1.6 3.2-5.9 2.9-3.5-.9-2-3.2 3.5-6 1.3-6.9 2.1 0 2.7-3.3-.6-4.3 1.2-3.8 1.5-3.7 3.1 1.5 4.1-.9 4.2 .5 1.7 5.2-2.4 4.9-1 .5-5.5 0 2.1-5.4-3.2-4.8M685.3 148.7l-1.4-.2 0-3.1M688.9 152.8l1.5-1.1-2.7-2.7-.5-.1M687.5 153.9l-.7 .6-4.3-1-3.9 2.4-.1 4.6-.1 .1-2.9-4.2-1.6-4.8-4.8-2.5-1.8-5M690.4 151.7l3.1 .6-.1-4.3 2-3.8 .5-4.6 3.6-2.7-1.3-6.8-.8-.7M731.7 133.8l.9 5.1 4.1 3.5 4.3 3.3 4.3-.8 4.2 1.2 4.5-1.2 2.4-4 4.3-5.3-3.8 .6-4 0-2.6 3.6-4.4-.2-4 0-3.6-1.6-3-2.6-3.6-1.6-1.8-3.2-.1-1.2M732.6 138.9l-5.2 3.9-.9 6.5 1.2 2 4.7 5 6.7-.7 3.1-4.6-1.2-5.3M739.1 155.6l1.1 2.3 4.9 2.4 2.8-4.2 5 .1 1.7-3.8-.9-4 1.9-3.5 .8-4M766 166.3l-5.3-1.4-5-3.3-2.8-5.4M734.8 240.5l1.5-3.8 1.5-3.8 3.3-2.8 4.4-.5 3.9-2.3 4.8 3.1 5.1 2.6 1.5 5.5 2.6 5.1 2.5 5.2 3.4 4.7 1.4 .2M461.7 311.8l.1 0 4 2.7 1.1 2 1.5 5.3 .1 1.5M713.5 574.5l1.2 1.4 3.1 1.9 .2 1-2.1 1.4-1.2-4.3M717.8 577.8l1.8-3.3M718 578.8l5 2.1M715.4 581l.5-.8M715.6 582.4l2.7 .7M714.6 583.8l-.2 3M710.2 582.8l-.5 .1M702.5 567.7l-2.9-1.9-6-2.9M712.2 580.3l-2.3-.7M430.7 183l-.2 2.4 2.3 4.7-1.9 1.3-1.6-.1-3.9-2.9 5.1-3M425.4 188.4l-1.2 0-1.5 4.8 4-.1 2.6-1.8M411.4 202.3l6.4-1.3 .2-.4 1.5-6.7-4.8-2.4-1.5 5.2-3.4 4.4M434.1 181.1l5.8 3.7-2.2 3.7-3.9 1.9 1.6 2.1 3.6 .3 3.4 1 4.1-1.8 .2-6.9-6.8-.3M446.7 185.1l3.4-2.1 .8-3.8M433.8 190.4l-1-.3M446.5 192l2.8 2.2 3.2 1.6-.4 3.6 1.6 3.3 1.1 .6M463.5 189.1l.9-5.6-1.1-5.7M435.4 192.5l-.6 2.6 3.6 3.9 4-5.2M453.7 202.7l-4.8 3.2-5.7-.5-4.4-3.2-.1-.1-.6-1.9 .3-1.2M412.9 217.9l1.7 .5 4.2 5.2 1.4 3.8-1.3 6-5.1 3.4M420.2 227.4l1.6-.3 4.4 2.2 3.8 3.1M442.8 276.6l4.6 0M449.1 278.6l3.3-.6 1.4-2.1-.1-1.6-5.2-.3M435.3 228.3l-2.8-5.7 .2-2.2 4.7-.2 1.9-3.3 2-1 4.7 2-.3 6-4.3-.9-3.4 2.6-.6-5.4M438 225.6l-1.9 2.6M445.7 223.9l3.4 5.5M459.5 223.8l-1.6 3.9-4 1.4M446 217.9l3.7-2M340.2 150.7l4.8-1.7 4.5 2.6 1.8 1.4-.6 4.6-2.6 5.6M401.2 189.9l4.7-2.8 5.4-1.4-2-3.4-2.9-2.5-1.5-3.6-.1-3.9-3.7 2.8-2.6 3.7M422.7 179.1l-2.4 1.3-.7 1.1 3.8 2.4 .8 4.5M419.6 181.5l-4.5 .6-2.3 4 1.9 5.4M419.5 193.9l2.7-.1 .5-.6M411.3 185.7l1.5 .4M385.8 175l3-3.1 3.2-3 1.5-4.1 2.6-3.5 5.3 1.8 5.1 2.3-2.7 3 1 3.9M406 129.4l-.6 2.7 .6 3.6-1.8 3-1.1 3.4-2.2 6.4 4.1 5.4 4 5.5 6.8-.4 6.7-1.9M415.8 159l-4.3 2-3 3.7 3.2 3.8 1.8 4.7 4.7 2.3 2.1 4.9M406.5 165.4l2-.7M481.7 191.4l-1-5.2M475.4 200.9l.9 4.9-3.7 3.3-3.8 2.5-1.6 4.2M482.7 207.7l-2.1 4.3-.8 4.8-6.2 .5-4.6 4M491.3 180.8l4.2 2.2 .4 4-.5 4-4.5 0-3.3 3.1M495.5 183l6.1-2.8-2.3-3.4-.3-4.1-3.6-4.7-5.9-.2M519.8 153.5l4.3 3.9 5.3 2.4-2.6 2.2-3.7 .4-3.1 2.2-2.4 3-3.5 1.3-1.8-1.3 2.1-5-1.6-5.1M514.1 168.9l-.5 2.3-.6 4.2 2.6 3.3-.3-5.6 3-4.7 3.4-4.3 5.1-2.1M503 166.3l.3 .2 3.7-2 1.6-4.3 .2-.6M468.9 221.4l-.5 6.4 4.4 4.6 1.8 .6 5.5 .3 5.6-.1 .3-4-2.5-3.2 3.8-1.7 1-4.1-3.4-3.9-5.1 .5M488.3 220.2l6-2.2 2.5 2.8M489.9 235.9l-4.2-2.7M494.5 236.7l2.6-3.1 3.9-1.1M485.1 248.8l-4.4-1.1 1-4.3-2.4-3.7-2.4-3.4-2.3-3.3M497.5 241l4.4 1.6 4.2-1.9-.1-4.1 .5-4.1M496.5 250l1.6 4.2 4.2 1.5-.3 4.9-.3 .6-.5 .1-4.2-1.3-4.1-1.4-2.3-5.7M511 417.3l2.6 3.7 3.9 2.1 2.4-4-.2-4.7-1-2.3-.1 0M517.5 423.1l.6 1.9 3.6-2.2 1.4-4.3-.1-.6-3.3-3.5M514.2 427.9l3.5-1.8 2.7 2.1-.2 6 3 5.1M518.1 425l-.4 1.1M523.1 418.5l2.8 2.5 3-2.1-2.5-1.6-3.4 .6M572.6 455.1l1.4-4.3-1.3-4.4 1.3-4.6-2.9-3.9-2.3-.8M549.3 417.7l-1.6-5.8 3.7-5.4 6.3 2.4 .5 3.7 .7 3.7M583.8 388.2l-4-4.5-3.4-.2-2.5 4.9 3.3 2.8 1.6 6.1 6.3-1.9 .8-3.8 3.4-2-5.5-1.4-2.7 2.8-3.9 .2M619.2 535.3l-.7-4 1.5-1 .1 0 2.3 2.7 4.5 .1-2.5 3.8-2.8-1.3 .8-2.6M621.6 535.6l-1.5 .4M626.9 533.1l.6-.3M620.1 530.3l5.3-2.2M624.4 536.9l.5 4.7M624.7 518.6l-4 4.2-1.7 3.5 1 4M620.7 522.8l-4.1-.9-3.7 2.1 .2-2.8M612.9 524l-.1 .4-4.2 .7M615.9 536.1l-1.5-1.7 3-3.1 1.1 0M877.7 510.6l.6-1.9-1.5-3.2 4.2-2.1-.8 4.7-1.9 .6M880.2 508.1l3.8 1.2M876.8 505.5l-3.2-1.1M879 499.3l2 4.1 1.3 .2M737.9 453l-.7-.9-3.3-2.1M705.6 465.4l3.3 .7 .4 .9-1.4 5.5-2.8 4.9-.1 .3M782.2 449.7l-3.2 0-3.2 3.8-4.5-.9-3.8-2.5-2.2-3-3.4-1.5-2.4-3.3-4-.2 1.1-3.9-2.4-3.3-1-3.8 1.9-3.4 4.1-.3 3.3 2.3 3.8-1.5 1.8-3.6 1.8 3.8-1.3 4 1.9 3.5 2.2 3.3 4.7-.7 3.6 3 1 1.5M754.7 410.1l-4.2 2.8-4.3 2.7 0 .3 .9 6.8 5.6 4 2.4 1M768.1 424.6l1.7-6.4 3.7-5.4M737.2 452.1l4.6-.4 2.6-3.8-1.1-4.3 2-4 2.5-2.8 2.2-3.1 1.6-3.4 1.1-3.6M767.5 450.1l-5.2 2.5-5.3 2.1M766.6 478.6l2.6-3.2 2.5-3.4 2.3-3.6 .7-4.2 4.2-1.8 1.4-4.4 2.2-2.1M642.1 461.8l.6-5.3 4.9-2.4 2.4-4.1 3.3-3.5 .3-6.1 5.4-2.9-1.6-5.1-2.5-4.7 3.4-2.1 3.8-1.2 3.1 2.5 3.7 1.4 3.8 4.1 5.3 1.4M730 439.3l.5-1.9 1.2-6.1 3.7-5.1-4.3-2.4-4.3 .3-1 1.3 1.5 6.4 3.2 5.6M725.8 425.4l-3.4-1.3-1.7 4 1.9 3.5 .9 3.9M735.4 426.2l2.4-2.8 2.5-2.9 3.4-1.7 2.5-2.9M726.8 424.1l-1.7-3.6 1.1-2 2.4 2.7 2.5 2.6M726.2 418.5l0-1 3.7-2.5 1.8-4.1 2.2 3.3 3.5 1.7 4 .8 3.3-2.5 1.5 1.4M744.7 414.2l1.7-3.5-1.2-3.7 .4-3.6 1.2-3.4-1.9-3.3-3-2.3-2.7-3.1 .8-4 4.7-1.5 3.5-3.7M720.7 428.1l-5.9-2.9-4.1-.8-3.9 1.6 1.6 4.1-2.6 3.5M818.9 510.7l-.1-6-4-4.4 6.8-1.7 5.7-4 1.6 .4M832.3 493.6l2.5-5.2 .1-5.8-3.6-4.6 1.3-4.3 3.5-2.8 4 5 5.3 3.5-.9 4.9-5.3 1.1-4.4 3M844.5 484.3l2.9 4.9 5.7 .7M845.4 479.4l5.1-4.5M836.1 470.9l-3.6-3.1 .6-4M678.4 160.6l-2.9 3.3-5 2.1-1.9 .2-1.7-1.8-3.8-.4-3.7-.9-1.9-3.1 3.7-3.8 1.2-5.2 1.6-1.3 3.5 2.6 1.4 4-2.9 3.6 .9 4.5M657.5 160l-6.4 .3-1.4-1.6-.4-4 6.3-2.7 6.8-1M647.8 152.9l1.5 1.8M664 149.7l2.7-5.5M637 180.4l-.7 5.1 .9 .5 2.1-.7 1.1-2.3-3.4-2.6-.3-.7-4.5 .9-1.9-3.3-1.4-3.6 3.9-.5 4 0 1.1 2.6-.4 2.2-.8 1.7M632.3 190l-4.2 5.1 .5 1.2 5.6-2.1-.9-3.5-1-.7-2-3.6-.2-.2-.4-1.6-6.5-.7-4-5.1-.3 2.7 1.9 5 3.7 3.8 5.6-4.1M629.7 184.6l2.5-4M628.9 173.7l-2.9-1.6-4.4 .5-3.6 2.6 1.2 3.6M626 172.1l1.7-4-1.4-4.1 3.5-2.1 2.5-3.3 2.4 2.1 4 3.8-.5 5.5-1.4 3.2M634.7 160.7l4.4-1 3.7 2.6 3.3-2 3.6-1.6M632.3 158.6l0-.1 .4-1.6M609.1 157.2l3.8-2.9 1.4-4.5 2.8 6.2 6.3 2.4-1.9 6-6.1 1.6-3.7-4-2.6-4.8-4.9 .2-4.8 1.6-.7-6.6 1.9-6.3-4.5-3.8-5.8 .6M607.8 141.2l-4.6 .9-2.6 4M618.9 181.5l-2.9 6.2 1.5 3.9 4.1 1 1.9-.1 .2-.1 .8-2.1M506.1 240.7l2.3 2 2.9-.3 2.1 4.9-1.7 3.1-5.1-.6-.9-1.9 2.7-5.2M505.7 247.9l-3.8-.8-3.8-.3M506.6 249.8l-1.1 3.6-3.2 2.3M534.4 217.9l1.8 3.2 1.8 3.2 2.9-5.4-.1-1.1-5.6-.5-.8 .6-2.9-.2-1 1 1.9 3.6 .9 4.1 .9 .1-1.4 4.3 1.3 4.3-.7 .9-.7-.1-.9-3.7-2-3.2 1.1-1.8-5.1-2.1-4.3-3.3-1.2 4.6 .6 4.8 5.1 1.2 3.8-3.4M507.5 232l3.3 3.1 4.5-.7-.1-4.1-1.1-4-1.5-3.9 .2-4.2-4.6 3.7M511.3 242.4l1.8-3.4 3.4-1.7-.2-2.2-1-.7M555.1 175.7l-2.8 5.1-4.9 .8-4.6 1.8-3.1-1.1-.3-5.9-3.3-4.9 .9-6 4.7-3.9-2.8-4.1-4.5 .5-4.1 1.9-2.5 2.8-.1 3.8 .4 3.6 1.5 3.2 3.1 4.5 2.2 5 4.8-.5M541.7 161.6l3.5 2.5 3.1 3.1 2.8 3.4 3.6 2.6M538.9 157.5l.6-.9M530.3 159.9l-.9-.1M699.5 136.9l4.4 1.3 6.2-3 6.8-1-.3 3.6-.5 3.6-1.7 3.7 2.2 3.4-3.6-.1-3.4 1.2-5.1-4.6-.6-6.8M709.6 149.6l-6.4 2.7-3.8 5.6-3.6-2.1-2.3-3.5M716.9 134.2l2.5-2.7 2.7-2.1M716.6 148.5l.1 .1 4.8 1.7 5-1M716.7 148.6l-1.8 3.3-.8 3.5 3 2.5 .8 3.8-4.3-1.2-4.1-1.8-4.5 0-4.3 1.1-1.2-1.1-.1-.8M700.7 159.8l1.8 4 2 4.9 5.2 1.1 2.9 4.4 5.1 .7 1.2-5.6 .6-5.7-1.6-1.9M766.5 173.9l-.8 1.6-4.1 1-4.1-1.5-3.6 3.8-3.3 4 .8 4.1 3.1 2.8 4.4-4.2 6-.6 2.4 .5M752.7 170.2l-.4-1.2-2.6-3.3-4-1.3-.6-4.1M752.8 170.6l.8 2.5 3.9 1.9M745.7 164.4l-4.5 3.2-.6 5.5-2.8-3.1-2.2-3.6 .2-1.9 1.6-4.4 2.8-2.2M737.8 232.9l-2.8-5.5-4.8-3.8-6.1 .9-6-.9-4.8 .5-4.1 2.6-.3 4.8-2.5 4.2 2.5 5M706.4 235.7l-1.2-.6-3.3-1.7-3.7 0-3.1 1.7-3 1.9-6.5 2.2-4.5 5.3 .7 4.1 2.7 3.2 4 .5 3.9 .8 .5 3.8 2.4 3-1.3 3.5 .7 3.8M693.4 275.3l-4.1 1.6-1.7 4 .5 4.9-2.9 3.9 3.6 3.2 .4 4.9 1.9 4.3 1.7 4.4 2.9 3.9 4.3 2.1M540.1 393.3l0 .1 4-.6 4 .8 0-.5-2.8-2.2-2.6-2.4-3 2.5 .4 2.3-3.8 1.6-2.5 3.3-3.9 .3 2.4 5.4 4.7 3.5 3-2.9 3.3-2.6-5-1.3-4.5-2.4M540.1 393.4l3.2 3.5 .7 4.8 5.8 .8 .4-.9 .8-4.5-2.9-3.5M544 401.7l-.7 .2M465.8 314.5l4.2-3-1.1-1.3-4.5-1.2-2.6 2.8M434.8 195.1l-1.7 1.4-2.7-2.2 .5-2.9M438.1 200.2l-4.7-.8-.6-1.7 .3-1.2M418 200.6l5.2-2.4 .3-2.1-1.3-2.3M432.7 220.4l-1.2-1.1 3.5-3.8 4.3 1.4M441.3 215.9l-1-5.7-4.9 .6-1.5 .9-.2 2.3 1.3 1.5M440.3 210.2l0-.1 2.9-4.7M440.3 210.1l-5.3-3.6 .3-.8 3.5-3.5M435 206.5l-1 .5 1.4 3.8M434 207l-1.2 .1-.5 .3 .9 3.8 .7 .5M433.4 199.4l-.4 .5 .4 3.1 5.3-.9M433.4 203l-.2 .3 2.1 2.4M433.7 214l-.8 .2-2.2 2.5 0 1.6 .3 .8 .5 .2M414.6 218.4l2.5-.9 3.4-4.4-4-2.9-.4-.1M448.7 294.6l3.3-.5 1.9 1.6 .8 1.8-4.6 5.3-.8 .3M462.5 259.3l-2.4 2.6-3 1.9 1.5 2.6 4.2 .9 .2-.2 5.9-1.3 .9-2.8-1.3-3.8-3.8-1.3-1.5 .2-.7 1.2-1.7 4 2.2 3.8M463.6 278l4 .1 .4 .4-.2 2.2-1.2 1-2-.7-.4-.5-.6-2.5-.1-.1-.3 0-4 3.5 .5 .7 4.5-1.6M459.2 281.4l-1.4-1.1 .2-2.6 .6-.7 1.5-.5 3.1 1.4M451.7 256.7l1 3.8 3 2.5-4.3 4.2-4-2.5M451.4 267.2l.6 2.2-3.8 2.3M463.2 258.1l-2.9-3.6-4.4-1.4M457.1 263.8l-1.4-.8M344.9 142.7l4.8 3.9-.2 5M360.8 157.7l.7 2.4 .1 .1 2.4-3.1-1.2-1.3-.1 0-1.9 1.9-1.9-1.1-1.4 1.4-2-1.7-4.8 1.3M396.1 161.3l-1.4-1.9-5.2-1.2-5.4 .9-4.3-4.6-4.3 2.5 .8 3.7 2.5 2.8 5.3-4.4M378.8 163.5l-2 3.1 1.7 3.6-1.8 3.5M394.7 159.4l1.2-5.3 .5-5.4 3.3-3.4 3.4-3.2M396.4 148.7l-4.5-.6-2.6-3.7 .6-6 3.2-4.6 5.7-.3 4.5-2.7 .7-1.4M370.1 129.4l-.6 2.4 4 2.3 .4 4.6 1.3 2.5 .1 .1 6-.6 2.2-4.5 .5-4.3-2-2.5M383.5 136.2l6.4 2.2M501.6 180.2l1.3 .4 3.8 2.6 2.3 3.2-.5 3.9-2 3.2-3 2.2-4.2-2-3.9-2.7M512.3 167.6l-.5-.1-1.3-1.2-1.9-6.1M510.5 166.3l-2.8-.5-.7-1.3M506.2 169.9l.4 .3-.6 1.7-3.5-2.1 .5-.9 .3-1.5 3.2 .7 .1 .1-.4 1.7-3.2-1M502.5 169.8l-2.3 2.2-1.2 .7M503.3 167.4l0-.9M506.5 168.1l1.2-2.1 0-.2M459.9 243l4.7-.6 .4-.3 3.9 .4 2.2 3.2 3 1.7 3.2 1.6-2.4 4.1-2.2 1.1-4.5-1.6-3.4-4.6-.2-5.6M468.2 252.6l-3.5 5.3M465 242.1l5.6-3.5 2.2-6.2M477.3 249l3.4-1.3M469.8 263l3.3-1.7-.1-3.6-.3-3.5M474.9 253.1l3.3 2.9 3.4 2.8 .6-.1 3-3 1.9-3.7M481.6 258.8l-4.5 3.2-4-.7M505.5 253.4l3.8 .7 2.5 2.9 1.6-2.4-1.7-4.2M511.8 257l-.2 1.9-4.6 2-5-.3M518.7 412.1l5-.7 3.8 2.6-1.1 3.3M523.7 411.4l4.7-3.9 0-4.7-.8-4.6-2.3-.2M520.4 428.2l5-.7-.1-3.6-3.6-1.1M525.3 423.9l.8-.7-.2-2.2M525.4 427.5l1.4 1 1.4 5.1M526.8 428.5l.8-.7 4.1-.7 1.3 1.4M527.6 427.8l1.3-2.7 2.4 0 .4 2M528.9 425.1l-1.1-1.9-1.7 0M557.7 408.9l3.8-1.2 3.7-1.3 3.6 3.4 3.4 3.4 .5 3.5-4.4 1.3-1.9 4.2M585.1 395.4l2.1 5.4 2.7 5-3.1 1.8-4.1 .7-2.9-2.9-2.5-5.7 1.5-2.4M589.3 389.6l5.9-2.5 3.9 3.1 2.2 4.4 .5 4.9-1.3 4.8-.2 .1-5.1 1.1-5.3 .3M548.1 393.1l2-3.4-1.4-2.4-4-2.3-1.3 .9-.7 2.6M509.7 369.2l.1 .3 5 1.1 3.9-3-2.2-5.2M699 317.6l-1.7 3.2-1.5 3.2-3.9-1-3.1 2.6-4.9-.8-5 .5-5.4-1.2-4.2 3.5-5.3-1.6-2.4-4.8 2.5-4.8-1.6-5.2 2-3.8 3.2-2.7 2.2-3.5 2.8-3 5 .4 3.2-3.9 4.9-.5 3.4 3.6M619 526.3l-4.4 .5 .9 2.9 1.9 1.6M614.6 526.8l-1-.7-.8-1.7M607.1 531.5l2.6-1.5 1.2 .6 .7 1.1 .2 2.6-1.2 4.2-1.1 .4M611.8 534.3l2.6 .1M611.6 531.7l3.9-2M609.7 530l-1.8-3.7M610.9 530.6l2.7-4.5M716.7 464.1l-1 1.2-.3 4.9-3.1-1.3-.2-.2 1-2.9 2.6-.5M715.4 470.2l1.3 5.8 5.5 2.3M712.3 468.9l-2 5.6-5.2 2.9M712.1 468.7l-2.8-1.7M707.3 451.8l1.7 5 1.2 4.3-.7 4.4-.6 .6M681.8 429.2l2.3-5.3 1.3-5.6 4.6 .6 2.9-3.6 4.2-.6 3.7 2.1 3.1 4.5 2.9 4.7M688.8 325.6l-.2 5.4-4.8 2.9 3.3 4 .2 5.1 3.8 2.4 2.8 3.7 6.5-1.6 1.8-3.9 .4-4.3 3.8-1.9 3.3-2.8M725.1 420.5l-1.8 1.7-2.7-2.4-1.4 .8 .8 2 2.4 1.2 .9-1.6M722.4 423.8l0 .3M720.6 419.8l.3-.7 4-1.9 1.3 .3M720 422.6l-5.2 2.6M710.7 424.4l4.5-5.3 4 1.5M724.9 417.2l-.5-.2-5.9-.7 2.4 2.8M724.4 417l-2.4-5.1-4.9-2.9 5.9 1.4 4.3-4.1 4.4 4.6M718.5 416.3l-2.2-1-1.1 3.8M790.5 504.9l3.7-3.1 4.8-.9 4.4 2.4 .8 .7-1.9 4M799.7 463.4l.6 .7 1 6.1 5.3 .5 2.6-1.6-2-4.6 .5-1M831.3 478l-3.3-1.7-3.7 .6-3.4-5.2-.4-4.3 1.1-3.7M820.9 471.7l-3.6 .7-3.5 1-4.6-4.3M824.3 476.9l-3.6 5.2-.8 5.3 3.7 3.9 3.7 3.3M670.5 166l2.8 3.1 .7 4.1 3.2 1.1 2-3.6-.9-4-2.8-2.8M674 173.2l-1.8 3-4.5 .7-2.1-5.9 3-4.8M696.9 162.8l.9-2.1 1.7-2M700.8 169.7l1.4 5-5.5 .6-2.6-2.7 1.3-6.2 .6-1.3M702.5 163.8l-1.3 3.9M694.6 163.3l-1.8 1.5-6 2.5-6-1.1-2.3-5.7M696.2 162l1.6-1.3M686.8 167.3l-.2 1.8-4.5 2.4-2.9-.8M672.2 176.2l5.5 3.8 .9-.8-1.4-4.9M682.1 171.5l.6 5.7-1.9 1.6-2.2 .4M642.8 162.3l.2 3.9 3.1 2.3 5.4-1.2 .4-3.6-.8-3.4M659.4 163.1l-2.9 4.5-4.7-.1-.3-.2M646.1 168.5l-1.4 1.9-6.5-.4M623.4 158.4l4.4-1.3 4.5 1.4M615.4 166l-.9 3.7 .5 3.8 3 1.7M615 173.5l-5.2 3.1-6.1-.6-1.5-1M614.3 149.8l.4-6.4M633.1 201.6l-1.6-.5-2.9-4.5 0-.3 5.3 1.7 .6 2.4-.1 .1-1.3 1.1-.4 2.4 2.5 3.8 2.2-4.3 3.3-.3 0-3.8 6.1 1.9-3.9 5.5-2.2-3.6M646.8 201.3l.6-.3 4 .2 .3 .3-.4 3.6 1.4 3.4-5.1 3-.1 0-4.5-2.6-.1-2.1M651.8 167.5l.2 3.8 .4 3.7 .5 .3 0 .1 5 2.5 2.4-6.2-3.5 2.2-3.9 1.4M667.7 176.9l-.1 .6-2.6 4.1-4.3-1.3 1.8-4.1-.5-4.4 3.6-.8M662 171.8l-1.7-.1-3.8-4.1M628.1 195.1l-4.4-2.7M652.9 175.4l.4 5.4 .3 .2 5.6-.9 .6 .3-1.8 3.9-1.1 .2-3.2-3.3-.1-.2M659.2 180.1l-1.3-2.2M659.8 180.4l.9-.1M658 184.3l1.8 2.5 1.7-3.5 3.5-1.7 .9 1.7 3.3 1.4 4.3-2.9 3.1 .1 .3 2-1.6 3.8-3.9 1-2.2-4M616.8 195.2l1.3 .3 .4 1.4-2.6 4.1-1.3-3.5 2.2-2.3-1.7-1.7 .3-5.4-2.8 .2-1.9 4.1 1.6 1.8 2.8-.7M612.6 188.3l-5.7-2.6-.9 3.8 3.4 3.1 1.3-.2M606.9 185.7l.5-4.8-3.7-3 0-1.9M615.4 188.1l.6-.4M612.3 194.2l-.8 2.4-3.8-.9 1.7-3.1M538 224.3l-.2 1.1-1.1 .7-2.5 .4M534.9 182.8l-4.2 2-1.1 4.6-6.2-2.4-2.7-6 6.3-1.7 2.6-6M515.6 178.7l-.1 .5 .1 1.3 5.1 .5M576.9 195l1.1 1.1 3.5 .1 3-2.4-1.6-3.7-2.3 3.4-3.7 1.5-.8-.4-.1-.1-.7-4.8 5.3-2.5 2.8-5.2 .1-.2-2.6-3.8-4.6-.1-4.5-.7-3.3 3.2 1.5 4.6 3.1 3.9 2.2 .8M583.5 181.8l1.4-1.1 1.8-4.1M552.3 180.8l1.5 5-.4 4.7 4.9 3.7 2.1-3.6 4.1-1.2-6.2 .8-4.5-4.4M568.5 180.4l-.7-.4-2.7 4.4-.4 5-.2 0M717.3 177l.8-.4-.4-1.7M754.5 189.7l0 6.5-2.1 6.1-5 .5-4.6-1.9-5.3-.8-3.1-4.3-3.2 5.8-6.3 1.9 .2 .2 4.2-.8 3.5 2.4 4 1 2.9 2.8 4.3 2.2 1 4.7 4.4-1.5 4.3 1.5 3.9-4.6-4.9-3.2-.3-5.9M757.6 211.4l5.8 2.6 3.6 5.4 2 0M725.1 203.7l4.5 .8 3 3.3 2.8 3.4 4 1.9-.4 4.3 1.3 4.2-1.2 4.4 2 4.1M753.7 216l.9 6.8-5.2 4.5M735.8 164.5l-4.3 1.5-1.1-4.4 3.5-.6 3.5-.9M730.4 161.6l-4.7-.4 .5-5.1 1.5-4.8M725.7 161.2l-.2 .2-6 2.2M650.1 275l-1 0-3.1-4.2-2 6.4-5.1 4.3 .7 3.1 4.7-.4 3.1-2.9M649.1 281.6l2.7 1 4.2 1.2 1.5-5-3.2-4-3.4 .1M656 283.8l4.1 1.1-3.4-3 .4-4.6-2.2-3.8 .9-4.3-2-1.4-4.4 .3-3.3 1.9-.1 .8M470.1 306.2l2.8-1-2-2.3-.9 0-.7 1.9-4.3-.2 .1 2.4 4.4 .2 .4-.3 .2-.7-.8-1.4M469.5 307.2l-.6 3M465.1 307l-.7 2M517.7 361.3l4.8 .3 .3-4.3-.3-.8M527.3 345.8l.8-4.5-4.6 .2 1.5-2.6-.6-1.3-1.5-.7-1.9 1.1 .7-5 0-.1-4.2 1.7M522.8 357.3l2.5-.2 .4 .1 2.4-.7-.1-2.9-1.7-.7-1 4.2M530 348.9l1.1 1.2 0 1.2 1 1.1 .3 1.9-.4 .5-.2 .1-2.8-1.6 .2-.4 1.9-1.6M542.8 324.9l-1.8 .8-.2 1.3 .9 1.4 2.5-1.3-.1-.7 1.9-1.3-1.1-2.5-1.6-.7-.4 .2-.1 2.8 1.3 1.5M423.5 196.1l3.1 1 1.6-1.9-1.5-2.1M428.2 195.2l1.6-.3 .6-.6M429.8 194.9l.2 2.7 2.8 .1M430 197.6l-.6 .5 1.4 2.3 .4 .3 1.8-.8M432.9 214.2l-1.4-.4-1.9 1.4 1.1 1.5M429.6 215.2l-.3-.2-1.5 1.9 2.9 1.4M432.3 207.4l-.3 0-1.4-2.8 0-.4 1.8-.1 .5-.6-2.1-1.6-.5 .4-.3 1.2 .6 .7M432.4 204.1l.4 3M432.9 203.5l.3-.2M430.8 201.9l.4-1.2M417.8 201l.5 .3 1.5 2.2 .5 2.3-5.3 1M420.3 205.8l.4 .4 .7 1.4-.4 1-4.5 1.6M431 219.1l-1.4 .9-.2 3.6 3.1-1M429.4 223.6l-1.1 1.5 3.8 4.4M421.8 227.1l.4-.3 5-2 1.1 .3M421 208.6l.6 2-.2 1.9-.4 .4-.5 .2M421 212.9l1.1 2.1-1.1 2.6-3.9-.1M422.1 215l1.5 .1 .4 1.3-1.5 1.9-1.5-.7M426.1 219.2l.6 1.1-.3 .8-2.4 .6-1.4-1.5 .1-1.5 3.4 .5 .3-1.1 1.4-1.2-.6-1.2-1.4-.1-.5 .8 1.1 1.7M422.6 220.2l-3.8 3.4M424 221.7l-1.8 5.1M422.7 218.7l-.2-.4M424 216.4l1.3 0M426.4 221.1l.8 3.7M426.7 220.3l2.9-.3M470 302.9l-2.2-2.5-3.5 2.6 .7 1.6M454.7 297.5l.1 0 3.8 5.2-4.2 .8-4.3-.7M458.6 302.7l.1 0-.5 4.7M458.7 302.7l.1 0 5.4 .3 .1 0M453.9 295.7l3-1.5 3.1 2.2-5.2 1.1M456.9 294.2l0-1.8-1.1-.9-3.1 1.4-.7 1.2M460 296.4l.3 0-1.5 6.3M460.3 296.4l.1 0 2.7 .5 1.1 6.1M459.7 291.6l3-.6 .5 1.7-2.6 1.8-.9-2.7 0-.2-.4-2.4 .6-1.5-1.4-1.8-1.9 0-1.7 2.4 1.1 1.7 3.3-.8M454.9 288.3l-2.6 .1 .4 4.5M456 290l-.2 1.5M452.3 288.4l-4-2.9-.5 0M460.1 276.5l1.2-3.7-1.9-.4-2.9-2.6-2.1 1.1-.1 2.1 3.4 1.3 1.7-1.9M457.7 274.3l.9 2.7M461.3 272.8l1.5-.8 0-4.7M456.5 269.8l2.1-3.4M453.8 275.9l4.2 1.8M454.3 273l-.6 1.3M454.4 270.9l-2.4-1.5M464.6 281l-1 1.9-1.8 .6-1.9-.7-.2-.7M349.7 146.6l3.6 .1 0 .7-1.9 5.5-.1 .1M376.8 166.6l-2.9-2.7-3-2.4-5.8 1.5-.6 .5-3.8 4.8 .1 6.1M372.4 146.7l2-.9 .2 1.3-1.9 2.7-1.9-.6 0-.4 1.6-2.1-3.2-1.5 .2 2.4 1.4 1.2M375.2 141.2l-4.3 2.1-2.8-1.8 2.3-2.9 3.5 .1M368.1 141.5l-.6 .2-1.1 2.2 1.4 1 1.4 .3 1.7-1.9M358.5 129.4l2.7 4.1 5.1 3.1-.9 2.3-1.4 1.1-1.3-.2-2.7-2.7-3.1-4.9-.2-2.8M364 140l.1 1.9 1.7 2.1 .6-.1M365.4 138.9l2.1 2.8M366.3 136.6l4.1 2M354 129.4l-1.1 1.5-2.3 5.3-4.7 2.5M374.4 145.8l1-2.5-.1-2M389.3 144.4l-4.3 1.1-.4-.1-5 2.5-.7 1.6 1.1 2.3 5.1-1.3-.1-5M385.1 150.5l2.1 3.9 2.3 3.8M384.6 145.4l-3.3-4.7M379.6 147.9l-4.2-4.6M379.8 154.5l-.2-.4 .4-2.3M378.9 149.5l-1.7 .2-1.2 1.7 .4 1.9 3.2 .8M503.5 195.7l.2 .4-2.3 2.9-3.2 1.8-1.5 3.3-2.5 2.7-2.9-1.3M494.2 206.8l1.8 3.9 .7 4-2.4 3.3M513.6 171.2l-4.2 .2 .4 3.4-3.3-.7-.1-.6 .1-.5 2.6-1.8 .3 .2M509.8 174.8l3 2 2.7 2.4M506.7 183.2l3.8-1 3.8-.3 1.3-1.4M506.5 174.1l-1.7 3.3-1.9 3.2M506.4 173.5l-6.2-1.5M506.5 173l-.5-1.1M507.7 166l.7 1.4-.8 1.3 .6 1.1 .5 .2 1.6-1.9-1.9-.7M510.3 168.1l1.5-.6M507.6 168.7l-1-.5M508.7 170l.4 1.2M508.2 169.8l-1.6 .4M511.6 258.9l.6 1.2 .4 4.9-1.6 1.9-5.9-.2-3.4-5.5M513.4 254.6l2.3-.4 2.6-6.3-4.9-.6M518.3 247.9l1.2-.4 .2-.3 .1-3.4-1.8-5.2-1.5-1.3M495 275.4l4.2 .4 .6-.6 0-1.5-4.6-3-.2 4.7-.8 .8-1.6 0-2.8-2.9 1.5-2.8-4.4-5 4.2-2.5 4.9 4 0 1.2-1.1 1.8-3.6 .5M482.2 258.7l2.1 3.5 2.4 3.3 .2 0M491.1 263l1.8-4.4M496 267l3.1-2.3 2.1-3.4M505.1 266.7l-1.4 2.9-1.5 .6-6.2-2M545 423l-1.8-.4-1.5 .8-1.7 4.2M537 407.4l-.3 2 3.2 2.9 3.3 .9 4.5-1.3M549.8 402.5l1.6 4M536.7 409.4l-1.2 .5-5.5-1-.5 5 .5 .3 3.2-.3 2.3-4M529.9 398.5l-1.8-.5-.5 .2M530 408.9l-1.6-1.4M529.5 413.9l-2 .1M530 414.2l.1 4.9-1.2-.2M585.5 455l.4-1-1-4.7 1.7-4.5-1.7-4.8-4.9-1.6-5.3-1.2-3.6 .7M655.4 415.5l1.9 4 .7 4.6-3.3 3.2-4.6-.3-3.8 2.7-2.6-3.6 0 0M600.3 404.4l-.1 4.2-1.8 3.7-.9 4.4 2.8 3.5 6.1 1.4 6.3 .7 2.1 1.1M600.5 404.3l4-2 3.4-3 4.3 1.3 .7 .2M654.7 427.3l.2 .4M657.3 419.5l4.1-3.1 5.1 0-1.6 6.6 4 5.3M568.3 377.2l1.5-1.1 2.7 2.1 .2 2-2.6 .9-2.4-.5-.2-.2-3.5-.5-.4-.2 2.4-3.6 2.3 1.1-.8 3.2M548.7 387.3l2-3.5-2.2-2.1 2.4-2.6 2-.3 .5 .9 .5 4 1.5 1.5 3.5-1.6-.9-3.3-4.6-.6M553.9 383.7l-3.2 .1M555.4 385.2l-.6 3.4-4.7 1.1M511.5 389.9l-.9-6.7 2.9-6 .5 .1 5.7 3.3 2.4 4.3-1.3 2.9M669.3 327.6l-1.1 2.1 2.6 3.6-.9 4.3 4.1 1.4 4.2-1 4 1.9 2.1 3.9 3-.8M639.6 284.6l-1.3 3.4 .3 4.2 3.3 5 3.4 4.9 4.4 2.1 4.4 1.9-.4-6.1 4.6-4 .8-5.4 1.6-5.3-.6-.4M713.1 465.8l-1-.9-1-.1 .1-3.8 2 1.9-1.1 2M713.2 462.9l3.5 .4M711.1 464.8l-1.6 .7M711.2 461l-2.2-4.2M780.1 487.6l4-.8 3.9 1 3.2 2.4 .1 .2-.3 2-6.2 1.1-6.2 1.4M795.6 496.4l1.7-1.3 2.5 1.6-.8 2.5-3.7-2-5.3 3.9 2.2-3.4-.6-3.9 1.6 .2 2.4 2.4-.3 .8M790 501.1l-.6 1.3M799 499.2l0 1.7M793.2 494l3.2-.7 .4 .1 .5 1.7M791.6 493.8l-.6-1.4M796.4 493.3l-1.3-3-3.8 .1M629.1 380.6l-4.6-2-5.8 1.3 0-4-2.5-3.1-.6-3.8-1.8-3.4 5-2.7 3.4 3.9 5.1 1 5.3 1.5M637.4 367.2l-.5-1.4-4.3 3.6M668.7 411.1l0 .9-2.2 4.4M727.3 406.3l2.4-6.2-2-6.4 4.8-1.7 2.6-4.4 4.9-.3M716.3 415.3l-.6-5-3.8 .7-3.7-1.1-2.5 3.1-3.7 1.3-1.7-4.3 1.2-4.4 5.4-3.6 3.7-5.2 3 2.4 2.9 2.4-2 3.7 2 3.8-.8 1.2M716.5 409.1l.6-.1M702 414.3l-1.2 2.5M710.6 396.8l.8-3.6 3.9-2.3 4.3 1.6 4.3-1.3 3.8 2.5M804.2 504l1.3-.4 3.2 .5 2.4 3.7 1.2 4.2M820.7 482.1l-5.1-.4-2.3 2.7 .7 2.6 3.2 3.3 6.4 1M694.1 172.6l-1.2 .2-4.9-1.2-1.4-2.5M688 171.6l-1.3 4.9-4 .7M676.6 181.9l1.1-1.9M673.5 181.8l-3.4-1.6-2.5-2.7M668.4 207.7l-3.6-2.1-4 2-2.6 2.3-.7 4.4 2.7 3.5 2.4 4.5 1.4 .3M670.4 214.9l-.1 .8 3.7 1.8 2.6 3.2-4.8 .6-3 1.7M652.7 208.5l5.5 1.4M660.8 207.6l-.1-4.8-5.2-2.6-3.8 1.3M637.5 178l5.6 1.8 1.2-1.6-.1-2.5 1.3-1.6 4.4 1.5-1.8 4.5-.2 0-3.6-1.9M644.2 175.7l-6.3 .1M645.5 174.1l-.8-3.7M649.9 175.6l2.5-.6M648.1 180.1l2.2 1.6 3-.9M647.6 211.5l.9 3.1 2.6 4 1.9 1.7M656.5 221.2l3.7-3.4M671.7 228l1-.2M658.1 227.6l.9 .8 3.8 3.7 3.2-.5M677 225.1l1-3.4-1.4-1M670.9 243.8l1 .2 3.9-2.1-1.2-1.6M659.9 235.8l.4 .2 2.8 2.5 1.7 .4M658.7 229.2l.3-.8M659.2 245.7l-2.9 .5-3.9 1.7 0-4.9-4.1-2.6 1.4-3.5 3.4-1.7 3.1-.6M643.1 179.8l-.2 3 1.7 1.5 3.3-4.2M650.3 181.7l-.6 2.7-2.2 1.3-2.8-1.3-.1-.1M634.2 194.2l.6 .7 2.2 .2 2.3-2.4-4.5-2.3-1.5 .3M634.4 200.5l3 3M634.5 200.4l4.8-1.7 1.3 .4 .1 .3M633.9 198l.9-3.1M639.3 198.7l-2.3-3.6M631.5 201.1l-5.1 1.3-1-.5-.3-.6 3.5-4.7M632.7 204l-3.8 1.6-2.5-3.2M625.1 201.3l-2.3-1-.9-4 1.6-3.8M607.7 195.7l-.5 .2-3.3-3.9 2.1-2.5M542.9 322.1l-1.3-.3-.6-3-1.2-1.2 0 .1-.4 1.9 2 2.2 .2 0M614.6 197.5l-2.7 0-.4-.9M618.1 195.5l3.5-2.9M622.8 200.3l-.9 0-3.4-3.4M519.8 243.8l5.7-.4 .1-.1-1.3-4.1-6.3-.6M519.7 247.2l4.5 .5 1.4-2.1-.1-2.2M533.3 226.4l-2.4 .8M534.1 235.1l4.4-1.3-1.8-3.7 0-4M540.8 217.8l.8-3.7 4.5 1.3 .7 3.5-.3 .7-1.9 .6 .1 4.6 3.5-1.4 .6-1.3-2.3-2.5M544.6 220.2l-3.7-1.3M548.9 229.2l-.4-1.5 2.7-.8 .7 .4-.3 3.4-.1 0-2.6-1.5-1.6 2.4 .1 .3-1.2 1.4-3.5-1.4 0-.5-2.1-2.9-2.1-2.9 5.6-.1 1.5 2-.3 1.9-2.6 2M538.5 225.6l-.7-.2M544.1 225.5l.6-.7M548.2 223.4l.4 .8-.2 3.5-2.8-.2M678 221.7l3.3-1.8 1.9-.8M675.8 241.9l5.3 2.6M695 221.3l1.2 2 1.1 5.2 2.8 4.7 5.1 1.9M681.3 219.9l.6-4.2 2.2-3.6-.6-4.5-3.9-2.4-2.2-5.4-5.6-1.8-.4 4M719 220.8l-.9 2.8M718.8 209.3l-.3 1.3-1.9 4.2 3 4-.5 1.6M724.3 203.6l.6-.1M700.3 216.4l-.1 .4-1.4 1M686.7 176.5l2.9 2.6-.4 1.4-.8 .7-4.8 .6-2.8-3M689.6 179.1l.4-.2 2.9-6.1M728.9 169.3l1.3 0 1.4 2.5 3-.5 5.6 3.5 0 4 .4 3.9-2 1.4-6.1-.5-3.9-4.7 3.4-2.7-.4-4.4M720.5 200.7l-.3-1.5-1.7-1.8M719.3 176.6l-1.2 0M728.6 178.9l-2-1.3M736.7 190.9l-.8 1.6M738.6 184.1l-.3 1.1M734.6 171.3l-1.2-3 2.2-1.9M740.2 174.8l.4-1.7M744.4 183.8l1.2 .4 5-1.4M728.7 166l-.6-.1 .1 1M730.2 169.3l1.6-1.2-.4-1.7-1.1-.1M728.1 165.9l-2.6-4.5M731.4 166.4l.1-.4M722.8 172.7l-2.3 2.7M731.8 168.1l1.6 .2M671.9 244l-.7 2.1-2.9 5.3 2.5 5.4-.7 5.3 .9 5.3-2.4-.7-4.5-4.8-5.4-3.8 4.8-.8 4.3-2.2 4-3.6-.6-5.4M671 267.4l2.3 3.4 2.4 3.2 2.1 3.6 3.7 1.9 6.1 1.4M658.7 258.1l-1 0 .5 5.9-4.4 3.8M668.6 266.7l-3.6 0-3.4-1.5-3 1.8-2.8 2.2M681.5 279.5l-4.3 3.7-5.2 2.3-5.7 .2-5.6-.4M657.7 258.1l-3.7-2.7-1.6 3.8-3.8 1.3 2.3 3.6-1.5 4M654 255.4l-2.4-4.9 .8-2.6M646.1 270l-5.6-4-2 3.3-3.4 1.8-.2 3.6 .2 3.5 3.8 3.3M635.1 278.2l-5.3-1.2-4.9 .6-.4 3.7-.3 3.7 2.9 1.9 5.9-2.6 5.3 3.7M470.9 302.9l2.2-2 1.2 .8 .9 1.9-2.3 1.6 .4 2.1-1.2 1.5-2.2-1.9M472.1 308.8l0 1.1-.9 1.9-1.2-.3M506.7 378.7l3.1 .1 2.9-2.4 2.1-5.8M513.5 377.2l-.8-.8M498 333.1l-2.3-3.8 2.8-1.6 4.3 1.6M484.4 330.5l.1-.8 2.6-3.6-2.7-1.9-5.3 3.8 .1 .7M488.2 321.2l-.7-.1-2.8-3.5 4.7-.1-.7 3.1 2.3 .5 1 .9 0 2.6-3.4-1.6-.4-1.8 .5-.6M492 324.6l.2 .1 1.9 .2 0-.1-.2-2.9-1.9 .1M493.9 321.9l.6-.8-.4-1.5-.3-.3-2.8 1.8M474.3 286.3l-1.2 .3-1.9-3.1 .6-.9 2.9 2.6-.4 1.1 1.4 1.5 1.5-1.8-.8-2-1.7 1.2M473.1 300.9l-.4-.8-4.1-1.6-.8 1.9M472.7 300.1l.3-.6-.2-2.3-3.3 .5-.9 .8-1.8-2.1 1.1-2.9-2.7-1.3-1 .9 .8 3.1 1.8 .2M477.4 290.8l-.2-.7-1.3-1.4-3.3 .7 2.1 3.5 2.7-2.1 1.9 .9-.6 3.3-1.9 .6-2.8-1.5-.2 2 1.2 2 1.7 .6 .2-.3-.1-2.8M474.7 292.9l-.7 1.2-2.1-.2-2.4 3.8M473.8 296.1l-1 1.1M475 298.1l-2 1.4M476.7 298.7l0 .4-2.4 2.6M477.2 286l1.8 .6 .2 .4-2 3.1M475.7 287.8l.2 .9M525.7 357.2l1 2.2 1.2 .1 .8-2.6-.6-.4M529 353.3l-1 .3M528.7 356.9l2.4 .3 .7-2.3M532 354.8l2.3 1.3-.6 2.7-1.7 .9-.9-2.5M563.6 379.7l-.1 0-.9-1.1-.1-6.1 2.6 .2 .9 3.4M554.7 319l-1.5 1.2 0 1.2 1.7 1 4.8-.6 1.4-3.1-3.8-.6-3.1-4.7-.2 0-.9 1.2 1.6 4.4 2.6-.9M554.2 313.4l2.9-1.5 .6 4.4 4 2-.6 .4M550.2 311.6l-.2-2.9-4.2 2.4 1.5 2.2 1.3 0 1.6-1.7 3.8 1.8-1.7-5.6 1.2-.7 4.1 3.8-.5 1M544.9 322.6l1.4 0 1.6 1.4 1.4-1.7-1.2-2.3-1.8 2.6M547.9 324l-.1 .5-.4 .6-1.4 0M557.6 310.9l.6-.5 5.1 1-.2 6.6-1.4 .3M563.3 311.4l1.5-1.9-3.6-3.3-2.4 2-3.7-3.8 .2-1.2 5.9 .6 0 2.4M558.8 308.2l-.6 2.2M555.1 304.4l-1.6 2.7M550.6 319l-.3-2.9 .5-.7 1.4-.2 .1 4.3-1.7-.5-2.3 .6-.2 .4-1.7 0-2.7 1.2-.4 .7M543.7 321.2l-.2-2.7-2.5 .3M539.4 319.6l-1.7 1.1 1.5 1.1 2 0 .2 0M541.2 321.8l-1.9 3 1.7 .9M430.8 200.4l-2.6 .1 .6-2.3 .6-.1M428.8 198.2l-2.1-.9-.1-.2M433.2 211.2l-1.6-.1-.6 .3-.6-.1-1-1 1.4-1 .8 1.8M431 211.4l-.4 1.7 .9 .7M429.4 210.3l-1-.1-.1-.2-2-.4-1.2 1.5 2.8 .6 .5-1.5M432 207.4l-.5 .2-.4 .6-.3 1.1M420.7 206.2l2.6-2.3 0-1-3.5 .6M423.6 215.1l.8-1.3 0-.8-3-.5M424.4 213.8l1.4 1.4 0 .4M424.4 213l.2-.2 .5-1.7-.7-.6-2.8 .1M467.9 293.5l1.6-1.5 2.4 1.9M465 296.2l-1.9 .7M459.7 291.8l-2.8 .6M460.6 294.5l-.2 1.9M463.2 292.7l1 .4M462.7 291l.3-.7 2.3 .6-.1 1.3M456.6 285.9l-1.3-1.4 2-4-3.4-.1-1.4 3.3 2.8 .8M452.5 283.7l-4.2 1.8M457.3 280.5l.5-.2M459.9 282.8l-1.4 3.1M453.9 280.4l-1.5-2.4M470.9 276.7l-.1 1 4.4 .1-.6-1.9-2.1-.7-1.6 1.5-2-1.8 0-.1-.8-2.1-1.5-.7-2.4 1 .5 1.7 2.9 .9 1.3-.7M468.9 274.8l2.5-2-1.5-1.5-1.8 1.4M464.7 274.7l-1.2 3.2M467.6 275.6l0 2.5M464.2 273l-1.4-1M364.1 141.9l-3 1.8-.9-1.6 2.5-2.3M361.1 143.7l.1 .9 .2 .3 2.4 1 2-1.9M376 151.4l-2 0 0 .4 1.1 2.1 1.3-.6M361.2 144.6l-3.3 .1-.3 .3 .9 1.3 2.3-.6 .6-.8M355.5 156.3l.9-1.8-2.4-2-2.6 .4M365.1 163l.5-4 2.6-1.2-1.7-2-1.6 1.6 .7 1.6M368.2 157.8l1.7 .6 .9 1.5 .1 1.6M361.6 160.2l2.9 3.3M364 157.1l.9 .3M361.5 160.1l-2.3 .3M362.8 155.8l.6-1.1-1.9-1.5-1.1 .6-.3 .6 2.6 1.4M374.6 147.1l1.3 1.9 1.3 .7M375.9 149l-2.4 1.7 .5 .7M531.5 217.7l.1-4.2-3.9-2-.3 4.6-3.7 2.7 6.8-.1M496 210.7l4.2-.5 4.3-.1 4.5-1.2 3.9 2.6 1.1 5.2-1.2 1.5M514 216.7l2.5 3.5 4.4 0 .6 1.6M516.3 235.1l4.6-3.9M520.9 220.2l2.8-1.4M522.4 300.5l-2.9-.8-.9-2.4 2.2-2.6 1 .1 1.7 2.2-1.1 3.5 1 .7 2.1-3.4-2-.8M543.2 422.6l-.2-.5 1.8-4.3-1.7-4.4-3.7 5.3 3.6 3.4M543.1 413.4l.1-.2M539.4 418.7l-2.7 .1-1.2 3.4-2.6-.1-2-1.6-.6-1.2 3.8-3.1 2.2 1.1 .4 1.5M536.3 417.3l3.6-5M535.9 426.7l-.4-4.5 6.2 1.2M534.1 416.2l-.9-2.3M530.3 419.3l-.2-.2M530.9 420.5l-3.1 2.7M532.9 422.1l-1.6 3M586.8 407.6l-3.1 4.2 1.8 4.9 6.6 2.2 6.5 2.4-1.1 3.8-2.5 3.1-6.1 .6-3.8-4-4.5-3.3-.2-1.1 5.1-3.7M580.4 420.4l-3-3.5-4.7-.2M579.8 405.4l-4.6 3.1-3 4.7M598.6 421.3l1.7-1.1M580.6 421.5l-2.7 3.5-2.7 3.4 1.5 4.5-2 4.3M588.9 428.8l-4.4 4.3-3.5 5-1 .3M595 428.2l1.8 6-4.8 2.2-4.2 3.1-6.8-1.4M617.8 431.7l-1.4 1.8-4.6 .7-4.4-1.4-3.5 3.3-4.7 .6-2.4-2.5M616.4 433.5l-4.9 4.7-3.4 6 1.8 6.5 5.2 4.3 5.8 3.7M554.8 388.6l2.5 3-.8 4.7-3.3 2.4-3 2.9M613.8 365.6l-4.2-.3-1.2-1.7-3.8-.4-3.2-1.9-3.7-.2-3.4 1.7-1.2 3.6-4.4-1.3-4.3-1.8 1-3.2 3.4-2.4 5.4 4.1 .1 1M616.8 396.3l-3.4-4 .9-6.5 3.6-5.4-4.9-1.4-4.8-2-4.9 1.5-5 1.1-.7 .4-.1 1.4 3.1 3.8 3.7 3.2 4.8 1.3 4.3 2.6M597.5 381.4l-2.3 5.7M617.9 380.4l.8-.5M598.3 379.6l1.5-5 .3-5.2 4.1-3.5 5.4-.6M597.6 380l-.6-.4-6.3 .9-6.1-1.4-4.8 4.6M597 379.6l-3.3-6-2.1-3.5 1.5-3.7M588.8 357.7l-.3-4.5 6.7-1.2 5.9-3.4 1 .5-.8 3.8-2 3.3-2.8 2.6-2.3 3M588.5 353.2l-1.3-.8-2.2-3.3 0-4.1 5.7-3.8 5.1 1.1 3.6 2.3 1.7 4M602.1 349.1l1.2 .1 .8 3.8 2 3.3 3.1 3.1-.8 4.2M533.1 374.2l.8-2.1 .2-.2 3.8 2.2-3.1 3.8-.5-.3-1.2-3.4-6.2 .9 0 .8 1 1.5 6.4 .2M522.1 384.9l2.8-.2 2.5 3.5 3.9 2 1.4-1.2-3.5-2.8 .5-4.4-1.2-.6-3.6 3.5M526.9 375.9l-3.8 2-3.4 2.7M528.5 381.2l-.6-3.8M531.3 390.2l-.5 4.4-2.7 3.4M532.7 389l1.8-.8 5.2 2.8M585 345l-2.6-.3-2.3-3.1-.5-3.8 4.3-3.2 1.6-.3 3 2.5 2.2 4.4M583.9 334.6l-2.8-3.3-3.6-2.5-2.2 3.9 2.1 4.5 2.2 .6M577.4 337.2l-1.6 1.3-4.9 .6 .8-6.2 3.6-.2M575.8 338.5l-.4 3.9 5.1 3.4 1.9-1.1M575.4 342.4l-1.8 1.1-4-.8 1.1-3.5 .2-.1M580.5 345.8l-2 2.4-3.7-1.2-1.2-3.5M638 365l-1.1 .8M618.8 362.9l-1.1-6.9 .6-6.9 2.5-2.6 3-2.1 3.2 2.3 3.9-1.2 3.4 6.1 6.3 2.7-1.7 4.6 1.1 4.7-1.6 1.1M654.1 306.1l.8 1.5 .4 .4 4.2 .3 3 2.9M645.3 302.1l-6.2 1.3-5 3.9-1.4 4.3 1.2 4.4 5.1 2.1 2.6-4.4 3.4-3.9 5.1-.5 4.8-1.7M806.6 470.7l-1.2 3.8-2.6 1.2-2.9-1.7 1.4-3.8M735.1 387.6l-3.5-4-5-1.9-.6-5.8-5-2.9-.1-4.8-2.2-4.3-5.2 .1-6.3 2.5-5.9 3.5-2.1 4.4 2.6 4.2 2.3 4-1.1 4.6 2.8 2.8 3.9 .7 3.1-4.8 .1-5.6 3.7-4 4.4-3.3M709.7 390.7l1.7 2.5M718.7 363.9l4.6-2.9 4.8-2.5 2.6-4.9 3.2-4.4M713.5 364l-3.8-3.7-2.7-4.6-1.8-5.4-4.8-2.8M693.9 349.1l-.8 5-2.6 4.5 .2 4.1 5.6 1.5 2.6 5.1 2.4 .7M701.5 405.6l-3.3-4.1-5.2-.8 3.2-2.5 2.6-3 .1-4.2 2.6-3.3 1.5-.5M690.7 362.7l-4.3 2-.7 4.3-1.1 4.3 5.2 4.2 4.1-4.6 5-3.6M689.8 377.5l0 .1 3.6 3.8-1.2 5.2 4.7 .4 4.6 .7M805.5 503.6l1.1-5.8 2-1 .4 .1 5 3.4-5.3 3.8M814 500.3l.4-.1 .4 .1M660.7 202.8l2.2-3.6-4.8-3.9-.2-.8 4.7 .7 3.3-3.3 4.6 3.4 .6 1.2-4 1.7-4.2 1M671.8 198l-.2-1.1-.5-.4M658.1 195.3l-2.6 4.9M665.9 191.9l-1.5-2.4 1.5-6.2M670.5 195.3l.9-6.6M640.6 199.1l.8-1.2 3.9-1.3 2.1 4.4M641.4 197.9l-.4-5.8-1.7 .6M653.1 235.2l-1.6-2.7 .2-4.1-1.1-4 2.7-1.7M657.9 194.5l-.5-.6 4.3-5-1.8-1.6-2.6 1.5-1.7 4 1.8 1.1M655.6 192.8l-1.2-.1-3.4 2.1 .4 6.4M661.7 188.9l2.7 .6M659.9 187.3l-.1-.5M649.7 184.4l2.1 1.1 .1 3.1 .8 .6 2.6-2.8 0-.5-2-1.1-1.5 .7M653.3 184.8l.4-3.6M651.9 188.6l-3.6 .2-.8-3.1M652.7 189.2l1.7 3.5M648.3 188.8l-.4 .7 2.2 5 .9 .3M655.3 186.4l2 2.4M655.3 185.9l1.6-1.4M607.2 195.9l-1.3 3.1-4.4-1.8-.9-4.1 0-.1 3.3-1M590.7 199.2l1.4 .1 1.8-2.7-.6-1.5-5.7 0-.1 0-.2 0-2.5 6.3 0 .4 1.5 .8 4.4-3.4-3.2-4.1M584.8 201.4l-3.3-5.2M587.3 195.1l-2.8-1.3M584.8 201.8l-.2 .1-6-1.1-.6-4.7M582.9 190.1l-.9-4.1 1.4-4M571.8 271.8l.4 2.1-.6 .6-1.9-.9 .1-1.4 2-.4 0-.1 1.4-.6 .2 0 1.2 1 0 1.8 2.5-.4 0-2.6-2.5 1.2M574.6 273.9l-.1 .1 .5 2.2 .8 .6 2.6-1.6-1.3-1.7M572.2 273.9l2.3 .1M571.6 274.5l-.1 1.2 .3 1 3.2-.5M568.7 276l1.6 2.2-1 1.6-1.3-.4-.9-.9 .6-2.6 1 .1 .6-.6 .1-1.6-2.8 .1-.3 .4 1.4 1.6M569.3 275.4l2.2 .3M569.4 273.8l.3-.2M578.6 200.8l-1.8 2 0 .1-1.9 2.9 2.7 1.8-1.6 3.6-.1 0-1.8-2.5 .2-2.5 .6-.4M546.1 215.4l4.2-1.9 1.8 1.1 1 2.1-6.3 2.2M574.1 208.7l-4.3 1 .1 1.4 2 2.5 4-1.9 0-.5M615.5 286.7l-4.6-4.8 .3-.8 2.2-1.5 3.9 1.3 1.4 5.1-3.2 .7-3 5.1 1.5 1.3-.6 6.4-4.7 .7-1.9-6.4 1-1.7 4.7-.3M570.3 278.2l1.1-.7 .4-.8M581 258.9l.4 2.3 1.5 .3 1.5-2.6-1.7-1.3-.3-1.6-2.9 .7-.5 1.2 2 1 1.7-1.3M552.3 307.8l-1.2 .1-.8-5.9 1.1-.3 3.7 1.2 .2 .3M547.1 297.6l-.5-.2-1.3 .3-.6 1 2.8 4.8 2.3-1.5-2.7-4.4 4.4-.9 .3 .5 3.7 1.3 1.9-2.5-2.1-2.7-.3-2-.3-.1-4.7 1.8 1.5 3.7 3.8-3.4M550 293l-2.1-.8-.7-1.2 3.2-2.3 4.3 2.5M530.5 316.1l-.8 1.7-.2 .1-1-.2-.5-2 .3-.3 1.9 .5 .3 .2 .8-.1 .4-1.8-1.6-1.6-.4 0 .5 3.3M531.7 314.2l1.6-.4 .2-2.1-1-.7-2.4 1.6M533.3 313.8l.5 1.1-1.9 1.3-.6-.2M518.5 315.5l-.8-1.3-1.9 .7-.7 1.3 .5 1.1 .8 .6 1.8-.6 .9 .8 1.5-.1 .2-2.1-2.3-.4-.3 1.8M532.5 311l-.3-2.1-3.5 .4-.3 .4 .1 1.6 .9 1.3 .3 0M519.5 299.7l-.5 1-.8 .8-1 .6-1.1-.2-1.9-1.9-.2 .2-.3 3 .7 .3 1.7-1.6M514.2 300l.4-2.3 1.8-.7 2.2 .3M532.2 303.3l.1 .2 .6 3.8-.1 .1-2.4-.6-1.8-2.9 3.6-.6-.2-1.2-2.6-1.7-2.3 1.4 0 .1-2.5 .3-.3 2-2.2 1-.2 0-.6-1.4 2.3-2.3 1 .7M523.4 301.2l.2 .3M521.3 303.8l-.6-.2-1.7-2.9M536.7 305.9l0 .1-.1 2 2.8 .1 .3-1.9-.1 0-2.9-.3 .2-2.6 .7-.1 1.7-3.5 .5-.3 2.5 1.3 0 .5-.4 1.4-4.1 .7-.2-.1M528.6 303.9l-.1 0-1.4-2M546.1 285.3l4.5 1.6 1-1-1.2-2.5-4.3 1.4 0 .5-.7 1.7-6.5-.3-.4 1.3-5 .3-2.5-4.3 4.4-.1 2.8-3.5 .4 0 .3 6.3M531 284l-.9-.2-4.5 3.7 .7 1.5 6 1.9 1.2-2.6M546.6 273.9l-2.5-.7 0-.1 1.3-2.5 2.2 .6-1 2.7 .1 .3-.2 1.3-3.2 .6-2.9 3.6 2.7 .9 4.1-2.9 .1-1-.8-1.2M559 287l.8-.1 1.6 2.1-2.6 2.1-3.3-.5 .1-.8-1.5-4 .2-.4 1.9-.9 2.8 2.5-3.4 2.8M555.5 298.5l.1 3.1-.5 1.3M551.4 301.7l.4-4.5M555.6 301.6l4.2-2.1 2 3.6-.6 .7M611.9 197.5l-.8 2.3 2.9 2.1 1.8-.2 .1-.7M605.9 199l.4 1.1 .5 .6 1.4 .4 2.9-1.3M526 232.4l1.9 4 1.6 .3 3.2-.8M527.9 236.4l-1.2 1.4-2.4 1.4M529.5 236.7l1.1 4.6-2.4 .6-1.5-4.1M528.2 241.9l-.7 1-1.9 .4M541.6 214.1l-.3-.7-5 .1-1.1 3.8M536.3 213.5l-2.3-1.5-2.4 1.5M527.7 211.5l-.2-5.1-2.4-4.5 4.3 3.1 5.1 1.1-.5 5.9M554.2 206.3l3.1 1.3 2-.7-2.4-3.7 1.6-4-3.6-.2-3.6 .8 1.6 3.2 1.3 3.3-4 1.7-2.9-3.2-1.6-4-.1-.5 2.3-2.3 .1-1.5-1.9-3.2-3.1-2.2-3.7 2.4-4.3 1.3 3.8 1.7 1.8 3.9 5-.1M548 196.5l3.5-2.3 1.9-3.7M543 191.1l.5-3.8-.7-3.9M535 194.8l-5.9-1.6 .5-3.8M551.3 199.8l-3.4-1.8M558.5 199.2l.8-1 .1-.3-1.1-3.7M688.5 214.7l-1.2-2.4 1.9-6.5-2.5-4.4-2.5-.3-4.6 4.1M676.9 183.9l2.4 3.3 4.8-1.9-.5-3.5M679.3 187.2l.1 6.3-4.2 .8-3.6 2.6M679.4 193.5l1.3 .3 3.3 2.9 .2 4.4M684.1 185.3l.8 .4 3.1-3 .4-1.5M689.2 180.5l2.5 3.5-2.6 2-1.1-3.3M700.1 205.3l-.8-1.7-6.3-1.4-3.8 3.6M699.4 182l-2.7-1-.4-4.5-5.7 2.4 5.2 3 .9-.9M695.8 181.9l-.7 3 1.1 1.5 1.2 .8M696.3 176.5l.4-1.2M695.1 184.9l-.7 .1-2.7-1M690.6 178.9l-.6 0M613.4 299.5l4.1 2.3 .2 .5-.1 .4-4.4-.2-3.2 3.1-1.6-4.6 .3-.8M629.8 277l-1.7-3.9 1.9-3.9 1.5-.3 3.6 2.2M630 269.2l-2.4-.9-.9 4.5-3.4 3.1 .1 .3 1.5 1.4M631.5 268.9l2.4-3 .6-3.8 5.3 2.7 .7 1.2M528.3 315.4l-.2-1.7 1.3-1.1M528.1 313.7l-1.1-.1-.7-1.9 2.2-.4M515.7 325.5l.2 .8-2.1 1.6-.9-.9 .4-2.9 1.1 .1 2.2-2.6 .8 2.1-1.7 1.8-1.3-1.3M515.9 326.3l2.5 1-.5 1.4-2.9 .7-1.1-.3-.1-1.2M494.5 321.1l1.7 .6 .7 2.2-2.8 .9M508.4 326l.6-.7 2.2 .7 .4 .8-1.2 .6M513.9 329.1l-.6 .7M511.6 326.8l1.3 .2M509 325.3l.6-2 .4 0 2.1 .6-.9 2.1M512.1 323.9l.7-.1 .5 .3M509.6 323.3l-.4-.4-2.7 1-.5 1 .3 1.5M506.5 323.9l-.3-1.2-1.2-.2-.8 1.3 1.8 1.1M472.1 309.9l3-.2 .8-1.7-2.6-.7M475.1 309.7l1.3 4-4.1-.3-1.1-1.6M472.3 313.4l-1.9 3.9-3.5-.8M488.4 334.3l.4-5.1 0-2.1 1.8-.3 2.8 2.4-1.3 1.2-3.3-1.2M492.1 330.4l-.5 4.1-1.3 3.3M488.8 327.1l-1.2-1.1-.5 .1M488.6 323l-1 3M490.6 326.8l1.6-2.1M493.4 329.2l1.4-.3-.7-4M494.8 328.9l.9 .4M461.8 283.5l1.2 2.7 1.6-1.5-1-1.8M463 286.2l-.5 1.4-2.6 .1M464.6 284.7l1.2 0 1.2-1.3-.4-1.7M462.5 287.6l.1 .1 .4 2.6M473.1 286.6l-2 2.2 1.5 .6M475.2 303.6l1.3 .5 1.5-3.7-1.3-1.3M476.5 304.1l.1 .1 .8 3-1.5 .8M479.3 291.7l.7-.1 .5-.3 1.5-2-.3-1.3-2.5-1M481.7 288l1.3-2.5 1.8-.8 1.1 3.3-.8 1-2.5 .4-.6-.1M533.7 358.8l1.7-.2 1-2.3 1.9 1.7 1.1-1.7-1.8-1.4 3.2-.7-1.8-2.1-1.6 1.1-1.1-.5-1.4 1.2 1 2 .5 .2 1.2-1.2-.2-1.7M535.9 355.9l-1.6 .2M534.9 353.9l-1.4-.2-1.1 .6M536.4 356.1l0 .2M563.1 318l.9 .3 1.6 1.2 .6 4.5-3.7 2.4-2.8-3.9 0-.7M566.2 324l3 3.1-.3 .8-3.6 1.5-1.5 3.3 .1 .1 2.5 1.9 4-2.4-1.5-4.4M565.3 329.4l-2.9-2.5 .1-.5M566.4 334.7l0 1.6 4.3 2.9M570.4 332.3l1.3 .6M563.8 332.7l-2.8-1-.8-2.9 2.2-1.9M545.6 350.2l1.2-.7 0-.9-1.7-.4-.6 .9 1.1 1.1 .1 2.9 .1 0 0 .8-1.5 3.9-.5-.2-.6-4 1.3-.7 1.2 .2M545.8 353.9l1.9 2.6-1 1.9-.6 .5-.5 0-1.3-1.1M543.4 362.5l-1.6-1.5-.6-.2-.3 1.1 .7 1.9 1.8-1.3 .6 .2 .3 2.4-3-.3-.3 .2-1.6-1.7-.4-.1-.9 1.5 2.1 1.2 .4-.2 .4-.7M539.4 334.7l-1.3-.4 .9 3.5 1.6 .1 .6-1.1-1.8-2.1 2.9-1.3 .2 .1 .2 2.6-1.5 .7M549.3 322.3l2.5 .5 0 2.2-1.3 .6-2.7-1.1M551.8 322.8l1.4-1.4M551.8 325l.7 .7 3.1 .2-.7-3.5M536.3 352.7l-.5-.8-1.7 .2-.6 1.6M534.1 352.1l-.7-1-1.3 1.3M542.6 343.1l-4.8-.8-.3 .6 1.5 1.9 2.3 1.1 1.3-2.7 2.2-1.2 1.1 .7-1.5 1.7-1.8-1.2 0-.1-.2-2.2-2.8-.2 1.1-2.4 2.1 1.6-.4 1M532.3 336.4l1.3 .7 2.3-1 .7-2.6-1.8-.3-2.7 2.5 .2 .7-1.4 1.3-1.8-1.2 1.5-2.1 1.5 1.3M521.7 333l1.5 1.1 3.8-1.8 .4 1.6-.5 1.6-1.7 0-1.7-1-.3-.4M523.5 334.5l-.6 2.4M525.2 335.5l-.8 2.1M526.9 335.5l.7 1.3-.3 1.2-2.3 .9M527.4 333.9l3.2 .3 0 .2M527.6 336.8l1.5-.3M531.1 350.1l2.2 0 1-.9-2.3-2.7-.9 .1-2.2 1M529.2 349.9l0 3M533.3 350.1l.1 1M531.1 346.6l-.1-3.1 2.7-.3-1.7 3.3 3.9-.5 .1 .1-.1 1.9-1.3 1.2 1.3 1.7-.1 1M534.3 349.2l.3 0M528.1 341.3l1.1-.7 .4 .1 .2 .3 .4 1.8-2.6 3.4M530.2 342.8l.8 .7M529.2 340.6l-1.9-2.6M529.6 340.7l1.2-1 .1-2M552.3 319.5l.9 .7M552.2 315.2l.9-.6M548.3 319.6l-.4-1.6 .8-1.4 1.6-.5M564 318.3l4.2-4.4-.2-5.3-3.2 .9M561.8 303.1l1.9-.7 2.3 3.1 3.2 2-1.2 1.1M546.4 320l-1.4-2.4 2.7 .3 .2 .1M543.5 318.5l.3-.8-.9-.6-2.7-.2 .5-2.1 1.9 .4 .3 1.9M540.2 316.9l-.3 .3-.1 .4M539.3 324.8l-1 .1-1 .9 .2 1.8 1.1 .1 2.2-.7M538.3 324.9l-.1-1.3 1-1.8M528.5 317.7l-1.9 .7-.3 .7 .9 1.2 .1 2.1 3.2-1.5-1.1-1-2.2 .4M547.4 325.1l.1 .9 1.8 1.6 1.2-2M544.2 327.1l.3 .4 1.9 .6 1.1-2.1M542.5 333.5l.9-.6 .2-2.4-1.9-.6-.4-.4-.5 .1-3 2.3 3.5 .5 .4-2.5M541.3 332.4l1 1M543.6 330.5l.5-.3 .4-2.7M541.3 329.5l.4-1.1M540.8 329.6l-2.2-1.9M427.2 215.7l.5-1.1 1.1-.2 .5 .6M421.4 207.6l2-.1 .4 .1 .6-.2 1-2.4-1.7-.6-.3 3.1M423.7 204.4l-.4-.5M423.8 207.6l.6 2.9M424.4 207.4l1.2 .3 .4 .6 .3 1.3M426.7 197.3l-.3 2-2.7 1.3-.5-2.4M423.7 200.6l0 .4-5.4 .3M426.4 199.3l1.3 1.8 .5-.6M427.7 201.1l0 .1 2.6 1.1M423.3 202.9l.5-1 1.5 1.4 .2 1.5-.1 .2 1.7 .9 0 .8-1.5 1M479 286.6l.4-1.2-1.6-2.4-1.3 1-.1 0M479.4 285.4l1.8-.9 1.8 1M360 137.1l-.8 3.8-6.4-1.6 1.1 2.4 3.9 1.3 1.9-1.1-.5-1M359.7 141.9l.5 .2M352.8 139.3l-2.2-3.1M357.8 143l.1 1.7M353.9 141.7l.4 4.1 .5 .1 2.8-.9M354.3 145.8l-1 .9M372.7 149.8l.5 .8 .3 .1M374 151.8l-1.4 1.7-1.2-1 1.8-1.9M371.4 152.5l-.9-.1-.5-.4-.3-1.1 1.1-1.7M363.4 154.7l.5-.5 .1-1.1-1.8-1.2-.7 1.3M364 153.1l.5-.5 .2-2.1-1.2-.4-1.5 1.1 .2 .7M358.5 146.3l-.4 1.2-1.3 .3-2-1.9M356.4 154.5l.6-.1 1.9 .9 0 1.3M358.9 155.3l.8-.7 .4-.2M529.1 193.2l-2.8 3.2-1.7 4.9-4.2 3.6-5.4 .5-4.7-2.3-1.8-4.9 1.5-6.3 5.6-3.2 2.6 2.5 1.3 3.3 3.3 1.5 3.5 .4M515.6 188.7l-1.3-6.8M540.6 200.4l-3.1 2.1-1.4 3.4-1.6 .2M524.6 201.3l.5 .6M515 205.4l-2.1 6.1M508.5 198.2l-4.8-2.1M519.5 247.5l1.8 4.4-3.4 3.1-2.2-.8M520.9 285.8l-3.4-1.3-1 .7-1 3.7 3.4 1.7 .5 1.6 .7 .7 2-3.2 2.8-2.4-2.3-1.6-1.7 .1-2 4.8M519.4 292.2l-3.9 .5-.1-3.7 .1-.1M526.3 289l0 1.1-3.1 4.1-1.4 .6M524.9 287.3l.7 .2M520.1 292.9l.7 1.8M522.6 285.7l.9-5.7-3.9-1-3-2.6-.7 4.2 1.6 3.9M523.2 294.2l2.9 .9 0 2.6 .7 .3 1.3-.4 .8-3.3-1-.6-1.8 1.4M527.9 293.7l-1.6-3.6M526.1 297.7l-.6 .1M526.8 298l.3 3.8M528.1 297.6l1.9 .8-.6 2M528.9 294.3l1.2-.1 1.3 3.7-1.4 .5M495.2 270.7l-.3-.7M499.8 273.7l2.4-3.5M499.2 275.8l-.2 1.5-3.1 2.3-.5-.1-1.2-3.3M499.8 275.2l4.2 .2 3.6 2 0-4.9-3.9-2.9M484.8 284.7l.4-.6 3.3-.1 .2 .2 3.7-.4 1.1-1.2-.2-1.3-1.8-.8-2.2 1.1-.8 2.4M495.4 279.5l-2.1 1.8M491.5 280.5l-.4-2.2 1.5-2.1M481.2 284.5l-1.1-3 1-.5 3.7 1.9 .4 1.2M608.1 444.2l-5.2 .6 .6 3.9-2.7 2.8-.3 .3-3.8-1.6-4-1.3 .3-2.9 1.8-4.3 4.2-2.1 3.9 5.2M599 439.6l.2-2.9M600.8 451.5l4.5-.8 4.6 0M593 446l-1.1-4.5-4.1-2M600.5 451.8l.7 6.2M592.7 448.9l-4.7 .8-2.1 4.3M558.9 355.2l-1.1 .3-1.3-1 1-1.8 .6-.1 .1 0 .9 2.3 1.6 0 .7 .8-1.6 2-.5 .1-.4-2.6 .2-.3M546.7 358.4l2.8 .1 .8-1.7-.6-1-2 .7M549.7 355.8l.3-1.5-3.6-1.4-.6 .2M534.5 388.2l1.8-3.8-1.2-3.4-5.4 .8M536.3 384.4l2.7-.3 4.4 1.8M549.5 358.5l.4 .7-1.2 1.5-1.3 0-1.3-1.8M553.2 361.9l.9-1.4-1.8-1.8-1.1 1 0 1.5 2 .7 .2 .8 2.5 1.6 0 .1-1.2 2.1-2.2 .1-.5-2.5 1.4-1.4M558 369.1l-2.3-.8-1.8 2.2-.2 .9 2.4 2 1.9-4.3 1.1-.3 2.7 1.9 .7 1.8-4.1 2.1 1.9 3.5-2.1 1.3-2.5-3.6 .9-1.2 1.8 0M560.3 378.1l2.3 .5M555.7 375.8l-1.9 1.1-.9 1.9M558.2 379.4l-.2 .9M563.5 379.7l-4 3.9-.6 0M578.2 354.7l-2.7 1.1-2.6-2.7 0-1.2 5.4-2 .9 2.4 4.9 1.1-1.8 4.4-2.2 .1-1.9-3.2 1-2.4M584.1 353.4l3.1-1M578.5 348.2l-.2 1.7M582.3 357.8l3.1 2.3M584.4 363.3l-2.3 1.8-2.8-2.5-.4-2.2 1.2-2.5M578.9 360.4l-4.9-1.9 1.5-2.7M556.5 396.3l5.9 1.6 3.9 5-1.1 3.5M566.3 402.9l4.6-3.6 6.4 .4M572.7 380.2l3.4 2.4 .8-3.6 2-3.1-4-.6-2.4 2.9M576.4 383.5l-.3-.9M578.9 375.9l.7-.4 5 3.6M582.1 365.1l-.4 2.8-5.9-.2-.5 3.3 4.9 1.5 2-3-.5-1.6M582.2 369.5l6.9-1.1 4.6 5.2M579.3 362.6l-6.5 1.7 0 .6 .2 .5 2.8 2.3M580.2 372.5l-.6 3M574.9 375.3l-1-1.4 .9-2.6 .5-.3M574.8 371.3l-3.1-1.6 1.3-4.3M634.1 307.3l-2-.6-3.8 .9-3.6 1.8-.2 1.9 2.8 4.4 5 1.2 1.6-.9M610 305.6l-.2 .6 2 2.2 2.4 .7 .1 6.2 .7 .3 2.7-2.2-.2-5.3-3.3 1M617.5 308.1l1.3-1.4-1.2-4M617.7 313.4l5.4 .4 1.4-2.5M624.7 309.4l-.5-.6-5.4-2.1M534.8 377.9l.6 1.8-.3 1.3M533.9 372.1l-3.9-1.1-2.9 3.4-.3 .6 .1 .1M526.8 375l-4.4-2.5-5.4 .3-3 4.5M522.4 372.5l-.3-2-2.1-2.8-1.3-.1M532 359.7l-.1 .4-2.4 .6-1.6-1.2M569.6 342.7l-.3 .3-3-1.1-1.2-4 1.3-1.6M574.8 347l-3.5 1.1 .1 2.4 1.5 1.4M645.9 346.5l-1.9 3.6-2.9 2.8-1.2-3.6-2.8-2.5-2.9-2.4-3.7-.8-1.3-4.8 3.6-2.9 4.6-2.1 4.4 2.7 4.6 3.8-.5 6.2 5.6 .1 5 2.3 5.3 3.8 2.9-5.6 5.8-2.5-.8-6.3-4.2 2.2-4.7 .2-4.4 2.9 .1 5.3M639 318.1l.5 4.7 4.7 .3 4.4 2.1 1.9-4.5 3.6-3.3-.3-4.8 1.5-4.6M648.6 325.2l1.5 5.2-.1 5.4 4.5-1.6 4.7-1.1 4.9-.7 4.1-2.7M669.7 338.3l.2-.7M650 335.8l-3.6 4.5M813.8 473.4l-.1 .6-3.2 2.2-3.6 1.4-1.5-3.1M813.7 474l-.1 3.4 2 4.3M791.2 490.2l1.3-2.3-.1-3.8-2.3-.2-2.1 3.9M790.1 483.9l-4.3-2.5-1.2-4.9-3.6 2.4-2 3.8M813.6 477.4l-4 .6-2.6 3.1 1.4 2.2 .9 .8 4 .3M806.6 497.8l-2.4-1.6 1-2.8 2.3 .4 1.1 3M804.2 496.2l-1.1 .3 .3 6.8M646.3 384.5l-.6 .5-5-.6-1.3 .1M652 399l2.9-.3 2.2 1.8 1.5 2.9M689.8 377.6l-5 2.1-2.6-.8-.2-.2 1.5-4.7 1.1-.7M686.4 364.7l-6 .5-.5 .8-.6 3.6 1 3.5 3.2 .9M817.2 490.3l-1.6 1.1-2.2 3.5-2.4-1.4-.7-1.3 .8-1 4.5 .2M811.1 491.2l.1-1.8 2.8-2.4M813.4 494.9l1 5.3M811 493.5l-2 3.4M810.3 492.2l-1.1 0-1.7 1.6M643 208.9l-5.6 2-2.1-2.4-.1-.7M650.1 194.5l-3 .4-1.4 1-4.3-4.2 .6-1.5 2.7 .4 2.4 4.3M644.7 190.6l3.2-1.1M645.7 195.9l-.4 .7M641.4 191.7l-.4 .4M634.8 190.4l2.7-2 4.5 1.8 .1-1.3 2.6-4.5M637.2 186l.3 2.4M639.3 185.3l2.8 3.6M640.4 183l2.5-.2M636.3 185.5l-6 .9M593.3 195.1l.3-1.3-3.6-4.4-.1-2.6 3.8 .8 3.9 .9 .5 2-4.5 3.3M593.9 196.6l1.8 .5 4.9-4M598.1 190.5l2.5 2.5M590 189.4l-2.4 5.7M589.9 186.8l-2.2-3.3-2.8-2.8M597.6 188.5l3.7-4.9 2.4-5.7M607.7 208.2l-.7 2.2 .6 1 3.1 .8 .7-.1 1.1-2.3-4.8-1.6-.3-.9-4.3 .7 .9-3.1 1.4-.4 2.1 2.4-.1 .4M605.4 204.5l1.4-3.8M604 204.9l-2.3-1.4 .4-1.3 4.2-2.1M592.1 199.3l.4 .8 3.3 2.1 .8-3.9 3.6 .6-.1 .4-1.9 2.8-2.3 .3-.1-.2M596.6 198.3l-.9-1.2M600.1 199.3l2 2.9M598.2 202.1l2.5 2 1-.6M600.2 198.9l1.3-1.7M573.1 188.9l-5.3 3 1.5 1.5 6.7 1.1M567.8 191.9l-1.6-.5-1.5-2M566.2 191.4l-1.5 4.5-5.3 2M569.3 193.4l.6 4.8 2.4 .6 3.8-4.2M572.3 198.8l.6 1.9 3.9 2.1M572.9 200.7l-3 3.9 4.4 1.6M569.9 198.2l-2.7 1.1-2.5-3.4M573.2 271.1l-.9-2.9 .2-.4 1.7-.4 1.6 .8 0 .1-2.4 2.8M575.8 268.3l1 .5 .4 2-.1 .1M581.4 261.2l-.6 .3-2.3-.4-1-1.5 .5-1.2 1-.5M576.3 255.4l-.6-2.3-2 .1-.3 .1-.3 .6 .5 2.8 1.7-.1 2.1 1.1-.1-2.2-1-.1-1 1.2M573.6 256.7l-.8 1.6 1 2 .8 .1 2.9-.8M577.4 257.7l.6 .7M574.6 260.4l1.2 2-.6 2.1 .3 .1 2.3-1.1-.1-.3-1.9-.8M577.7 263.2l.8-2.1M575.2 264.5l-.9 .2-1.4-3 .9-1.4M575.5 264.6l1.1 1.1-.8 2.5M572.2 265l-1 1.1-1.5-.4-.2-.3-.5-1.6 1.8-1.3 .8-.1 .6 2.6 2.1-.3-.1 2.7M576.6 265.7l2.4-.6-1.2-1.6M561 265.4l-1.6 1.1 .3 .8 2.7 2 .7-1-.2-.7-1.9-2.2 0-.2 2.2-.6-1.1-2.9-.6 .1-.8 2 .3 1.4M564.7 273.1l.5 .9-3.6-.1-.1-1.5 .5-.9 2.7 1.6 .3-2.3-2.7-.7-.2 .2-.1 1.2M571.6 262.4l1.3-.7M571.2 266.1l1.3 1.7M569.5 265.4l-3.4 1.8-.9-2.6 0-.1 2.2-.9 1 0 .6 .2M572.3 268.2l-1.2 .7-.5 .8 1.2 2M571.1 268.9l-1.8-1.2 .4-2M548.8 222.1l2.4-.8 2.9-2.9 .7 .7 .3 4.8-1.6 .8-1.6-.7-.7-2.7M548.6 224.2l2.4 1.4 .9-1.6M573.7 223l.4 .3 .7 1.5 0 1.1-.9 .5-2.6-1.9 1.1-1.5 1.3 0 1.2-3.4 .1-.1-1.1-3-1.7-.9-.1 .1-.8 3.8 .4 .4 3.2-.3M571.3 224.5l-.4 .1-.4 3.7 1.3 .2 1.5-1 .6-1.1M571.7 219.9l-.1 1 .8 2.1M573.9 216.5l3.1-1.6 .1 3-2.1 1.6 2 2.1-.1 .3-2.8 1.4M572.2 215.6l-.4-1.9 .1-.1M577.1 217.9l1.4 .4 1.4-1.5-2.9-1.9 .2-1.5-1.3-1.7M573.3 227.5l1 1.2 .1 2-.5 1.3-.3-.1-.7-.7-1.1-2.7M574.8 225.9l0 .1 1.6 2.1-.6 .7-1.5-.1M576.4 228.1l1.7 .1 .1-.5-1.4-1.9-2 .2M575.8 228.8l.1 .8-1.5 1.1M575.9 229.6l1.9 1.4-3.5 1.3-.4-.3M618.7 286l2.5 .5 3-1.5M617.3 280.9l4.8-4.3 1.3-.4M613.4 279.6l1.3-3.4 3.7 .2 3.7 .2M607.8 292.1l-1.4-3.1-1.8-.5-2.9-2.2-2.8-2.3 .1-.5 .8-.7 3.9 .3 3.9 .6 .2 .1-1.4 5.2M607.8 283.8l3.1-1.9M604.6 288.5l-5.8 1.7-.1 4.1 .2 .2-2 3.2-1.8 3.4 3.4 1.7 2.6-3.3 .4-3.9-2.6-1.1M601.5 295.6l5.3-1.8M608.4 301l-3.2 .9-4.1-2.4M599.8 282.8l2.2-4.3-3.7-1.8-1.7 .5-.4 2.5 .5 1.4 2.3 2.4M596.6 277.2l-2.7-1.8-2.1 3.8 4.4 .5M598.8 290.2l-2.2-3.7 2.3-2.5M567.1 278.5l-1.3-.3-1.7 3.9 .5 .2 3.4-2.9M564.6 282.3l1 .9 0 3.4 2.1-.2 .9-1.1 1.5 .1 .8-1.2-2.2-1.6-.6 .5 .5 2.2M568.7 282.6l.9-2.1-.3-.7M568.1 283.1l-2.5 .1M564.1 282.1l-.4 0-1.9 2.8 3.1 2.5 .7-.8M564.9 287.4l-.2 .9-1.1 1.1-.6 .2-1.6-.6M559.7 282.9l2.8-2.1-.4-.7-3.2 .5-1.2 1.9 .5 .3 1.5 .1 2.1 2-1.9 1.8-.1 .2M571.4 277.5l2.6 2.2-.3 2.5-4.1-1.7M574 279.7l1.9-2.1-.1-.8M582.9 261.5l.6 .8 2.6-.2 .6-2.4-.7-.9-.2-.2-1.4 .3M529.7 317.8l1.5 .7 1.4-1-.7-1.3M542.3 301.2l4.3 2.5 .7 .1 .2-.3M544.7 298.7l-2.4 2M547.3 303.8l.2 2.4 2.7 2 .9-.3M549.8 302l.5 0M546.6 297.4l1.3-5.2M540.4 279.7l-1 0-.8 .7M546.1 284.8l-1.3-2.6-1.7-1.6M545.4 287l.5 3.4 1.3 .6M550.6 286.9l-.2 1.8M551.6 285.9l2.5-.1M555.5 290.6l-.5 .7M539.9 317.2l-.2-.1-1.6-1.9 1.7-1.6 .6 .2 .3 1M533.5 311.7l1.5 0 1.2-.9 1 .2 .9 1.8-1.8 1.4-1.3-2.5M538.1 312.8l1.2 .3 .3-3.5-2.4 1.4M532.6 317.5l.6 .3 1-.4 .3-.5 2.1-.1 .1-.2 0-1.4-.4-.6-2 .5 .2 1.8M534.3 315.1l-.5-.2M536.3 314.6l0-.4M539.8 317.7l-3.1 1.3-.1-2.2M536.7 316.6l3 .5M536.7 315.2l1.4 0M539.8 313.6l-.5-.5M541.9 302.6l.1 1.3 1.5 1.1 3.1-1.3M506.2 322.7l1.1-1.8 1.3 .9 .6 1.1M530.4 306.8l-1.3 .3-1.5-1.6-1.3 1 2.3 1.9 .5-1.3M528.6 308.4l.1 .9M532.2 308.9l.6-1.5M527.6 305.5l.9-1.6M513.9 309.3l1.3 .9 .9-.7 .1-.6-1.2-.8-1.1 .1-.8-.7-1.3 1.4 1.1 1.2 1-.8 0-1.1M515.1 316.2l-.9 0-2-1.4 .4-1.3 1-.7-.1-1.3-.5-.5-1.8 .1 0 .7 1.3 1.6 .1 .1M521.1 312.6l-.4 .4 .7 2.4 .9 .1 .9-.7-.1-1.5-2-.7 .4-1.3-1-1.5 .5-1.4 .3-.3 1.9 0-.1 2.8-1.6 .4M513 311l-.1-.9M515.2 310.2l0 .1-1.7 1.2M515.2 310.3l.7 1.6-1.9 1-.4-.1M517.2 302.1l-.4 3.4-.2 0-1 0-.6-.2-.6-1.8M515 308.1l.6-2.6M516.6 305.5l-.1 3-.3 .4M520.5 309.8l-1.5 .2-.9-1.6 .4-.8 2.5 .8M518.2 301.5l.8 2.7 .7 .2 .3 1.6-1.6 .5-1.5-1 2.1-1.3M516.9 305.5l-.1 0M519.7 304.4l1-.8M520 306l.8 .4 1.1-1.2M518.4 306.5l.1 1.1M520.8 306.4l.5 1.7M518.1 308.4l-1.6 .1M536.2 310.8l-.3-2.4-3-1.1 2.3-1.5 .7-2.9-.1 0-3.5 .6M539.6 306.2l-1.8-2.9M542 303.9l-1.5 1.9-.8 .4M536.7 306l-1.5-.2M536.6 308l-.7 .4M536.9 303.3l-1-.4M535.8 302.9l-.1-2.6 .8-.6-.5-3.2-2.9 2.8 2.6 1M531.4 297.9l.5 .1 1.2 1.3-1.1 2.8M536.5 299.7l2.8 0M539.8 299.4l-.3-1.9 3.6-2.2 2.2 2.4M539.5 297.5l-1.4-1.7 4.2-3.4 .8 2.9M538.5 288l.5 1.6 3.3 2.4 3.6-1.6M542.3 292.4l0-.4M530.1 283.8l-1.3-2.8-3.1-1.9-2.2 .9M528.8 281l3.1-4.7 3.8 1 2.5 3.1M544.8 282.2l3.9-1.2 1.7 2.3 0 .1M554.3 285.4l-1-3.5 3-.5 1.3 1.1-1.4 2M559.8 299.5l.1-1.7-1.1-1.6-1.4-.2M563.7 302.4l2-3.9-.7-.3-5.1-.4M605.2 301.9l-2.4 3.5 3.7 2.9 3.3-2.1M614 201.9l-1.8 2.4 .7 3-4.4-1.2 .9-2.6 2.8 .8M609.4 203.5l-1.2-2.4M608.5 206.1l-1 .8M527.5 242.9l1.3 1.4-.4 2-2.8-.7M524.2 247.7l3.8 4.8 1.9-1.7 0-2.2-1.5-2.3M533.4 236l.8 1.5 1.5 .7 1.2 .1 2.2-1.6 0-2.6-.6-.3M529.9 248.6l2-3.5-.7-1.1-2.4 .3M531.2 244l.1-2.3-.7-.4M531.3 241.7l2-.6 .9-3.6M529.9 250.8l1.9-.1 2.9-1.4 .9-.9 .1-1.6-.6-1.6-3.2-.1M550.3 213.5l-.6-1.5-3.5-2.6-4.3 .8 1.9-2.3 6 .9-.1 3.2M557.3 207.6l-.5 1.2-3.3 2.2-1.4 3.6M549.8 208.8l.4-.8M536.1 205.9l3.4 1.5 2.4 2.8-.6 3.2M543.8 207.9l2.8-3-.9-4.1M556.8 208.8l.9 4.6-4 4.1-.6-.8M553.7 217.5l.3 .4 .1 .5M680.7 193.8l2.5-.6 2.1-5.9-.3-1.5-.1-.1M685 185.8l4 .4 .1-.2M694.4 185l-3.5 3 1.2 2.5 4.1-4.1M692.1 190.5l-.1 1.7 .4 .7 4.9 .1 .3-.4M690.9 188l-1.4-.5-.5-1.3M686.7 201.4l1.7-1.9-.8-3.9-3.3-2.4-1.1 0M702.1 194.5l-.7 3-2 4 2.1 2.8M699.4 201.5l-3.9-2.2-2.3 .9-.2 2M700.4 193.9l-3.2 1.3-1.7 3.7 0 .4M624.2 308.8l.4-6.8 4.6-.6 2.9 5.3M624.6 302l-.1-.1-6.8 .4M629.2 301.4l.8-5 4.8-1 3.8-3.2M614 293.1l4.4 1.4 2.4-2.6 5.1 2.1 .8 1.3-3.1 2.4-4.2-.2-1-3M619.4 297.5l-1.9 4.3M620.8 291.9l.4-5.4M623.6 297.7l.9 4.2M625.9 294l1.9-3.4-.7-3.7M626.7 295.3l3.3 1.1M623.3 275.9l-.9-4.4-3.6-2.8 1.2-1.8 3.6-1.2 3.5 1.7 .5 .9M617.1 259.5l2.4-1.4 0-.3-3.5-2.2-1.8 1.7 .5 2.7-.9 1 .1 .5 5 3.3-1.8-5.3-2.4 .5M651.6 250.5l-6.3 2 1.3 3.3-.1 3.6 2.1 1.1M646.5 259.4l-4.4 1.1-2.3 4.3M642.1 260.5l-.9-4.8-4.2 2-2.6 4.2 .1 .2M641.2 255.7l1.1-3.4 3 .2M529.5 317.9l-.1 2M508.6 321.8l1.8-1.8 .5-.1 .6 1-1.5 2.4M511.5 320.9l1.6 .5-.3 2.4M514 312.9l1.8 2M516 332.9l.4-1.5 1.7-1.4 1.8 1.7-3.4 1.7M519.9 331.7l1.6 .4 .2 .8M516.4 331.4l-1.4-2M518.1 330l-.2-1.3M496.2 321.7l1.1-1.2 1.3 .6 .1 .3 1.3 .6 .1 .1-1.5 2.7-.3 .1-1.2-.9 1.6-2.6M497.1 324l-.2-.1M500 322l.8-2.4-.9-.4-1.3 1.9M498.3 324.9l.2 2.8M503.7 321.3l.9 .2 2.1-1.5-3.2-1.2-.4 .3-1 .2-.5 .3 .4 2.2 1.4-.2 .3-.3-.6-2.2M500.1 322.1l1.4 .5 .5-.8M501.6 319.6l-.8 0M476.4 313.7l.5 .3-3.2 2.6-1.4 3.8-1.9-3.1M479.1 328l.7-4.9-1.1-3.4-6.2 1.4-.7 4.4M472.3 320.4l.2 .7M478.7 319.7l.2-.5 4.2 .3 1 2-4.3 1.6M487.5 321.1l-2.9 .7-.2 2.4M484.1 321.5l.5 .3M476.9 314l.4 0 .9-6.1-.1-.3-.7-.4M469.5 292l-.1-1.5 .8-1.6-.8-1.6-3-.4-1.2 1.1 1 2.1 3.2 .4M466.2 290.1l-.9 .8M470.2 288.9l.9-.1M469.4 287.3l.2-2.5 1.6-1.3M469.6 284.8l-2.6-1.4M466.4 286.9l-.6-2.2M465.2 288l-2.6-.3M478.7 295l1.4 1.5-.5 1.1-2.7 .8M480 291.6l1.7 2.8-1.5 2.1-.1 0M478 300.4l1.3 .2 .7-1.7-.4-1.3M480.2 296.5l2 .6-.1 2.2-2.1-.4M482.1 299.3l.2 .4-1.3 1.8-.6 .2-1.1-1.1M480.5 291.3l3 1.5-1.2 1.7-.6-.1M482.2 297.1l.5-.2 .2-1.8-.6-.6M544.5 352.9l-1.6-2.4-1.7 .8 .8 2.6 1.2-.3M569.2 327.1l4.4-2.3 2.3 1.4 1.7 1.7-.1 .9M560.2 328.8l-1.5-.5-1.5-2 2.5-3.8M557.2 326.3l-1.1 0-.5-.4M558.2 352.6l2.6-.8 .7 .6-.8 2.5M535.4 358.6l1.3 1 .4 0 1.3-1.4-.1-.2M537.9 374.1l.8-.2-.7-3.5-2.8-.2-.6 .3-.5 1.4M536.7 359.6l-2.3 2.7 3.7-.8 .1-.2-1.1-1.7M538.1 364.7l-2.1 .6-.5-.5 2.7-2.5 .8 .9M542.7 336.1l.2 0 .7 2.6-.6 1.1 2.1 .7 .1 0 .9-2.6-2.5 .8M540.7 338.3l-.1-.4M543 339.8l-.2 .1M544.8 342l.3-1.5M530.8 339.7l2.6 .1 .4 3-4-1.8M533.8 342.8l.1 .2-.2 .2M533.9 343l2.5 .6-.5 2.4M537.8 342.3l0-.1 1.8-1.5M533.6 337.1l.1 2.4-.3 .3M548.6 313.3l2.2 2.1M547.3 313.3l-.4 1 1.8 2.3M550 308.7l.2-.5M545.8 311.1l-.7-.3 1-3.7 1.4-.9M543.5 305l.5 1.5-.9 .9-2.6-1.6M544 306.5l2.1 .6M581.9 305.3l.3 .6 4.6 1.8 1.1-.9-4.7-4.2-1.4 .3 .1 2.4-2.9 2.8-.3 .1-1.7-1.9-4.7-.1 5.1 4.7 .2-.1 1.1-2.6M569.2 307.5l.8-.2 0 4.1 3.4 2.3-1.8 1.3-3.4-1.1M571.6 315l-1.4 4.4-4.6 .1M573.4 313.7l.6 .1 3.4-2.9M570 307.3l1.1-1.1 .8-.1 .4 .1M573.6 324.8l-.2-1.7-2.5-3.3-.7-.4M542.6 315.2l1.1-.8 .6 .4-.1 2.7 .5 0 1.7-1.7 .3-1.3-2.4 .3M544.2 317.5l-.4 .2M544.7 317.5l.3 .1M546.4 315.8l1.3 2.1M546.7 314.5l.2-.2M537.7 320.7l-.1 0-.6 1.7 1.2 1.2M537.6 320.7l-1.2-1.2 .3-.5M533.2 317.8l.1 1 2 1.3 .2 0 .9-.6-2.2-2.1M537.5 327.6l-.9 1.4 .9 3 .3-.1M537.5 332l-.7 1.4 1.3 .9M539 337.8l-.4 .2-2.4-1.1-.3-.8M536.8 333.4l-.2 .1M549.3 327.6l.1 .9 1.6 1.3-.6 .8-2.6 .6-.8-1.7 .1-.5 2.3-.5M547.1 329l-.7-.9M551 329.8l1.1-.1 .4-4M547 329.5l-1.4 1.1-1.5-.4M430.6 213.1l-.7 0-1.1 1.2-1-2.1 .2-.4 1.3 .4 .6 .9M429.3 212.2l1.1-.9M428.8 214.3l0 .1M428 211.8l-.1-.1M425.8 215.2l.8-1.1 .4 0 .4-1.6-2.1 .5 1.3 1.1M425.3 213l-.7-.2M427 214.1l.7 .5M427.4 212.5l.4-.3M426 208.3l1.7 .1 .1-1.3-.7-.4M427.7 208.4l.7 .9-.1 .7M428.4 209.3l.5-.6 2.2-.5M423.8 201.9l.1-.5-.2-.4M477.8 283l.9-1.5 .5-.1 .9 .1M469.9 271.3l-.9-5.4 4.5 3-1.5 3.9-.1 .1-.5-.1M472 272.8l3.7 .2-1.8-4-.4-.1M471.8 282.6l.2-.9-4.2-1M472.2 281.6l2.1 .5 2.8-1.7-1.5-2.3-.2-.1-3.2 3.6-.2 .1-1.2-3.8-2.8 .6M473.9 269l2.7-1 2.5 4.9-3.1 .3-.3-.2M477.1 262l.9 3.8 5.2 2.6 1.3-.5 2.2-2.4M476.6 268l1.4-2.2M372.6 153.5l.1 .3 1.9 .9 .1 1.9-1 .4-2.2-1.9 1.2-1.3M370.5 152.4l-.3 2.9 1.3-.2M374.6 154.7l.5-.8M370.2 155.3l-.2 .2-.1 2.9M373.7 157l-2.9 2.9M374.7 156.6l.8 .4M367.8 144.9l-1.3 3-.6 .1-.7 2.3 1.8 .8 .9-.5-.3-2.2-1.1-.5M367.6 148.4l1.8-.8M365.9 148l-2-1.5-.1-.6M363.5 150.1l-.6-1.7 1-1.9M365.2 150.3l-.5 .2M367.9 150.6l1.8 .3M364.5 152.6l1.4 .2 1-.7 .1-1M365.9 152.8l.1 2.1-2.1-.7M366 154.9l.6 .4-.1 .5M360.8 145.7l-.4 2-.9 .7-1.4-.9M360.4 147.7l1.5 .8 1-.1M356.8 147.8l0 1.4-.8 1.2-.3 .2-2.4-3.2M355.7 150.6l-.2 .5-1.5 1.4M355.5 151.1l2.1 1.5-.6 1.8M357.6 152.6l.8-.4 1.3 2.4M360.4 153.8l-.5-2.1-1.2 0-.3-.7 .5-1.4 .5-.4 1.4 1.2 .2 .4-1.1 .9M361 150.8l1 .4M358.7 151.7l-.3 .5M358.4 151l-2.4-.6M358.9 149.6l-2.1-.4M360.8 150.4l1.1-1.9M359.4 149.2l.1-.8M511 266.9l.7 4.4 1.2 4.3 3.5 .5 .2-.2 1.1-5 1-5.1-6.1-.8M518.7 265.8l1.5-.5-.9-5.7-3.6-.5-3.5 1M520.2 265.3l.4 0 1.4 3.7 1.2 3.6-2.6 3-4 .3M516.6 276.4l-.2-.3M516.5 285.2l-4.6-.4-1.4-.9-1.1-6.4 3.5-1.9M515.5 292.7l-.1 .2-.1 .1 1.1 4M491.1 278.3l-2.5-.6-1.3 1.7 2 2.2M487.3 279.4l-1.7 .1-.8 3.4M488.6 277.7l-.9-3.6 2.1-.8M487.7 274.1l-.1 0-3.3-2.2 .2-4M557.8 355.5l-.9 1.3-1-.2-.3-1.9 .9-.2M556.9 356.8l.5 .8 1.8 .3 .1-.1M551.2 359.7l-1.3-.5M548.7 360.7l1.7 1.1 .8-.6M554.1 360.5l1.5-.5 1 2.1-.7 2.2M556.1 373.4l.5 1.2M559.1 368.8l.4-3.6-3.6-.8M555.7 368.3l-1-1.8M553.7 371.4l-1.1 .3-1.4 2.7 2.6 2.5M544.7 385l.5-1.9-4.3-2.7-1.9 3.7M545.2 383.1l.8-1.1 2.5-.3M559.5 365.2l1-.8 .1-.4-.6-1.8 .7-1.6-1.5-1.7-1.2 1 .7 1.7 1.3 .6M558.7 361.6l-2.1 .5M558 359.9l-1.6-.4-.7 .3-.1 .2M556.4 359.5l1-1.9M559.2 358.9l0-1M547.1 363.9l-1 1.6 3.5 .6-.1-1.4-2.4-.8 0-1.1 .1-.1 2.9 .2 .2 .7-.8 1.1M550.1 362.9l.3-1.1M547.2 362.7l.2-2M550.3 363.6l1.7 .5M547.1 362.8l-2.8-.4 .7-2.7 .6-.8M571.4 350.5l-3.6 1.7-.6-4.2-3.3 .5 .4 2.2 3.3 1.6-1.5 1.9-2.7-.9-.5-.9 1.4-1.7M560.7 360.6l1.5-.9 .5-.8-2.9-1.2M574 358.5l-.1 .1-1.8 3.9 .7 1.8M568.7 369.1l-1.9 3.2-.7 0-.1-4.7 2.2-.2 .5 1.7 3 .6-1.4 3.5 3.6 .7M570.3 373.2l-.5 .2 0 2.7M560.5 364.4l1.9 .7 1.2 2.4-1.8 3.2M560.6 364l2.6-2-1-2.3M562.4 397.9l2.2-6-1.3-2.3 .4-1.6 1.5-1.1 1.4-.4 3.3 .2 3.5 1.8-3.7 5.3-5.1-1.9M569.7 393.8l1.2 5.5M563.3 389.6l-6 2M565.2 386.9l1-3.8-2.2-3.2M563.7 388l-4.2-4.4M566.6 386.5l1.1-5.9M569.9 386.7l.2-5.6M573.4 388.5l.5-.1M596.8 324.3l3.1 2.3 1.5-1.7-.1-.5-2.5-3.6-1.2 .4-3.7-1.4-.5 .1 1.1 4.9 2.3-.5 .8-3.1M588.5 336.8l4.6-1.8 .9-4.9-.1-.2-4-2-3.7 2.3-.7 4.1M595.8 342.3l1.5-4.6 3.2-1.7 3.5-.9 .2 .1 1-1.2 2.2-.5 3.1 3.1 0 .2-3.4 5.6 0-4.2-2.9-3M607.1 342.4l-.9 5.1-2.9 1.7M607.4 333.5l.7-1.4-1.1-2.2-.4-.2-2.3 .7 .9 3.6M623.1 313.8l0 2.5 2.5 2.6 1.2 .6 5.1-2.1 .4-.5M606.5 308.3l-.7 2.4 2.3 1.8 .8 2.3 3.2 1.1 1.6-.6-2.7-3.9-2.9 1.1M611 311.4l.8-3M613.7 315.3l.6 0M612.1 315.9l-.3 .7-.8 3.8-.7 .5-1.6-2.5 3.1-1.8M601.3 324.4l1.4-2.8-.7-1.1-2.8-.4-.4 .7M522.1 370.5l3.3-2.1 .8 .7 .9 5.3M567.2 348l2-2 2.1 2.1M569.2 346l-.2-1 .3-2M669.1 368.9l.6 .5 2.5 .8 3.1-1.7-4-3.5 1.9-1.7-1.1-3 1.3-1.9 3.1-1.7 2.7 3.4 .3 4.3-6.3-1.1M618.3 349.1l-1-1.4 4.2-4.7 4.5-.4 4.5 1M640.6 354.3l.5-1.4M617.3 347.7l-.6-.1-5.2-2.3-5.3 2.2M641.8 336.5l-2-3.7-2.4-3.4 .4-4.2 1.7-2.4M637.8 325.2l-5.5-2.1-.4-5.7M632.3 323.1l-2 1.9-3.5-1.6 0-3.9M784.6 476.5l.9-1.8 1.5-4.7-3.4-3-1.2-4.3 .3-.9M785.5 474.7l3.8 4.2 4.6 3.3-.3 1.2-1.2 .7M809.3 484.1l-.1 .4-.5 3.5 2.5 1.4M796.8 493.4l1.3-1.1-.9-2.5-1.6 .1-.5 .4M797.2 489.8l1-1 1.3 1.2 .1 2-.4 .3-1.1 0M799.2 492.3l1.2 4-.6 .4M800.4 496.3l.6-.2 2.1 .4M799.6 492l1.7 0 .7 .7-1 3.4M654.9 398.7l2.3-2.7-.2-1.6-3.3 .1M668.1 379.2l1.4 .6 .9-.2 1.8-3.8-2.9-1-1.7 .4-.4 1.9 .9 2.1-1.7 1-.1 1.8-.6 .4-1.5 .3-.1-.3 .3-2.9 2 .7M665.7 382.4l1.2 2.3 2.2-.6 0-.2-.3-1.1-2.5-.8M672.2 375.8l1.5-.5-1.5-5.1M669.3 374.8l.4-5.4M667.6 375.2l-1.7-1.4M669.5 379.8l-.7 3M669.1 383.9l2.7-1.1 .3-1.9-1.7-1.3M672.1 380.9l3.7-.5 .6-2.3 2.7-.5 .6-4-3.2-.6-2.4 2.4 2.3 2.7M674.1 375.4l-.4-.1M679.1 377.6l2.9 1.1M679.7 373.6l.6-.5M676.5 373l.5-4.8 2.9-2.2M675.3 368.5l1.7-.3M621.9 200.3l-3.4 2.7 .4 1.7 2.5 2 1.8 .1 2.2-4.9M618.5 203l-1.7-.6-1-.7M616.8 202.4l-3.4 5.7-.5-.8M613.4 208.1l.2 .6-1.1 1.1M637.4 210.9l-.2 .5-4.4-.8-3.6 2.7-.8 .6-1.1-.6-.1-5 1.5-1.2 2.5 1.6-2 4.6M631.2 208.7l4.1-.2M627.3 213.3l-.4 .1-4-1.2 .7-4.7 3.6 .8M628.7 207.1l.2-1.5M623.6 207.5l-.4-.7M559.3 198.2l4.8 3 2.9-1.4 1.9 5.1-.6 .8-5.2 .4 1-4.9M559.3 206.9l1.6 .5 2.2-1.3M567 199.8l.2-.5M568.9 204.9l1-.3M560.9 207.4l.2 .6 2.7 3.5 5.4-2.4-.9-3.4M569.8 209.7l-.6-.6M568.4 263.6l-.4-3.2 1.8 .2 1 1.9M565.2 264.5l-.9-2.9 1.8-.5 1.3 2.5M563.2 264.6l.7 .2 1.3-.2M564.3 261.6l-1.1-.7-1.1 .8M573.4 253.3l-.3-.3-3.5-1.1 2.1-1.7 1.4 2.8M571.7 250.2l0-.6 2.1-.5 .7 1.2-.8 2.9M577.7 247.2l2.4 1.5 .3-1.2-.4-1.1-2.3-.8-.4 .4 0 .6-1.7 1.7 .2 .2 1.5 .5 .4-1.8-.4-.6M576.8 268.8l2.6-1.6-.3-2.1 1.1-.7 3.1 .4-2.3 3.3-1.6-.9M579.1 265.1l-.1 0M580.2 264.4l.6-2.9M583.3 264.8l.1 0 .1-2.5M577.2 270.8l1.6 .5 1.2 3.5-.2 .3-.1 0-1.3 .1M574.5 250.3l1.4 0 .6 2.4-.1 .2-.7 .2M575.8 248.5l.2 1.7 1.8-.4-.5-.8M579.5 256.7l-.4-1.1 .8-1.5 0-.4-.3-.4-2.1 .3 .4 1.4 1.2 .6M577.9 255l-.6 .5M579.9 254.1l2.4 1.4 .1 .4 0 .1M582.3 255.5l.1-.2-.9-2.1-1.6 .5M577.5 253.6l-1.1-.7M555 266.7l-1.5 2.9 0 .6 2.4-.7 .3-1.2-1-1.6-.2 0-1.1-.7 .3-2.1 2.1-.4 .1 .2 1.7 1.4 .2 .8-2.7 .6 .8-2.8M558.3 265.9l.8 .6-1.7 2.1-1.2-.3M555.2 266.7l.4-.2M565.2 274l.4 .4 .7-.1M566.6 273.9l.6-1.7-1.8-1.6-.4 .2M565.6 274.4l-1.6 2.6 1.8 1.2M564 277l-.5 .2-2.5-1.7 0-.1 .6-1.5M559.7 267.3l-.7 2.2 .5 .6 2.6 .2M562.4 269.3l-.1 .8M565.4 270.6l1.2-2-.6-1-2.9 .7M566 267.6l.1-.4M562.9 267.6l1-2.8M559.4 266.5l-.3 0M560.7 263.8l-2-.5-.6 1.8M557.4 268.6l.6 .9 1 0M570.6 269.7l-.5 .2-.9 1.8-1.1-.2-.4-2.5 .2-.1 2.2 1M567.9 268.9l1.4-1.2M569.2 271.7l.6 .5M568.1 271.5l-.9 .7M567.7 269l-1.1-.4M551.5 230.7l-2.1 1.8-2-.6M548.5 227.7l-.1 0M551.2 226.9l-.2-1.3M553.5 224.7l-.3 2.4-1.3 .2M547.3 231.6l-2-2.2M552.9 248.3l1.3 2-.4 .2-2.4-.2 .4-1.3 1.1-.7 .7-1.3-.1-.8-.4-.5-2.6 1.1-.1 .8 1.4 1.4M535.6 248.4l3.2 1.3 .6 1 3.1-1.2 .3-1.1-3-.4-1 1.7M535.7 246.8l3.8-.6 .3 1.8M571.3 219.5l-2.1-.4-.8 4 .2 .2 3-2.4M565.3 223.5l-3.8-.9-.1-.1 .5-2.1 2.6-.2 1.3 2.8-.5 .5-.2 1 1.9 1.9 1.6-3.1 1.1 .9 1.2 .4M569.7 224.2l-1 2.6 1.7 1.5 .1 0M577.6 207.6l1.2-.3 .1-2.2 3.4 0-.1 3-2.9-.4-.5-.4M579.3 207.7l-.6 2.3-2.7 1.2M578.9 205.1l-2.1-2.2M582.3 205.1l2.3-3.2M578.2 227.7l.8-1.2-.3-1.4-1.1-.2-.8 .9M577.6 224.9l-.6-1.9-2.2 1.8M577 223l.1-.3-.2-.8M579.9 216.8l1.4-.3 .4-1-.5-1.7-.5-.5-3.5 .1M561.4 222.5l-2.6 .6-3.2-3.7 4.8 0 1.2 .5 .3 .5M569.9 211.1l-2.8 2.2-2.8-.9-.4-.6-.1-.3M577.8 231l.1 0 .5-2.4-.3-.4M581.3 216.5l.4 1.1-1.1 2.4-1.1 .1-1-1.8M579.5 220.1l-.5 .7-2 .8M587.3 218.3l.5 1.7 1.3 .5 .2-2-.9-.5-1-.1-.1 .4-1.6 1.2-1.2-1.7 1.1-1.6 1.4 .9 .4 .8M585.6 216.2l-.1-.2-3.8-.5M584.5 217.8l-1 .7-1.8-.9M579.8 241.7l-.2 .4-2.9-3 .2-.2 2.9 1.1 0 1.7 .6-.1 2.1 .2 .2-1.6-.2-.2-2.1 1.6M577.7 245.6l.6-2.3 .2-.2 .9-.4 .5 .5 2 .6 .4 1.7-1.9 .2-.5-2.5M582.3 245.5l.3 .3-.5 .9-1.7 .8M580 246.4l.4-.7M592.8 251.6l.4-.2 .8 .2 .9 1.3-.7 .9-.6 0-1-.9 .2-1.3-1-.2-1.1-1.1-1.1 1.2 1.3 1.2 .9-1.3M584.6 245.9l-1.2 .3-.6-.4 1.5-1.5 .4 0-.1 1.6 1.1 .8 .8-.6 0-.1 .1-.5 .3-.1 2.6 .1-.1 .9-.7 .4-2.2-.8M583.4 264.8l1.6 1 2-1.7 .2-.8-1.1-1.2M587.2 263.3l1.2-.5 2.2 2.4-1.6 1-2-2.1M589 266.2l-.2 .6-3.3 .8-.5-1.8M607.6 283.7l-3.6-4.6 3.5-1.9-2-2.8-2.7 1.3-.7 2.8 1.9 .6M602.1 278.5l-.1 0M607.5 277.2l1.4 .3 2.3 3.6M602.8 275.7l-1.3-2.1-2.7 .1-.5 3M591.8 279.2l-.3 .2-.2 .4 .5 2.3 4.9-1M591.8 282.1l-.4 2.3-4-1.9-1.4-2 5.3-.7M567.7 286.4l1 1.1 2.1-.7-.7-1.4M571.1 306.2l.1-3.8-1.4-3.7-3.7-.3-.4 .1M605.5 274.4l.9-2 1.6-.2 2.3 1.5-1.4 3.8M614.7 276.2l-1-2.6-1.2-.3-2.2 .4M608 272.2l1.4-4 .1-.1 1.4 .3 1.6 4.9M510.4 320l-1.7-1.4-1.9 1.4 .5 .9M505 322.5l-.4-1M508.7 318.6l.2-.5-1.6-1.1-.8 1.4 .3 1.6-.1 0M528.4 309.7l-1.6-.2-.9-2.9-.6 0-1.2 .9-.1 .2 1.5 2.5 1.3-.7M525.5 310.2l-.3 1 1.1 .5M525.9 306.6l.4-.1M525.2 311.2l-.6 .3-1.5-.6M524 307.7l-.8 .4M525.3 306.6l-1-2.4M524.1 307.5l-2-2.3M512.2 314.8l-.2 .1-2.2-.6 .3-1.3 2.4 .4M510.1 313l-.1-.2 1.2-1M515.9 311.9l1.1 .3 1 1.2 .4-.2 .6-3.2-1.9 .2-.1 2M517.1 310.2l-1-.7M518 313.4l-.3 .8M536 296.5l.4-1.1-2.5-.3-2.1-2 .5-2.1 4.4 1.5-.1 2.7-.2 .2M536.6 295.2l1.5 .6M533.9 295.1l-2 2.9M536.7 292.5l2.3-2.9M532.3 291l0-.1M531.8 293.1l-1.7 1.1M553.9 266l-.1 0-2.2 1.7-2.2 .2-.1-.2 0-.2 2.2-2.8 2.3 1.3M551.6 267.7l1.9 1.9M544.1 273.2l-.8 2.9M544.1 273.1l-3.2-1.5-2.3 2.7 .8 5.4M545.4 270.6l-1.3-2.1 1.4-.9 3.8 .1M547.6 271.2l1.8-.4 0-2.9M553.3 281.9l-.1-.1-1.4 .2-1.9-2.7 0-.3 2.8-.7 .6 .2-.1 3.3M551.8 282l-1.4 1.3M549.9 279.3l-1.2 1.7M549.9 279l-.2-.3-2.5-1M553.3 278.5l1.3-.4 1.2 .6 .5 2.7M563.5 277.2l-1.4 2.8-3.2-2.8 2.1-1.7M554.6 278.1l.3-1.1 2.5-1.4 1.4 1.7-.7 .9-2.3 .5M558.8 296.2l1.3-1.3 .1-2.3 1.9-.9 1 1.9-.6 1.1-2.4 .2M562.5 294.7l2.5 3.5M560.2 292.6l-1.4-1.5M562.1 291.7l.9-2.1M563.6 289.4l2.2 3.6-2.7 .6M566.1 298.4l0-5.2-.3-.2M577 306.3l2.3-2.9-3.9-.9-3.5 3.6M602.9 317.9l0 .6 1.9 2.6 .5 .1 .9-.5 .5-2.9-.4-.7-1.3-.6-2.1 1.4-1.8-.4-1.9 2.6-2.3-4-3 3.7M602.8 305.4l-.1 0-3.9-1.7-.3-.9M610.7 212.2l-1.9 2.2-1.5 .2-.4-1.6 .7-1.6M535.7 238.2l.6 3-1.7 1-1.3-1.1M534.6 242.2l.5 2.9 0 .1M561.1 208l-1.5 5.9 1.7 .6 .2 1.3-1.6 .8-1.2-.5 .7-2.1 .2-.1M559.4 214l-1.7-.6M561.3 214.5l2.6-2.7M558.7 216.1l-4.7 1.8M564.3 212.4l.1 3.8-1.6 .5-1.3-.9M561.6 219.9l1.2-3.2M559.9 216.6l.5 2.8M554.8 219.1l.8 .3M684.3 193.2l1.3-.8 2.3-3.4 .3-.1 2.2 2.9-4.8 .6M687.9 189l-2.6-1.7M690.4 191.8l1.6 .4M688.2 188.9l1.3-1.4M688.4 199.5l2.2-.5 .9 .2 1.8-3.9-.2-1.3-.7-1-1.5 1.4-.3 4.6M690.9 194.4l-3.3 1.2M691.5 199.2l1.7 1M693.3 195.3l2.2 3.6M693.1 194l4.1 1.2M692.4 193l0-.1M613.7 273.6l4-4.6-4.9-1.1-.3-3.3 1.1-1 1.5 3.3 3.1 1.9-.5 .2M618.2 268.8l.6-.1M612.8 267.9l-1.9 .5M620 266.9l0-.6-1.1-1.5M613.6 263.6l.3-2.1M612.5 264.6l-2.6 .2-.4-3.5 2.1-.7 2.2 .4M627.1 267.4l1-4.7-6 0-.3-1.4 2.7-2.4 2.4 .4 2.1 2.5-.9 .9M622.1 262.7l-2.1 3.6M621.8 261.3l-2.3-3.2M629 261.8l3.4-.7 .3 0 1.7 .8M523.1 313.3l1.4-1 .1-.8M520.7 313l-2.3 .2M521.4 315.4l-.6 .5M527 313.6l-.8 .5-1.1-.5-1.1 1.3 1.1 1.2 .9 0 .2-2M526.6 318.4l-.6-2.3 2-.4M525.1 313.6l-.6-1.3M524 314.9l-.8-.1M522.3 315.5l.6 1.1-.6 2.1 .2 .2 1.8 0 0-2.1-1.4-.2M524.3 316.8l.8-.7M522.3 318.7l-1.1-.2-.6-.5M526.3 319.1l-1.3 .2-.7-.4M515.6 317.3l-1.2 1.4 .1 2 2.1 .5 .2-.1-.4-3.2M516.6 321.2l0 .4M514.5 320.7l-.7 .1-.7 .6M521.2 318.5l-.7 1.4-2.2 .4-.7 .6 2 1.2 1.3-.8-.4-1.4M522.5 318.9l-.1 1.4-1.4 1-.1 0M518.3 320.3l.8-2.2M517.6 320.9l-.8 .2M521 321.3l1.3 1.2 1.1-.7-1-1.5M523.4 321.8l.8 0 .8-2.5M524.2 321.8l1.7 1.8 1.2-.7 .2-.5M498.6 324.8l2.7-.3 1.1 1 1.5-1.7-.4-.6-1.9-.4-.3 1.7M501.6 322.8l-.1-.2M502.4 325.5l.7 3.5M503.5 323.2l-.1-1.6M503.9 323.8l.3 0M497.3 320.5l-.2-1.3 2.4-.5 .4 .5M493.8 319.3l-.5-2 .9-.6 1.5 .4 1.3 1.5 .1 .6-3 .4M481 301.5l1.5 .9 1.8-1.6 1.5 1.9 .2 .6-.8 .7 .6 3-3.6-.6 2.6-2.3 .4-.1M484.3 300.8l-.1-.8-1.9-.3M484.8 304.1l-2-1-.3-.7M484.2 300l.8-1-.5-1.7-1.8-.4M485 299l2.4 .1-1.6 3.6M482.8 303.1l-.9 .9 .3 2.4-.2 .2-1.1-.1-1.2-3.2 .2-.2 2 .9M479.9 303.1l.5-1.4M480.9 306.5l-2.8 1.1M479.7 303.3l-3.1 .9M482 306.6l.5 1.4-.3 1.9-.8 .8-3.2-2.8M482.9 295.1l1.3-.3-.7-2 1.2-.6-2.1-2.8M484.7 292.2l1-.1 .3-.7-.9-2.4M485.7 292.1l.8 1.5 2.7-.7-1.2-2.3-2 .8M541.2 351.3l-.9-.2-1.2 .4-.1 .6M540.8 354.2l.4 .2 .8-.5M539.1 351.5l-.9-1.4-2.3 .8M569 345l-6 .9-.1-.3 .1-1.4 1-1.6 2.3-.7M565.1 337.9l-1 .2-2.8-1.3-.7 .2 0 2 1.5 1.6 .3 0 1.7-2.5M562.4 340.6l1.6 2M561.3 336.8l2.6-4M562.1 340.6l-2.2 1.6 3.1 2M561 331.7l-2.6 2.1-2.4-2.8 2.7-2.7M558.4 333.8l-.2 1 .3 1.1 2.1 1.1M545.2 340.5l1.9 .6 .2 .4-.9 1.2-.5 0M560.8 351.8l-.1-1-1.3-1.5 0-.7 4-.6 .1 .1-2.8 2.7M563.5 348.1l.4 .4M561.5 352.4l1.4 0M559.4 349.3l-1.6 1.4 .3 1.9M563.4 348l-.4-2.1M557.5 352.7l-1.5-.4-1.2 2-.3 0-.1-.1-.7-1.2 1.3-2 1 1.3M554.8 354.3l.8 .4M557.8 350.7l-1.8-1.1-1.1 1.4 .1 0M552.9 348.4l-.1 .2-.9 .8-1.7-.2 .8-1.6 .7-.1 1.2 .9 1.5-.9-.7-2 1.2-1-.8-2.6-.3-.1-.5 .4-1.2 2.6 0 .1 1.6 .6M554.1 341.9l2.1-.1 1.8 2.9 0 .1-3.1-.3M551.7 347.5l.2-2.5-1.6 .2-1.2 .9 .2 .5 1.7 1M551.9 345l.2-.1M551.9 349.4l-.5 2.4 2.3-1.3-.9-1.9M551.4 351.8l-.1 .2-1.4-2.7 .3-.1M554.9 351l-1.2-.5M551.3 352l-.1 .4 2.5 .6M550 354.3l.6-.5 .5-1.4-3-1.6-1.7 2.1M554.4 354.2l-2.3 .6-1.5-1M551.2 352.4l-.1 0M538.2 361.3l2.6-1.1 0-.9-.1-.1-.5-3 .9-.8 2.1 2.2-2.4 1.7M540.7 359.2l-2.3-1M540.2 356.2l-.8 .1M541.1 355.4l.1-1M543.2 357.6l.6 0M541.6 363.8l-.3 1M540.9 361.9l-1.5 1.4M544 362.7l.3-.3M541.8 361l3.2-1.3M541.2 360.8l-.4-.6M538.2 362.3l-.1-.8M534.6 370.5l-1.1-1.9 2.8-2.3 .1 .1 3.2 .4-.1 1-1.4 .9-1.4-1-.3-1.3M536.7 367.7l-1.5 2.5M536.3 366.3l-.3-1M539.6 366.8l.6-.9M538.1 368.7l.1 1.3-.2 .4M539.5 367.8l1.9 1.9 0 .3-3.2 0M540.6 365.7l.9 1 .1 2.6-.2 .4M544.3 365.1l.4 .4 1.2 .1 .2-.1M544.7 365.5l-.9 1.6-2.3-.4M543.8 367.1l0 .3-2.2 1.9M541.4 370l.3 .6 4 0-1.9-3.2M538.6 338l-1.2 2.2 .1 1.3-3.7-2 2.2-1.1 1.4 1.8M536 338.4l.2-1.5M537.5 341.5l.3 .7M533.8 339.5l-.1 0M537.5 342.9l-1.1 .7M545.1 310.8l-.9 .1-.9 1.3-1.7 .5-2-3.1 .2-.5 2.9 .2 1.5 1.6M542.7 309.3l.4-1.9M543.3 312.2l.4 2.2M541.6 312.7l-1.2 1.1M539.8 309.1l-.4-1M570.9 319.8l3.8-2.1 2 1.8 .2 0 .2-.6 .2-3.3-2.6-1 0 3.1M574.7 314.6l-.7-.8M576.7 319.5l-3.3 3.6M577.3 315.6l.1-.1 2.3-3.3-2.1-1.4M527 332.3l.1-.9 1-.4 2.1 .2 .5-3.2 .2-.1 1.3 .2 .5 1.4 1 .4 .2 2.7-2.7-.4-.4-.5 1.9-2.2M533.7 329.9l2.1-1 .8 .1M533.9 332.6l.9 .6M531.2 332.2l-.6 2M530.8 331.7l-.6-.5M525.9 323.6l-.3 .6-.1 .8 2.6 1.5 .7-.6 .6-1.8-2.3-1.2M528.1 326.5l-.1 .9-2.6 1.3-.5-2.7 .6-1M527.1 331.4l-2.1-1.7 .4-1M528 327.4l.8 .9-.7 2.7M530.7 328l-1.9 .3M428.9 208.7l-.2-1.2 1.7-.5-.9-1-.3-.1-1 1.2 .5 .4M428.2 207.1l-.4 0M430.4 207l1.1 .6M429.2 205.9l-1.1-1.1-1 1.1M429.5 206l1.1-1.4M483.2 268.4l-2.6 4.9-.4 0-1.1-.4M474.6 275.9l1.4-2.7M472.5 275.2l-.6-2.3M470.8 277.7l0 .2M475.6 278.1l.7-.4 3 .3-.1 3.4M477.1 280.4l1.6 1.1M480.2 273.3l-3.9 4.4M475.4 278l-.2-.2M474.3 282.1l2.2 1.9M370 152l-1.5 1.2 .2 1.7-2 .4 .7-2.5 1.1 .4M367.4 152.8l-.5-.7M368.7 154.9l1.3 .6M366.7 155.3l-.1 0M526.4 253.3l1.5-.5 1.7 3.7-3.5 3.6-1.9-.6-.6-.6-3.5-.8-.1-.5 4.3-4.2 2.1-.1-2.8 5.6M520.6 265.3l1.1-.2 2.5-5.6M520.1 258.1l-.8 1.5M520 257.6l-2.1-2.6M524.3 253.4l-3-1.5M527.9 252.8l.1-.3M509.4 277.5l-1.8-.1-3.5 3.3-3.4-.4-1.7-3M500.7 280.3l-2.4 1.7-2.4-2.4M515.4 292.9l-2.7-1.4 .5-2.1-1-.6-2 .6 .5 3.5 .1 .1 1.9-1.5M510.8 293l.3 1.9 4.2-1.9M513.2 289.4l2.2-.4M512.2 288.8l-.3-4M514 300.2l-1.7 .7-.2 2.4 1.6-.1M492.4 283.8l0 2.3-2.6 1.2-1.1-3.1M496.9 296.2l.9-1.9 .9-.5 .7 .1 .7 .8 .7 1.2-.1 .4-.9 1-1.7 .2-1.1-.5-.1-.8-3-.9 0-.2-1-1.9-.8 .1-2.1-.8 .5-1.2 1.8-.5-.8-2-1.8-1.1-.7 .8 0 .3 1.5 2.5M489 288.5l-3.1-.5M489.7 287.7l.1-.4M489 288.8l-1 1.8M481.1 281l1.4-2.5-1.4-2.5-.2-2.2 4.9 1-.9 4-2.4-.3M484.9 278.8l.7 .7M481.1 276l-1.8 2M485.8 274.8l1.8-.7M480.9 273.8l-.3-.5M552.1 354.8l.5 1.2-.5 1.5 .3 .4 2.3-.5 0-.1-.7-1.6-1.4 .3M554 355.7l.5-1.4M552.1 357.5l-1.8-.7M552.4 357.9l-.1 .8M554.7 357.4l1 2.4M554.7 357.3l1.2-.7M552.6 371.7l-1-.6-1.6 .5-.8 2.2 .4 .5 1.6 .1M542 374.6l-1.5-.7-.9 .2-.2 4.7 1.2 .6 1.4-.9 0-3.9 2.4 .2 .8 3.9 .2 .1 3.1-1.7 0-.8-3.7-1.8-.4 .3M544.8 374.5l1.4-2.3 3 1.6M548.5 376.3l1.1-2M548.5 377.1l2.4 2M545.4 378.8l.6 3.2M539.4 378.8l-4 .9M539.6 374.1l-.9-.2M540.6 379.4l.3 1M542 378.5l3.2 .2M546.2 372.2l-.2-1.5-.3-.1M540.5 373.9l1.2-3.3M566.1 354.2l-.2 1.8-2.9-.7 .4-2M562.7 358.9l.3-.3-.9-2.7-.7-.2M563 355.3l-.9 .6M566 367.6l-.5-.3-1.9 .2M566.1 372.3l-1 .4M568.2 367.4l.8-1 3.8-1.5M566.8 372.3l3 1.1M565.5 367.3l.4-2.3-1.1-1.1 .3-1.3 2.9 0-.8 2.2-1.3 .2M567.2 364.8l1.8 1.6M564.8 363.9l-2.4 1.2M565.1 362.6l-.2-.3-1.7-.3M572.1 362.5l-2.4-1-1.7 1.1M599.2 314.7l.5 .2 1.5-.5 1.9-3.4-2.6-1.1-.1 0-1.2 4.8-2.1 .2-.8-.8 1.9-4.9-.7-.9-3.8 2.2 1.2 3.1 1.4 .5M597.5 308.3l-.2-1.5-3.5-.4-1.3 3.4 1.2 .7M593.4 319.9l-1-.2-2.9 5.2-2 .2 .6-4.5 3.2-1.9 1.1 1M594.5 324.8l-1.5 2.1-3.5-2M587.5 325.1l-.5 .2-1.8 1.5 1 3.4M593.9 329.9l-.9-3M604.3 330.4l-1-.5-1.3 0-.9 2.4-3.9 2.2-2.1-4 4.6-2.9 2.3 2.3M601.1 332.3l2.9 2.8M595.1 330.5l-1.1-.4M599.7 327.6l.2-1M597.2 334.5l.1 3.2M625.6 318.9l-3.8 3.4-.8-.6 .5-4.2 1.6-1.2M603.3 329.9l1.3-2.8-1.2-2 1.4-.8 3.3 .9-.1 .4-1.7 1.8-1.7-.3M606.3 327.4l.3 2.3M603.4 325.1l-2-.2M608 325.6l1 3.1-2 1.2M611 320.4l1.5 .3 3.4-3.3 1 1.1 .1 1.7-3.1 2.2-1.4-1.7M615.9 317.4l-.9-1.8M621 321.7l-3-.1-1-1.4M616.9 318.5l4.6-1M613.9 322.4l0 .1-.4 .5-2.3 .8 1.1 1.4-.4 1.1-2.6-1-.6-.6 .7-1.3 1.8 .4M610.3 320.9l-1.1 1.6 .2 .9M612.3 325.2l1.6 .1-.4-2.3M602.9 318.5l-.9 2M604.8 321.1l-2.1 .5M605.8 310.7l-.4 .2-.9 4.3 .5 1.3M606.3 317.1l2.6-2.3M606.7 317.8l2 .6M606.2 320.7l3 1.8M608.7 324.7l-.6 .5M605.3 321.2l-.5 3.1M526.2 369.1l2.8-.5 1 1.7 0 .7M530 370.3l2.7-2.3 .8 .6M526.7 359.4l-2.1 2.5 4.2-.1 .7-1.1M520 367.7l3.7-3.5 1.6 1.1 .1 3.1M523.7 364.2l-.3-1.6-.9-1M524.6 361.9l-1.2 .7M668.7 360.7l.4-.3 .5-4.2-1.2-2.1-3.7 .2M668.4 354.1l5.7-3.7-3.6-5.8M663.7 354.3l-.9 0-1-1.6M674.1 350.4l3 1.4 4.3-3.4 2.9-4.6M677.1 351.8l.5 1.2 2.7 2.9 4-.7 3.3 1.2 2.9 2.2M672.1 360.3l-3 .1M673.4 358.4l-3.8-2.2M676.5 356.7l1.1-3.7M679.5 364.4l.9 .8M629.2 338.8l-3-1.8-2.5 .4-1.2 1.4-1 4.2M799.9 474l-2.7 1.5-4.4-3.5-5.4-1.7 5.6 3.9 2.2 6.5 .8-.3 1.9-2.9-.7-2M787.4 470.3l-.4-.3M795.2 480.7l-1.3 1.5M797.9 477.5l1.1 .6 .7 4.6-1.1 0-2.6-2.3M808.7 488l-.5 .6-.3 1.8 1.3 1.8M792.5 487.9l2.7-.9 .2 .1 2.3-.3-.7-2.5-2.5-.3 .7 3M794.5 484l-.9-.6M795.4 487.1l.2 2.8M797.7 486.8l.8 .5-.3 1.5M797 484.3l1.6-1.6M656.8 385.1l.3 1.3 1.5 1 .3 1.3 1.8 .6 1.3-1.1-1.1-1.8-2.3 1M657.2 396l2.3 1.6-2.4 2.9M662 388.2l.9 .2 1.5-1.1-.3-.7 .5-2-.8-1.3-.1 .1-1.9 1.7 2.3 1.5M661.8 385.1l-.6 .2-.3 1.1M664.6 384.6l2 .4-.4 2.7-1.8-.4M666.6 385l.3-.3M663.8 383.3l.4-.6M657.7 383.4l1.5-.4 2 2.3M657.1 386.4l-.8 .9-1.6 1.7M645.4 364.2l-5.4-.6M669.2 389.5l1.6-3.4-1.3-1.1-2.5 3.5 .4 .8 1 .9M667 388.5l-.8-.8M669.5 385l-.4-.9M662.9 388.4l.7 2.4 .1 .1 3.7-1.6M651.5 232.5l-6-2.3-1.6 3.4 1.7 6.4 2.7 .4M626.9 213.4l-3 3.6 .2 .7-.9 2.1 1.7 1.1 1.1 0 1-1.2-.2-1.5-2.7-.5M628.4 213.9l.3 .8-1.9 3.5M631 230.7l2.3-1.9 1.8 .3 1.5 2.3-.1 .1-4.6 1.6-1.1-1.8-3.9 .6 1.4-4.3 1 .4 1.7 2.7-.2 .6M633.3 228.8l-1-1.4-3 .6M611.4 212.1l.6 1.1-.2 3.4-1.2 .9-.3-.2-1.5-2.9M618.9 204.7l-1.7 2.5 2.2 2.3 0 .4-1.9 .9-1.8-.4-1.9-1.7 3.4-1.5M613.8 208.7l-.2 0M619.4 209.5l2-2.8M615.7 210.4l.1 3.8-3.8-1M619.4 209.9l2.7 2.6 .8-.3M623.2 219.8l-1 .2-1.3-.5-.2-.7 .7-3.1 2.5 1.3M621.4 215.7l-.6-1.4 1.3-1.8M573.7 238.9l-1.3-1.3-.9 2.3 .5 .1 1.7-1.1 .6-.1-.4 2.8-.1 .1-.4 .5-.8 .6 .2 2.3-1.7-.4-.4-2 1.9 .1M563.9 248.9l1.9 .2 0-1.5-.3-.4-.4-.1-1 .5-1.4-1.2-1.1 .9 1.8 2 .5-.4 .2-1.3M565.1 247.1l-.7-2-1.7 1 0 .3M561.6 247.3l-1.1 .4-1.3-1.6 2.4-1.6 1.1 1.6M571.7 249.6l-.1-.1-1.6 .1-1.3 1.1 .5 1.3 .4-.1M572 240l1.8 1.7M571.5 239.9l-.5 .1-.9 .9-1.3-.6-1 .4-.7 1.1 .7 1.3 1.6-.3 .8-.5-.1-1.4M570.2 242.3l.5 .4M575.2 242.2l.9-.5 .2-1.9-2.4 1.8 1.3 .6 .6 1.2-.1 .2-1.3 .3-1-1.7M577.3 246l-1.6-.3 0-2.1M578.3 243.3l-2.5 .1M568.7 250.7l-1.3-1-.8 .2-1 1.6 2.8 2.2 .8-1.7M573.1 253.9l-4.1 1 3 3.4 .8 0M569 254.9l-.2-.1-.4-.7 0-.4M572 258.3l-1.1 .4-1.1 1.9M566.1 261.1l.7-.9 .9-.1 .3 .3M580.1 248.7l.1 .4-2.2 .8-.2-.1M578 249.9l-.2 1.5-1.3 1.3M576 250.2l-.1 .1M578.8 271.3l2.9-1.2 .1-.8-.8-1.2M581.8 269.3l3.6-1.4 .1-.3M588.8 266.8l1 2.2-.8 1.1-2.3 .5-1.3-2.7M556.2 255.9l.1 1.1 1.4 .3 .4-.1 1.1-1.4-.1-.5-.8-.3-2.1 .9-.9-1.4-.2-.1-.4 .1-.7 1-2.3-.2 .6 2.3 1.7-1.1 0-1M564.4 255l1 .4 1.2-1.1-1.5-.6-.7 1.3-.6 .2-.5-1 .1-1.1-.1 0-1.6-.2-.1 1.2 1.7 .1M549.3 267.5l-.7-1.6-2-1.2 1.5-1.7 1.3 .6-.8 2.3M551.5 264.7l-.3-1-.9-.5-.9 .4M550.3 263.2l0-2.3-.1-.1-.2-.2-.3-2.5 2.5-.2 .6 1-2.6 1.9M550 260.6l-1.2 .2-1 1.6 .3 .6M548.8 260.8l-1.4-.8-.4 .1-.3 1.9 1.1 .4M547.4 260l1.3-2.9 1 1M542.8 248.4l.3-.4 2.6 2.1-.7 1-.1 .1-1.8-.2-.6-1.5M561 275.4l-2.9-1.9 .5-1.2 0-.1-1.6-1.4-.3 0-1.4 1.2 .8 1.7 1.1 .4 .9-.6M558.8 277.3l.1-.1M557.2 274.1l.2 1.5M558.6 272.3l2.9 .1M558.6 272.2l.9-2.1M557 270.8l1-1.3M555.3 272l-2.1-.7 .3-1.1M556.7 270.8l-.8-1.3M556.1 273.7l-1.7 1.3 .5 2M558.3 255l-.7-.8-2.3 .3M554 256.5l1.5 1.3 .8-.8M563.3 253.1l-.5-2.4-1.9 .8-.4 0-.2-.1 .3-3.1 2.4 2.1-.2 .3M563.4 249.3l-.4 1.1 2.6 1.1-.7 1.2-1.5 .4M560.9 251.5l.8 1.4M560.6 248.3l-.2-.3 .1-.3M565.8 249.1l.8 .8M560.5 251.5l-.5 2.8 1.4 0 .2-.2M554.2 250.3l.7 0 .7-2-2-1.3M554.9 250.3l.8 .8 .1 1.3-.3 .4-2.2-.6 .5-1.7M546.6 241.9l-.2 .2-3.1 .4 1.3-2.4 1.9 1.2 .1 .6 1.7 .7 1-1.5-.4-1.5-1.3-.1-1.1 1.8M550.6 250.7l.7-.3 1.4 2.1-.3 .9-.4 .2-2.1-1.3 .7-1.6-1.7-1.3-.1-.5-1.1-1-1.3 .5-.3 1.5 1.5 .7 1.3-1.2M545.7 250.1l.4-.2M539.5 246.2l1.1-1.4 1.1-.5 1.4 3.7 1.9-.7 1.4 1.1M570.4 228.3l-1.1 1.3 0 1.4-.7 .6-1.5 .6-.6-2.5 2.3-.3 .5 .2M573.6 231.9l-2.2 1.4-.2-.1-1.9-2.2 3.6 .2M568.6 231.6l.7 2.4 1.9-.8M555.1 223.9l.5 .5-.1 2.4-2 .4-.3-.1M555.6 224.4l2.5 .1 .7-1.4M580.7 213.3l.1-.6-1-2.4-1.1-.3M578.4 228.6l.7 0 1.8-.9-.8-1.2-1.1 0M564.4 216.2l.9 .6 .9 1.9 .4 .1 1.9-.2 .4-1.6-.7-1.9-.5-.3-2.4 2M567.7 214.8l-.6-1.5M566.2 218.7l-1.7 1.5M568.4 223.1l-.8-.2-1-4.1M568.5 218.6l.7 .5M565.8 223l1.8-.1M568.2 215.1l3.6-1.4M568.9 217l3.2-1.3M577.9 231l1 1.1 .2 .6-.9 1.2-2.8 .3-.6-.5-.5-1.4M585.7 219.5l-.3 .8-1.8 .2-.1-2M583.6 220.5l-.8 1-2.2-1.5M579 220.8l1.1 2.3 2.6-.9 .1-.2 0-.5M578.7 225.1l1.1-.9 1.1 1-.8 1.3M580.1 223.1l-.3 .6-2.7-1M579.8 223.7l0 .5M586.6 245.5l-1-1.4 .3-.7-.5-1.1-.7-.2-1.5 .8-.2-.6 .9-1.9 .2 0 .6 1.7M583.9 240.4l-1.2-.2M583 242.3l-.5-.5M584.7 244.3l.9-.2M582.8 245.8l-.2 0M584.3 244.3l-1.1-1.2-1.3 .7M585.7 246.7l-.3 .7-1.3 .5-.7-1.7M584.1 247.9l-.5 .8-.4 0-1.1-2M586 258.8l2.4-1 .1-1.4-1.8-.8-.7 .5-.2 2.5M586 256.1l-1.1-.5-2.5 .3M584.9 255.6l-.4-2.7-.1-.2-.5 .1-1.5 2.5M581.5 253.2l0-.1 1.6-.6 .8 .3M590.3 254.6l-.1 .1 1.3 2.9 .5 .1 .8-.5 .2-1-.5-1.1-1.9-.7-.3 .2-.4-.2-2.9 .4-.1-.4 .9-2.4 .4 .1 1.7 2.3M587 254.8l-.3 .8M586.9 254.4l-2.4-1.5M587.8 252l0-.1-3 .1-.4 .7M596.8 240.1l-.4-.2-1.5 .7 .2 .4 .8 .6 1.2-.4 .1-.5-.4-.6 .7-1.7 .3-.2 1.3 1.4 0 .2-1.9 .9M590.6 265.2l.8-.1 .2 3.7-1.8 .2M606.4 272.4l-2.3-2 1.4-3.3 3.9 1.1M604.1 270.4l-1.6 .3-1 2.9M605.5 267.1l-.4-1 .5-1.6 4.3 .3-.4 3.3M599.4 263.5l-.7 .4 .6 2.2 2.2 .6 1-.7-1-2-2.1-.5 .4-1.7-1-1.7 0-.1 2.3-.7 0 1.9-1.3 .6M601.1 259.3l.3-.3-.2-.6-1-.7-1.7 .6 .3 1.7M604.8 258.8l.1-.8 1.9-1.6 1.5 .9 .1 3.7-1 .2-1.8 2.3-2.5-1.4 0-.1 .5-2.3 1.2-.9 2.6 2.4M608.4 261l1.1 .3M605.6 263.5l0 1M603.6 259.7l-2.2-.7M603.1 262l-2-.8M591.5 279.4l-2-2.3-.1-1.6-1.4-1.2-.2 0-1.7 3.1 .3 1.1 3.1-1.4M589.4 275.5l4.2-1.1 .3 1M586.1 277.4l-2-1.5-1.2 1.1 .2 4 .4 .1 2.5-.6 .4-2M591.4 284.4l.5 2.1 1.1 .7 3.6-.7M577.7 287.1l-2.4 1.5-.3 0-1.5-2.1 .4-3.1 .2-.5 3.1 .1 .5 4.1 3.7 1.1 .3-.6-1.1-5.3 .8-.9-.6-1.1-2-1.7-1.8 0 .5 4.2 3.1-.5M581.4 281.4l1.7-.4M580.8 280.3l-.1-4.1 2.2 .8M579.8 275.1l.9 1.1M578.8 278.6l.9-3.5M577 278.6l-1.1-1M574.1 282.9l-.4-.7M577.2 283l.3-.2M573.9 283.4l-3 .8M573.5 286.5l-2.2 .6-.5-.3M570.6 290.1l-.1 .1 2 2.7 .4 0 2.1-4.3-4.4 1.5 .7-3M570.5 290.2l-1.8 0 0-2.7M566.1 293.2l1.5-.8 .9-2.1-3.8-2M568.7 290.2l-.2 .1M575.4 302.5l0-2.3 3.5-.7 1.8 1.2 .8 2-2.2 .7M586.7 295.9l-.6-3.7 6.4-.3 .5 1-4.8 3.4-1.5-.4-1 1.2-.1 3.6 5.9-.9 .8 .3 .5 .8-1.3 2.8-1.5 1-4.7-3.4 .3-.6M597.3 306.8l1.5-3.1M592.8 300.9l2.3 .2M591.5 303.7l2.3 2.7M598.7 294.3l-4.8-.4-1.6 6.2M592.5 309.8l-1.7 .1-2.1-3.2 1.3-2M581.8 302.9l-.3-.2M587.9 306.8l.8-.1M583.2 302.6l2.1-1.3M593 292.9l.9 1M588.2 296.3l3.3 3.5M592.5 291.9l.5-4.7M580.7 300.7l1.1-2.8-2-2.5 2.1-1.5 1.6 3-1.7 1M583.5 296.9l2.2 .2M598.5 258.3l-1.2-.9-1.4 .5-.9-2.6 1.5-.7 1.5 1.1-.7 1.7M600.2 257.7l0-1.9-1.5-.5-.7 .4M602.5 270.7l-1.5-1-3.8 .2-.2-.4-1.2-1 .5-4 1.6-.7-.7-2-2.5-1.1 0-.1 .7-1.4 2.7 1.2-.9 1.4M595.4 259.2l0-.9 .5-.4M598.1 260.4l.7-.3M603.3 255.2l2.3-1.2 0-1.7-1.1-.5-2.1 .5-.6 .4 .2 1.6-1.2 1.3 1.4 1.6 1.4-.3-.3-1.7-1.3-.9M601.8 252.7l-.7-.3-.7 0-1.7 2.9-.6-2.1 1.2-1.2 1.1 .4M600.8 255.6l-.6 .2M602.2 257.2l-1 1.2M606.8 256.4l0-.8-1.2-1.6M603.6 256.9l1.3 1.1M510.9 319.9l.5-.8-.5-1.1 .8-1 1.2 .5 .1 .7-.6 .7-1 .2M512.4 318.9l1.4 1.9M513 318.2l1.4 .5M511.7 317l-.2-1 .5-1.1M512.9 317.5l1.3-1.3M508.9 318.1l.5-.6 1.5 .5M507.3 317l-.2-.6-1.4-.3-.8 .3 1.6 2M525.7 279.1l1-6-.2-.1-3.3-.4M531.9 276.3l-.8-1.9 6.4-1 1.1 .9M526.7 273.1l.5-.1 3.3 .7 .6 .7M544.8 262.4l-1.1-1.1-1.2-.1 0 3.7 .7 .4 .5-.4 1.1-2.5 .3 .1 1.4 2.2-.5 .5-2.3-.3M547 260.1l-1.8-.7-1.5 1.9M545.1 262.5l1.6-.5M546.5 264.7l.1 0M546 265.2l-.5 2.4M544.1 268.5l-.2 0-2.3 1.4-.6 .7-.1 1M543.9 268.5l0-.1-.7-3.1M549.7 278.7l.3-3.6 1.7 .3 1 2.9M553.2 271.3l-.4 .2-3-.4-.4-.3M549.8 271.1l-.2 3.3-2.9-.2M549.6 274.4l.2 .6-2.5 1.7M549.8 275l.2 .1M562.1 280.1l0-.1M558.9 280.6l-.8-2.4M557.7 282.5l-.1 0M558.2 282.8l1.7 3.9M562.5 280.8l1.2 1.3M603.1 311l2.3-.1M601.2 314.4l3.3 .8M600.5 309.9l2.2-4.5M600.4 309.9l-2.2-.7M599.7 314.9l1.4 2.6M597.1 314.9l-.2 1.2M549.4 232.5l1.1 3.2 3.5 1.8-1.9 1.4-1.8-3.1 .2-.1 3.1-2 1.2 2.8 2.4-1.4 .3 1.4-1.8 2.1-.9-1.1 0-1M554 237.5l.8 0M552.1 238.9l-.1 .9-2.9-.4 1.1-3.5 .1-.1M548.3 242.6l.7 1.7 2.3-.9 1.4 .8 .9-2-1.4-2-1.1 1.6 .2 1.6M551.1 241.8l-1.8-.7M548.9 239.6l.2-.2M553.6 242.2l1.3-.5 .3-2.1-3 .6-.2-.4M555.7 238.6l.1 .3 0 .1-.6 .6M553.5 246.2l4.2-.5 .1-.1-.2-.4 .4-3.1-.8-.2-1.4 .6-.1 1.3 1.9 1.4M555.7 243.8l-2.6 .9 0 1M552.7 244.2l.4 .5M555.8 242.5l-.9-.8M557.2 241.9l-1.4-2.9M535.1 245.1l2.6-1.6 .2-1.9-1.6-.4M537.9 241.6l1.1-1-2.1-2.3M540.6 244.8l-2.9-1.3M545 247.3l.6-1.1-1.4-1.9-2-.8-.5 .8M546.4 242.1l-.3 1.7-1.9 .5M542.2 243.5l0-.2 1.1-.8M542.7 231.9l-1.1 1.5-.7 .4-1.8 .3M547.6 239.5l-1.7-1.6 2.6-2-2.3-2.1-1.6 2.1 0 .7 .9 1.2 .4 .1M545.5 237.8l-1 1.5 .1 .8M548.5 235.9l1.7 0M546.2 233.8l0-.5M544.6 235.9l-3-2.5M544.6 236.6l-2.3 .5-1.4-3.3M619.5 257.8l.4-.5 2.9-1.6 1.7 3.2M616 255.6l-.2-1-2.8-.1-.4 1.4 1.6 1.4M525 329.7l-2 .5-1-2.9 1.1-1.2 1.8-.1M521.5 332.1l.7-1.2-3.5-3.8-.3 .2M523 330.2l-.8 .7M523.1 326.1l-1.1-1.4 .1-.9-.2-.2-1.9-.2-1 1.4 .2 1.8 .5 0 2.3-1.9M519.7 326.6l2.3 .7M522.1 323.8l3.5 .4M521.9 323.6l.4-1.1M520 323.4l-.4-1.3M519 324.8l-1.6-1.1M519.2 326.6l-.5 .5M502.1 319.3l-.9-2-1.2-.3 1.5-2.1-.7-.8-1.2 .2-.5 1.4 .6 1.4-.2 .4-1.7-.3-.5-1 .1-.2 1.7-.3M499.7 317.1l.3-.1M499.5 317.5l0 1.2M497.8 317.2l-.8 1.4M497.3 316.2l-1.6 .9M486 303.3l.6 .1 .6 .3 .5 1.2-.5 1.7-1.4 .5 0-.1M485.8 307.1l-.1 1.5-3.2-.6M485.7 308.6l.9 1.9-4.4-.6M481.4 310.7l-.1 1.1-1.4 2.1-1.2 .7 .2 1 5.2 2 .2-.2 .6-2.5-5-1M478.7 314.6l-1.4-.6M478.9 315.6l0 3.6M484.1 317.6l-1 1.9M484.3 317.4l.4 .2M488 309.3l1.6-.3 .5-2.7-1.8 .9-.3 2.1-1.4 1.2 .1 .8 2.1 .5 1.5 1.6 .1 3.1-.7 .4-3.8-2.8 .2-1.6 .6-1.2M486.1 312.5l-4.8-.7M485.9 314.1l-1 .8M489.7 316.9l-.3 .6M490.4 316.5l.3 0 2.6 .8M540.3 351.1l.5-1.8-1.1-.8 .5-1.2-1.6-.6-.2 .1-.3 2.1 .2 .2 1.4-.6M538.3 349.1l-.1 1M541.3 345.9l.1 .5-1.2 .9M538.6 346.7l.4-1.9M538.4 346.8l-2.4-.7M538.1 348.9l-2.2-.9M579 308.1l2.7 1.5-1.8 2.7-.2-.1M581.7 309.6l1.1-.5-.6-3.2M584 309.8l.3 1.3 .5 .7 2.3-1-.3-3.1-2.8 2.1-1.2-.7M580.5 312.3l3.3 1.4-.1 .3-1.8 1.4-1.7-2.1-.3-1 .6 0 3.8-1.2M558.2 334.8l-3.1-.1-.8-.7-.3-3.3 2 .3M554 330.7l-.4-.3 2.5-4.1M553.6 330.4l-.1 0-1.4-.7M556.2 341.8l.4-.6 2.4-.4 0-.6-1.9-2.3-.8 .5 .3 2.8M559 340.8l.8 1.4-1.8 2.5M559.9 342.2l-.1 0M559 340.2l1.6-1.2M557.1 337.9l1.4-2M556.3 338.4l-2.2-.1-.9 1.6 .6 1.9M554.1 338.3l-.4-.9 1.4-2.7M547.1 341.1l.2-2.8 1.4-.3 .4 2.2-1.2 1.4-.6-.1M548.7 338l.3-.2 .9-.1 1.7 2.2-.9 .8-1.6-.5M542.9 336.1l2.5 0 .7 1.8 1.2 .4M554.4 347.5l.4 .1 3.2-2.6 .7 .7 0 1.8-2.7 1.7-1.2-1.6M556 349.2l0 .4M558 345l0-.2M558.7 347.5l.7 1.1M558.7 345.7l4.2-.1M544.4 344.4l.8 1.3 1.4-.1 .6-.3 .1-.3-.9-2.3M549.9 349.3l-.3 0-.6-2.1-1.3 1 1.2 1.5 .7-.4M549 347.2l.3-.6M549.1 346.1l-1.9-.8M547.7 348.2l-.5 0-.6-2.6M547.3 345l1.7-2.1 .4 .2 1.4-.1 .4-.8-.6-1-1.7 1.4 .1 .3M548.9 342.6l-1-1M549.4 343.1l.9 2.1M550.6 341.2l.1-.5M550.8 343l1.3 1.8M551.2 342.2l2.1 0M553.2 339.9l-1.6 0M533.3 318.8l-1.5 2-.1 0-.5-2.3M531.7 320.8l-1 .2-.2-.1M531.8 320.8l.7 .6 2.8-1.3M530.7 321l-.9 3-.4 .1M537 322.4l-1.2 .4 .3 2.4 1.2 .6M535.8 322.8l-.6-.4 .3-2.3M425.3 203.3l1.5-.2 .6-1.6 1.5 2.3-.8 .9-1-.7-.3-.9M427.1 204l-1.6 .8M427.7 201.2l-.3 .3-3.5-.1M428.9 203.8l1.1-.3M428.1 204.7l0 .1M526.1 260.1l.3 .9-2.1 4.3-2.6-.2M524.3 265.3l.7 .3 2 3.4-.5 4M510.5 283.9l-1.9 1.9 1.2 3.4-4.2 2-.2 0-.1-.4 2.1-4.7 1.2-.3M507.4 286.1l-3.8-1.7 0-.1 .5-3.6M509.8 289.2l.4 .2M505.3 290.8l-2.7-2.9 1-3.5M505.6 291.2l5.1 1.7M500.8 295.9l2.4-.3 2-3.4 0-.1-5.1 2.6M500.7 296.3l1.5 2 1.5-1.1 .2-.5-.7-1.1M505.2 292.1l0-.4-4.5 .2-1.3 2M493.9 295.1l2.2-1.5 1.7 .7M502.2 298.3l0 .3 1.5 .9 .9-.6-.9-1.7M492.9 293.2l0-.2 2.5-.6 .7 1.2M498.7 293.8l-.9-2.4-2.1-.2-.3 1.2M500.7 291.9l-.6-2-2.1 1.1-.2 .4M500.1 289.9l.4-1.6 2.1-.4M505.4 291.2l-.2 .5M492.9 293l-.2-1.9 .9-.5 2 .3 .1 .3M492.7 291.1l-.4-.3M490 292.5l-.7 .4-.1 0M489.6 309l.6 .3 2-.9-.4-.8-1.7-1.3-2.4-1.4M488.3 307.2l-1.1-.6M490.1 306.3l.2-.4 .2-2.6-.1-.1-3.2 .5M488.8 311.8l1.7-1.2-.3-1.3M551.6 371.1l-.8-1.9 1-1.4 .2-.8-2.3-.6-2.3 2.8 0 .2 .7 .2 2.7-.4M548.1 369.6l1.9 2M551.8 367.8l2.1 2.7M549.7 366.4l-.1-.3M552 367l.5-.4M547.4 369.2l-1.5-3.6M547.4 369.4l-1.4 1.3M565.9 356l.1 .3 1.4 .2 2.5-1.4 .6 .3 .5 1.1-2 2-1.6-2M569 358.5l-.3 1.7 1 1.3M571 356.5l2.9 2.1M570.5 355.4l2.4-2.3M563 358.6l1 .1 1.1 2.4 2.9-1-2.8-2.2-1.2 .8M565.2 357.9l.8-1.6M565.1 361.1l-.2 1.2M568 360.1l.7 .1M590.8 309.9l-.5 .7-1.6 .9-.5 1.3 1.8 3.7 .4 .1 1.2-1.5-1.3-4.5M591.6 315.1l3.3-1.5M588.7 311.5l-1.6-.7M590.4 316.6l.9 2.1M584.8 311.8l.1 .7 1.2 .8 2.1-.5M583.8 313.7l1.1-1.2M586.1 313.3l.8 3.3 3.1-.1M613.9 325.3l.5 .5 .9-.1 .9-1.3-2.3-1.9M616.2 324.4l1.5-.8 .3-2M617.7 323.6l1.4 1.8 3.2-1.7-.5-1.4M612.1 332.8l.9 .1 .8-1.3 0-.1-.8-.6-.4 .1-1.9-1 0 .2 .6 3.1 .8-.5 .5-1.8M610.7 330.2l-2.1 1.7-.5 .2M609 328.7l1.7 .6 0 .7M610.5 336.6l.4-.9 .4-2.4-2.7-1.4M619 328.5l-.1 .3-.1 0-1.5-.4 .3-.8 1-.2 .4 1.1 2.2-1-2-2.1-.1 0-2.2 1.3-.6 0-1-1M614.4 325.8l-.1 .3-2.1 1.2-.3-1M535.5 364.8l-1.2-.8-1.8 3.4 .2 .6M534.3 364l-.7-1.2 .8-.5M533.6 362.8l-.2-.1-1.5-2.6M623.7 337.4l-.4-1.1 .7-3.7 .9-.6 2.4-.1 1.2 .8 1.1-.2 2.2-3.4-1.1-1.3-2.8 .3-1.3 1.2 .7 2.6M628.5 332.7l-2.3 4.3M629.6 332.5l3.2 3.4M631.8 329.1l5.6 .3M630.7 327.8l-.4-2.8M627.9 328.1l-2.7-3.3 1.6-1.4M801.4 488.8l-.3 .7 .5 1.5 2.2-1.1-1.2-1.8-1.2 .7-2.9-1.5 1.2-1 .5-1.7-.2-1.7 0-.1-.3-.1M800 482.8l1.8-1.2-.6-3.2 1.1-.7 4.3 3 .1 .2-1.6 .7-3.3 0M805.1 481.6l-1.7 3-3.4-1.7M801.2 478.4l-2.2-.3M802.3 477.7l.5-2M806.6 480.7l.3-3.1M806.7 480.9l.3 .2M656.3 387.3l.3 2.9 2-.9 .3-.6M656.6 390.2l-.3 .6-1.9 .4M661.4 398.6l-1.9-1 2-3-.2-.2-.4-3 0-.1-1.7 .1-1.6 1.2 0 1.2 3.7 .6M657.6 393.8l-.6 .6M664.3 393.2l-.6-2.3M663.4 394.9l-1.9-.3M660.9 391.4l2.7-.6M660.9 391.3l-.2-2M659.2 391.4l-.6-2.1M657.6 392.6l-1.3-1.8M659.9 378.6l1.7 1.1-.2 .6-1 1.6-.9 .7-.9-2.8M660.4 381.9l3.3 1.5M661.4 380.3l2.7 2.1M659.5 382.6l-.3 .4M670.8 386.1l.9 .1 1.9-1.1-.1-.6-1.7-1.7M673.5 384.5l2.3-4 0-.1M628.3 227.6l-.4-.9 .5-1.4-.3-1.6-.5-.2-3.4 .9 .2 1.7 2.1 .8 1.4-.2M632.3 227.4l-.2-1.9-3.7-.2M627.6 223.5l-1.6-2.6M624.9 220.9l-1.2 3 .5 .5M632.1 225.5l1.1-1.7-2.2-2.7-2.9 2.6M628.7 214.7l3.4 3.4-1.1 2.2-4-.6M631 220.3l0 .8M607.3 214.6l-.9 1.2 .5 .9 3.4 .6M606.9 216.7l-.5 1.6 .2 .6 2.6 .3 1.3-1.5 .1-.2M623.7 223.9l-.8-.2-.9-1.1-2.9 .3 1.6 2.5 2.2-1.7M622 222.6l.2-2.6M571.1 244.7l-.8 .8-.9-.1-1.4 .6 .1 1.3 .3 .4 .1 .1 2.5-.3 .2-.3-.9-1.7M569.4 245.4l0-2.6M567.8 243.1l-1.1 1.5 .2 .4 1.1 1M568.5 247.8l1.5 1.8M571 247.5l.6 2M565.5 247.2l1.4-2.2M568.1 247.3l-2.3 .3M568.4 247.7l-1 2M567 226.4l0 .2 1.7 .2M568.8 240.3l-.7-2 0-.1-1 .2-2.2-1.1-.4 .3 .8 2.6 .1 0 1.2-.4 .5-1.4M566.6 239.8l1.2 .9M568.1 238.2l-.3-2.1-1.6-.6-.9 1-.4 .8M565.4 240.2l.4 1.4 1.3 .2M574.8 233.7l-1.4 1.6-.5 0-1 .8-.1 1 .6 .4 1.4-.8-.4-1.4M573.8 236.7l.5 .3 1.6-.6 .1-.3-.6-1.9M572.9 235.3l-1.4-1.1-.1-.9M571.9 236.1l-1.1-.8 .7-1.1M572.4 237.5l0 .1M574.3 237l.2 1.7-.2 .1M572.8 245.1l.3 .3 .7 .1 .6 .4 0 2.2-.2 .2-2.3-1.4 1.2-1.5M571.9 246.9l-.7 .3M573.8 245.5l.6-1.6M574.4 245.9l1.3-.2M574.2 248.3l-.4 .8M574.4 248.1l1.2 .2M566.6 254.3l1.8-.2M565.1 253.7l-.2-1M565.4 255.4l.5 1.1-1.8 1-.9-1.3 .6-1M563.2 256.2l-1.2 .1-.6-2M566.8 260.2l-1.2-1.4-1.4-.2-.9 1.1-.1 1.2M565.9 256.5l.8 .2 .1 .9 1.4 1.2 .7-.4-.4-3.1-1.8 1.4M568.5 255.3l.3-.5M564.2 258.6l-.1-1.1M566.8 257.6l-1.2 1.2M568.2 258.8l-.5 1.3M568.9 258.4l2 .3M579.6 253.3l0-.7 1.5-.7 .5-1.2-.1-.8-.9-.4-1.3 2.6 .3 .5M579.3 252.1l-1.5-.7M581.1 251.9l.4 1.2M580.6 249.5l-.4-.4M581.6 250.7l1.5 1.8M581.5 249.9l.1-.1 3.1 1.6 .1 .6M581.6 249.8l1.6-1.1M580 274.8l1-.7 3.1 .7 1.7-2.2-3.5-1.3-1.3 2.8M582.3 271.3l-.6-1.2M584.1 274.8l0 1.1M587.8 274.3l-2-1.7 .9-2M588 274.3l2.3-2.1-1.3-2.1M552.8 258.9l.8 .5 1.7-1.1 .2-.5M552.2 257.9l.1-.3M557.7 257.3l-.3 1.8-.9 .4-1.2-1.2M558.1 257.2l1 1.3-.2 .5-.7 .4-.8-.3M545.2 259.4l0-1.4-2.5 0-.4 3.2 .2 0M542.9 255.2l-.8 .1 .3-3.2 .3-.2 1.9 1.6 .3-.1 .5 .2 .6 .7-1.3 1.9-1.8-1 1.7-1.7M542.7 251.9l.4-.9M544.9 253.4l0-2.2M545.4 253.6l1.2-1.4-1.6-1.1M547.6 250.6l.1 1.2-.2 .3-.9 .1M548.7 257.1l-.1 0 2.2-1.9 .6-.1 .3 .2M557.6 254.2l0-1-.5-.5 1.7-1.6 .6 .3-.7 1.7-1.1 .1M559.1 255.3l.4-.7-.8-1.5M555.1 254.4l.4-1.6M557.1 252.7l-1.3-.3M558.4 249.5l.2-.4-1.4-2-1.1 1.1 1.1 1.3 1.2 0 .4 1.6-2.6-.2-.5 .2M559.5 254.6l.5-.3M559.4 251.4l.9 0M557.8 245.6l.3 0 1.1 .5M558.6 249.1l1.8-1.1M557.2 247.1l.5-1.4M556.1 248.2l-.5 .1M557.2 249.5l-1 1.4M546.1 243.8l1 .8-.9 1.4 1.5 1.1 1.4-1.5-.2-1.2-1.8 .2M548.9 244.4l.1-.1M546.2 246l-.6 .2M547.7 247.1l0 .8M550.4 247.6l-1.6 1.3M549.1 245.6l1.4 1.2M580.8 212.7l1.7-2.8-.3-1.3-2.4 1.7M582.2 208.6l.1-.3-.1-.2M579.1 228.6l1.9 1.5-.3 .7-1.8 1.3M581 230.1l1.2-1 0-.1-.5-1.1-.8-.2M574.5 238.7l2 .5-.1 .5-.1 .1M576.4 239.7l1.5 2.8-1.8-.8M578.5 243.1l-.6-.6M587.8 220l-1.4 1.2-1-.9M589.1 220.5l1.3 1.4 .7-3.5-1.8 .1M581.7 227.9l.3-.5 0-.3 1.2-1.5-.5-1.2-1.7 .8 1 1.9M581 225.2l-.1 0M582.7 224.4l.4-1-.4-1.2M586.3 202.6l1.8 2.4 .1 .4-2.1 3-3.8-.1M588.1 205l3.1-1.5 1.3-3.4M581.2 213.8l.9-.4 3.8 .6 .2-.4-1.9-2.1-.2 0-1.9 1.9M584 211.5l-1.5-1.6M585.9 214l-.4 2M584.2 211.5l2-2.2 1 1.5-.1 2.3-1 .5M586.2 209.3l-.1-.9M624.4 226.1l-1.4 1.3-2.4-1 .1-1M623 227.4l.4 2.1 1.1 .9 2-3.5M619.1 222.9l-1.1-.8 0-.4 2.9-2.2M590.3 226.4l-.2 .8-1 .3-1.3-1.4-.1-.3 .5-.8 1.1-.5 1 1.9 1.1-.3 .1-.9 1.4-.7 .1-.4-.1-.6-2.4-1.6-.1 0-.5 .6-.5 1.8 2.1 .9M598.4 222.6l.5-.7-.9-1.5-.2-.1-.9 1.1-.2 1 1.7 .2 .3 .7-.8 .9-1.6-.5-.1-.8 .5-.5M596.2 222.9l-1.4-.6-.3 .1-1.6 1.1M596.3 223.7l-.6 1.6-2.7-1.2M598.7 223.3l.9 .4 .1 .2-.7 1.3-.6 .2-.5-1.2M599 225.2l1.6 .6-.3 1.1-.3 .2-1.4 .3-.8-.9 .6-1.1M607 210.4l-4.5 .4-.1-2 .7-.8M600.7 204.1l-.6 1.4 .6 1.8 1.7 1.5M598.9 221.9l1.7-.3 .4 .4-1.4 1.7M596.9 221.4l-1.6-1.3-.3 .2-.2 2M584.1 240.4l0-.1-.2-1.6-1.4-.5-.4 .8 .4 1M585.9 243.4l1.1-.3 1.1 .7-1.2 1.6M583.2 242.9l0 .2M584.1 240.3l.3 0 .9 .1 .3 1.7-.2 .2M584.3 236.1l-.3-.4 .5-2 .9 .5 .6 1-.2 .6-.9 .3 .4 2.2-.3 0-1.3-1.1 .6-1.1 .6 0M585.3 238.3l.1 0 .1 .1 .8-.5-.3-1.9-.2-.2M584 235.7l-.9-.2-.8 2.2 .2 .3 1.2-.8M585 238.3l-1.1 .4M582.5 238l0 .2M584.4 240.3l1-2M583.6 248.7l.9 .8 1.9-.7-1-1.4M584.5 249.5l.3 1.4-.1 .5M586.5 246.1l1.1 1.7 .4 0 .7-1M593.2 251.4l0-1.7 1.8-.4-.3-1.1-.6-.4-1.3 .4-.1 1 .5 .5M588.4 262.8l1.4-1.7-.4-.5-2.7-.9M588.2 252.1l1.4-.6M590.6 254.4l.4-.7-.1-1M588.5 256.4l.6-.3 1.1-1.4M593 256.2l2-1 0 .1M592.8 257.2l2.6 1.1M592 257.7l.2 2.4 2.5 .5M594.2 253.8l.8 1.4M593.6 253.8l-1.1 1.3M592.6 252.9l-1.6 .8M588.2 249.8l-1.6-1-.1 0-.2 1.1 1.5 1.9 .4-2 .6-.5 1.9 1 .3-.6 1.7-.5M594.7 248.2l1.2-1.3-1.9-.7 .1 1.6M599.7 243.2l-1.1-1.3 .5-.5 1 .3-.4 1.5 .2 .5 1.7 .7 .1 .2-1.8 1.7-.8 .3-1-1.7-1.2 .2-.1-1.7 1.2 0 .7 .6-.6 .9M596.8 243.4l-.2-.2 .6-1.8 .6 .5 .2 1.5M591.7 242.1l.1 .1 .1 .5-.6 2-1-1.6 .5-.9 .6-.2 .1-1.1 1.1-1 .9 .5 0 .8-1.8 .9-.3-.1M593.5 241.2l.5 .8 1.1-1M594.9 240.6l-.4-.5-1 .3M596.4 239.9l-.6-.8 .9-.8 .8 .1M596.7 238.3l-.5-.7 1.4-.9 .1 .1 .2 .9-.1 .5M595.8 239.1l-.3-.1-.8 .5-.2 .6M600.1 241.7l.3-.3 1.7-.1 0-.2-.5-.9-2-.1 .8 1.3M591.3 244.7l0 .1-.2 .3-1.6 .4-.5-1.7 1.3-.7M589 243.8l-.1-.1-.8 .1M588.9 243.7l-.3-1.7-1.1-.1-.5 1.2M585.5 238.4l.8 1.4-.2 .3 .7 1.2 .3 .1 .9-1.3-.3-.7-1.4 .4M586.1 240.1l-.8 .3M586.8 241.3l-1.2 .8M587.1 241.4l.4 .5M590.3 272.2l1.9 .4 .2-3.5-.8-.3M592.2 272.6l1.4 1.6 0 .2M593.6 274.2l3.3-2.8 1.9 2.3M597.2 269.9l-.3 1.5M595.8 268.5l-.8-.1-2.6 .7M601.5 264l1.6-1.9M602.5 266l2.6 .1M601.5 266.7l-.5 3M599.3 266.1l-2.3 3.4M598.7 263.9l-.8-.1M572.5 292.9l-1.9 2.1-3-2.6M570.6 295l-.5 3.4-.3 .3M570.1 298.4l3.7-.1 1.6 1.9M578.9 299.5l-1.1-3.6 .8-.5 .3-3.1-2.2-.6-1.4 2.2 .8 1.7 1.7 .3M576.1 295.6l-2.3 2.7M578.6 295.4l1.2 0M575.3 293.9l-2.4-1M576.7 291.7l-.2-1.4-1.2-1.7M605.6 252.3l1.1-.6 1.4 .8 .4 1.9-1.7 1.2M595.9 246.9l.5-.1 .6 .7-1.8 1.9-.2-.1M598.1 253.2l-1.6-.2 0 1.6M596.5 253l-.2-.2-1.4 .1M511.5 316l-2 .3-.2-1.7-1.2-.3-.3 .2-.2 1.6 1.8 .4 .1-.2M509.4 316.5l0 1M509.3 314.6l.5-.3M507.6 316.1l-.5 .3M507.8 314.5l-1.5 .2-.6 1.4M513.1 307.5l-.1-1-2.5 .7-.2 .7 .3 .5 1.2 .5-1 1.8 .4 .4M510.8 310.7l-.6-.1-1.1 1.5 .9 .7M530.5 273.7l3.8-4.8 .8 .1 2.4 4.4M554.4 275l-.1-.1-2.5 .4 1-3.3 1.5 2.9M552.8 272l0-.5M551.8 275.3l-.1 .1M539 240.6l.7 0 .8-2.4 1.3-.3 1 1.3-1.5 2.7-1.6-1.3M541.3 241.9l.9 1.4M540.5 238.2l-1.4-1.5M542.8 239.2l1.7 .1M541.8 237.9l.5-.8M615.8 254.6l.4-.8 2.6 .4 1.1 3.1M499.5 307.3l-.6 .2 0 1 1 1.3 1.6-1.3 0-.2-2-1 1.1-1.4-.1-.3 .2-.3 1.2-1 1.4 1.6-1.2 .8-1.5-.8M493.7 304.6l-.8 1.3-.8-.5 .2-1.1 1.1-.3 .3 .6 1.3 .7 .6-.3-.6-1.8-.8-.1 .2-2.1 .3-.2 .8 .4 .5 1.4-1 .6M494.4 301l-.6-.1-2.1 .9 1.8 1.6 .7-.3M490.4 303.2l.5-1.5-.1-.2-2.2-.7-2 2.6M488.6 300.8l-1.1-1.8-.1 .1M484.5 297.3l.9-1.5 2 1.4 .2 1.7-.1 .1M484.2 294.8l1.2 .5 1-1.1 .1-.6M485.4 295.3l0 .5M575.9 326.2l2.6-5 1.9 1.3 1 3.7-3.8 1.7M581.4 326.2l1.6-.1 2.2 .7M583 326.1l.3-4.3-1.3-1.3-.7 .2-.9 1.8M583.3 321.8l1.5-1.2 .6 .1 1.6 4.6M585.4 320.7l1.1-.8 1.6 .7M586.5 319.9l-.1-3 .5-.3M586.4 316.9l-1.1 0-1.6-2.9M585.3 316.9l-.3 .2-3.2-.9 .1-.8M580.2 313.3l-.9 3-1.9-.8M579.3 316.3l.5 .5-2.7 2.1M553.5 330.4l-1.7 3.1-1 .1-.8 1 1.1 1.9 1-.1 .5-1.8-.8-1.1M552.6 334.6l1.7-.6M550.8 333.6l-.7-1.7 .3-1.3M552.1 336.4l1.6 1M551.1 336.5l-1.2 1.2M550 334.6l-1.8-.3-.4 .3-1.5 .1-1-1.4 .6-1.2 1.7-.3 .7 1.3-.1 1.2M548.3 333.1l1.8-1.2M547.8 334.6l1.2 3.2M546.3 334.7l-.9 1.4M547.6 331.8l.2-.6M545.9 332.1l-.3-1.5M545.3 333.3l-1.9-.4M541.4 346.4l.9 .6 2.5-.6 .4-.7M542.3 347l.2 2-1.7 .3M542.5 349l.5 .7-.1 .8M535.2 322.4l-1.7 .4 1.3 2.5 1.3-.1M533.5 322.8l-.5-.1-.5-1.3M501.5 314.9l.7 .3 .6 .7-1.6 1.4M502.8 315.9l1.2 .6-.5 2.3M504 316.5l.1-.1 .8 0M504.1 316.4l.4-1.9 1.3-.8 .5 1M512.3 300.9l-.7-.3-2.2 1.3 1.2 1.6-.1 .3 .7 1.7 1.8 .9 .1-.1-1.1-3-1.4 .2M512 303.3l.1 0M511.2 305.5l-1 .9-.4-.2-.4-1.5 1.1-.9M513.1 306.3l1.9-1M510.2 306.4l.3 .8M513 306.4l0 .1M514.6 297.7l-2-.8-1.5 2.6 .5 1.1M504.6 298.9l1.3 .1-.2 1.8-2 .6-.3-.4 .3-1.5M500.5 288.3l-2.2-1.3-1.3 .7 1 3.3M498.3 287l.1-2.6 5.2-.1M498.3 282l-.3 1.7-3 .1-1.5-1.2M498.4 284.4l-.4-.7M489.3 292.9l.2 1 1.2 1.2 1.4-1.8M489.5 293.9l-1.3 1.6-1.8-1.3M488.2 295.5l.2 .3-1 1.4M487.6 298.9l.9-.4 1.1-2.2-1.2-.5M491.7 301.8l-.8-.1M492.3 304.3l-1.8-1M493.4 304l.1-.6M492.9 305.9l0 .1 1.4 .6 .7-1.3M492.1 305.4l-1.8 .5M492.9 306l-1.1 1.6M616.3 326.7l-.4 2-1.5-1.1-.1-1.5M614.4 327.6l-.8 .6-1.6-.4 .2-.5M612 327.8l-.7 .6-2-3.1M611.3 328.4l-.1 .2-.5 .7M529 368.6l.1-1-1.5-2.3 1-.9 2.1 .1 .5 2.3-2.1 .8M531.2 366.8l1.3 .6M527.6 365.3l-2.3 0M530.7 364.5l2.7-1.8M528.6 364.4l.2-2.6M625.2 324.8l-.2 .1-.9 .1-1.8-1.3M625 324.9l.7 4.1 .9 .3M625.7 329l-1.5 .5 .7 2.5M623.3 336.3l-2.3-2.4-2.7 1 0 1.7 4.2 2.2M618.3 336.6l-3 1.2-1.7 5.2 3.1 4.6M615.3 337.8l-.3-.3-4.5-.7M803.8 489.9l.1 0 .7 2.7 .2 .2 1.9-2.1-1.5-1.4-1.3 .6M806.7 490.7l1.2-.3M805.2 489.3l.6-1.1 2.4 .4M804.8 492.8l.4 .6M804.6 492.6l-2.6 .1M801.6 491l-.3 1M801.1 489.5l-1.6 .5M799.7 486.3l2.9 1 .4-1.5 .4-.3 1.6 .4 .5 1.5 0 .1-2.8 .2-.1-.4M802.7 487.7l-.1 .4M803 485.8l-2.8-1.2M805.5 487.5l.3 .7M803.4 485.5l0-.9M805 485.9l3.4-2.6M805.5 487.4l3.7-2.9M675.8 380.5l1.4 1.8 3 1.1 2-4.5M677.2 382.3l-1.6 4-2-1.2M631.9 233.1l-.3 2.4 3 .4 1.9-4.4M626.9 231.9l-.8 .6 5 3.3 .5-.3M626.1 232.5l-.1 0-1.5-2.1M624.3 239.7l1.1 .4 2.5-.1 1.3-3.1-3.8-.9-1.1 3.7-.3 .1-2.1-.8-.6 .2-2.9 2.6 0 .1 0 .1-.7 1.8 1.6 2.1 .5 0 1.5 1.4 1.3-1.1 .1-3.4-1.3 .5-1.6 2.6M633.2 223.8l1.4 0 1.9 1.8-1.4 3.5M602.5 224.1l-.1 1.8 0 .1-1.7-.3 .1-1.1 1-.7 .7 .2 1.1-.3 1.3 1.6 1.5-1 .1-.2-1.4-1.3-1.2 0-.3 .9M615.8 214.2l.2 .2-.3 1.5-2.5 1.1-1.4-.4M616 214.4l2.3-.6-.8-3M618.3 213.8l1.9 .6 .6-.1M564.5 237.6l-1.1 .1-1.4-2.8 1.2-.7 2.1 2.3M555.5 226.8l1.9 1.2 1.1-2.2-.4-1.3M566.2 228.6l-2.1-.1-.4 1.5 .5 .6 2.3-.9-.3-1.1 .7-1.2 1.9 2M566.9 227.4l-.1-.5 .2-.3M561.6 244.5l0-.1-1.5-1.3-2 2.5M565.3 240.2l-2.1 .7 .3 1.1 1.6 .5 .5 1.9-1.1 .4-1.8-1.6 0-.1 .8-1.1M565.1 242.5l.7-.9M565.6 244.4l1.1 .2M562.7 243.2l-1.1 1.2M564.5 244.8l-.1 .3M571.8 237.1l-.5 .1-.7 1.7 .4 1.1M570.6 238.9l-1.2-1-1.3 .4M570.8 235.3l-.4 .2-1.3-.9-.9 1.3 1.8 .9 .1-.1 .3-1.2M570.1 236.7l1.2 .5M569.1 234.6l0-.1 .2-.5M568.2 235.9l-.4 .2M570 236.8l-.6 1.1M559.2 255.8l1.3 .8-.4 1.7 .7 .6 1.1-.1-.2-2.3-1.2 .1M561.7 256.5l.3-.2M560.1 258.3l-1 .2M561.9 258.8l1.4 .9M560.8 258.9l-.8 1.8-1.1-1.7M560 260.7l0 .3 1.5 .8M556.5 259.5l0 .7 1.7 1.3 .1 .1-.2 .5-1.5 .7-1.6-1.4 1.5-1.2M558.2 261.5l0-2.1M556.6 262.8l-.3 .7M558.1 262.1l.6 1.2M558.3 261.6l1.7-.6M553.6 259.4l0 .1-1.5 1.8 .7 1.4 .9 .1 1-1.4-1.1-1.9M554.7 261.4l.3 0M552.1 261.3l-1.8-.4M553.7 262.8l.5 1.1M552.8 262.7l-1.6 1M548.6 257.1l-.2-.2 .1-2.8-.9-.5-1.1 .8 1.3 2.4 .6 .1M547.8 256.8l-2.3 .6-.3 .6M548.5 254.1l.9-.5 1.4 1.6M546.5 254.4l-.5-.1M544.7 256.2l.8 1.2M547.6 253.6l-.1-1.5M547.7 251.8l2.1 .5-.4 1.3M551.3 250.4l.1-.1M552.7 252.5l.6-.3M552.4 253.4l2.3 1.1M552 253.6l-.6 1.5M549.9 252.3l-.1 0M588.3 231.2l.9-1 .1-.7-.7-.9-.1 0-1.4 1 1.2 1.6-.2 .3-.1 .1-1 1.4-.6 .2-1.1-1.3 .7-.5 2 .2M589.2 230.2l1.5 .6 1-.5 .3-.5-.4-.7-.6-.5-1.7 .9M583.1 235.5l-.5-.3 0-.9 1.4-1.4-.1-.6-.3-.4-.9 .2-1.6 1.2 1.5 1M584 232.9l.5 .8M581.1 233.3l-.7 .1-1.3-.7M582.7 232.1l-2-1.3M583.6 231.9l-.1-1.2-1.3-1.6M585.4 234.2l1-.8 0-.2M583.9 232.3l1.4-.4M576.9 238.9l0-.3 1.7-1.2 1.5 2-.3 .6M576.9 238.6l-1-2.2M576.7 239.1l-.2 .1M579.6 242.1l-.2 .6M580.1 239.4l.4-.3 1.6-.1M580.5 239.1l.1-1.6 1.1-.2 .6 .4M581.7 237.3l-.3-1.7 1.2-.4M581.4 235.6l-.5-.1-.5-2.1M591.7 230.3l.5 1.2-.5 .9 .3 .4 1 .2 .6-1.1 0-.1-1.4-.3M591.7 232.4l-1.1-.2 .1-1.4M590.6 232.2l-.4 .2-1.2 .2-.9-1.1M586.3 237.9l.9 0-.1-1.6-1.1-.3M587.2 237.9l.9 .5-.4 1M588.6 237.7l.7-.7-.3-1.4-1 .6 .6 1.5 0 .1 1.9 .5 .2 .7-.5 .7-.1 0-2-1.3 .5-.6M595.8 233.1l.9-.4-.2-1.2-1.3 .6 0 .5-.7 .6 0 .3 .8 1 .5-1.4-.6-.5M594.5 233.2l-.8-1.3 1-.1 .5 .3M593.6 231.9l.1 0M594.5 233.5l-1.3 .2-.2-.7M589.1 227.5l-.5 1.1M591 228.6l-.2-.7-.7-.7M588.5 228.6l-1.4-.8 .7-1.7M589.3 224.5l.1-.2M591.4 226.1l.8 .7-1.4 1.1M582.8 222l3.1 .1-.5 1.7 1.5-.1 .5-1.5-.9-.6-.6 .5M586.5 221.6l-.1-.4M585.4 223.8l-.2 .2-2.1-.6M587.4 222.2l2.5 .3M586.9 223.7l1.3 1.3M587.7 225.8l-.2 0-2.1-.9-.2-.9M588.2 205.4l.2 .2 1.2 4.8-2.4 .4M607.3 227l.3-1.7 1-.2 .8 1.9-.3 .5-1.8-.5-.1 .1-1 .1-.6-.3-.9-1-.3 .1-.8 1.6 1 .6 1-1.3M623.4 229.5l-1.9 .6-1.1 1.3-1.1 .2-.1-.1-.2-4.1 .2-.1 2.3 2.8M619.2 227.3l1.4-.9M620.4 231.4l2.5 2.5 2.2-.1 .9-1.3M618 222.1l-1.7 2.6 2.3 2.6 .4 .1M619.3 231.6l-.6 2.3 .3 .5 3.4-.3 .5-.2M607.8 221l-1.2-1.8-1.3 1.4 .7 .9 .5 .2 1.3-.7 .9 .1-.9 1.9 1.9 .9 .5-2-1.3-.9-.2 .1M600.8 224.6l-1.1-.7M600.7 225.7l-.1 .1M601.8 223.9l-.7-1.9-.1 0M602.4 226l-.1 .8-.5 .5-1.5-.4M603.9 222.9l-.6-1.6-2.2 .7M604.9 225.4l-.2 .5M602.4 225.9l2 .1M603.6 227.6l-.1 .1-1.2-.9M593.6 231.8l.1-1.4 1.4 .5-.4 .9M593.7 230.4l-.2-.6-1.5 0M597.8 226.5l-.9-.1-1.2-.8 0-.3M600 227.1l.6 1 1.3 .5 0 .1-1.7 1.1-.3-.4 .7-1.3M601.9 228.6l-.1-1.3M595.3 220.1l.2-.3 2.1 0 .2 .5M600.6 221.6l-.2-1 .8-1.4-2.1-1.7 .3 2.6 1 .5M599.4 220.1l-1.4 .3M602.3 217.1l-3.5 0-.2-.2 .2-1.8 3.6-2 .1 .1 .3 .7-.2 3-.3 .2-1.1 2.1 2.3 .8 .2 .5-.4 .8M606.4 215.8l-.6-.1-2 2.3 .1 .3 2.5 0M602.5 213.2l4.4-.2M602.8 213.9l3 1.8M602.6 216.9l1.2 1.1M603.9 218.3l-.4 1.7M598.8 217.1l.3 .4M602.4 213.1l-.1-1.8 .2-.5M597.6 219.8l.2-2.3 .8-.6M595 220.3l-1-.2-.7 .9-1.2 0 1-2.1 .1 0 .8 1.2M593.3 221l1.2 1.4M592.1 221l-1.6 .9M593.1 218.9l-1.5-1-.5 .5M591.6 217.9l0-1.1-.8-.9-2.4 2.1M590.8 215.9l-.6-1.3-3.2 2.5M590.2 214.6l0-.6-3.1-.9M588.4 205.6l3.1 1.6-.6 2.6-1.3 .6 1 2.7-.3 .7-.1 .2M586.3 249.9l-1.5 1M587.8 251.8l0 .1M588 247.8l.9 1-.1 .5M586.6 248.8l1-1M586.5 248.8l-.1 0M592.8 248.2l-.7-1.1-.7 .2-1.5-.2-.1 .9 1.1 1.1 .5-1.8M590.9 249.1l.1 .6M592.1 247.1l0-.1-1-1.9M589.9 247.1l-.5-.7M589.8 248l-.9 .8M589.1 256.1l.9 1.3 1.5 .2-2 1.9-.5-1.3 1-.8M589 258.2l-.6-.4M589.8 261.1l.8 .2 1.6-1.2M589.5 259.5l-.1 1.1M596.5 231.5l0-.1-.6-.9-.8 .4M596.5 231.4l1.5-.4 .2-.2 .4 .1 1.6-.7 .8 1-1.3 1-1.1-1.3M600.2 229.8l0 .4M599.7 232.2l0 .1 .5 1 1 .4 .1-2.3-.3-.2 1.5-1.5 .1-.6 .9-1.4M598 231l.2 1.3-.7 1-.3-.1-.5-.5M598.2 232.3l1.1 .2 .4-.2M601.6 244.4l.6-3.1-.1 0M598.6 241.9l-.8 0M598.7 244l1.2-.3M597.2 241.4l-.1-.2M594 246.2l-.2-.3-.2 0-1.5 1.1M593.6 245.9l-.8-1.3-1.5 .2M593.8 245.9l.6-.5 2.1 .2-.1 1.2M592.8 244.6l.2-.4-1.1-1.5M597.9 237.7l1.7 .1 .4 .8-.9 1M599.6 237.8l.2-1.4-2.1 .4M590.8 242.2l-1.2-.6 .3-1.6-1.6 .3 .6 1.4 .7-.1M588.9 241.7l-.3 .3M589.9 240l.2-.3M591.5 240.9l-1.3-1.2M588.3 240.3l-.3-.2M594.7 260.7l-.3 1.7 1.1 1.6-2.7 1.4-1.3-.4 .3-1.7 2.6-.9M591.8 263.3l-1.2-2M595.5 264l.8 .5M592.8 265.4l2.2 3M591.5 265l-.1 .1M581.9 293.9l.1-.2 3.7-1.7-4.3-3.8-.9 1.5-.3 1.7 1.8 2.3M580.2 291.4l-1.3 .9M585.7 292l.3 0 .1 .2M580.5 289.7l-4 .6M591.9 286.5l-.9 .2-4.5-1.6-1.5 .7-.2 .4 2.4 2.5 3.8-2M587.2 288.7l-1.2 3.3M586.5 285.1l.9-2.6M584.8 286.2l-3.1 1.4M585 285.8l-1.5-4.7M608.1 252.5l1.6-.2-.3-2-1.9-.4-.8 1.8M609.4 250.3l1.7-.7 .1-.5-1.7-1-2.1 1.4 .1 .4M609.5 248.1l-.3-1.8-2.1 .7-.6 1.2 .9 1.3M605.7 243.4l.9-.5 0-.6-2.4-.7-.2 .2 .2 1.2 1.5 .4-.5 1.2-2.4-.3 1.4-1.3M608.5 254.4l.3 .1 1.5 2.2 .4 0 .4-.3-.8-2.6-1.5 .7M610.3 256.7l-2 .6M610.7 256.7l.9 3.9M611.1 256.4l1.5-.5M602.4 252.3l-.2-2.3-1.3-.1-.1 .1 .3 2.4M604 241.8l-1.8-.5M601.7 244.6l.3 .1 .8-.4M604.5 251.8l-.6-3.1 .6-.6-.4-1.5-1.9-1.5-.5 3 1.5 .7 .7-.1M603.2 248.8l-1 1.2M604.5 248.1l2 .1M601.7 248.1l-.1 0-.7 1.8M604.1 246.6l1.3-1.3 1.2 .5 .5 1.2M601.6 248.1l-.3-.1-1.4-1.7M602.2 245.1l-.2-.4M605.2 244.6l.2 .7M596.3 252.8l.3-1.5-1-.9-1.6 1.2M595.6 250.4l-.1-.5-.3-.5M604.2 241.6l.4-.9 .6-.1 1.6 1.2-.2 .5M605.2 240.6l.5-1.1 .8-.1 1.1 1.5-.8 .9M510.6 308.4l-.8 1.1-1.9-.9 .1 1.7 1.8-.1 0-.7M509.8 310.2l.4 .4M541 270.6l-3.4-2 2.3-1.6 1.7 2.9M537.6 268.6l-1.5 0-1 .4M539.9 267l.3-1.1 3.7 2.5M534.3 268.9l-1.9-2.7-2.9 .8-2.6-1.4 1.9-3.2 2.2-.4 1.9 1.5-.5 2.7M529.5 267l-2.3 6M526.9 265.6l-1.9 0M528.8 262.4l-2.4-1.4M531 262l-.9-5.1 3.9 .1 0 5.9-1.1 .6M529.6 256.5l.5 .4M531.8 250.7l3.4 3.6 1.7-1.8-2.2-3.2M535.2 254.3l.1 1.7-.7 .8-.6 .2M534 262.9l2.3-.4 .1-3.7-1.8-2M618.8 254.2l.5-1.4 1.4-.2 1-3.3-1.6 .3-1.4 1.7-.1 .6 .7 .9M618.6 251.9l-2.8 .4 .4 1.5M620.7 252.6l3 2-.9 1.1M497.1 304.6l.6-1.1-.6-1.2-1.1 .3 1.1 2-.1 .7-1.4-.3M497 297l-1.4 1.3 1.6 1.6 1-.3-.1-2.1M494.7 300.8l.4-2 .4-.5 .1 0M495.5 301.2l1.5-.6 .2-.7M495.5 298.3l-2.1-2.1 .5-.9M582 320.5l.2-.5 1.5-1.1 .1-.1-2.9-1.6-.1 0-.1 .4 1.5 2.4M583.7 318.9l1.1 1.7M583.8 318.8l1.2-1.7M580.9 317.2l.9-1M580.8 317.2l-1-.4M580.7 317.6l-.1 .3-2.5 2.2 .1 .1 2.4 0 0-2.3M580.6 320.2l.7 .5M578.1 320.1l-1.2-.6M578.2 320.2l.3 1M545.1 348.2l-.3-1.8M544.5 349.1l-1.5 .6M546.8 348.6l.4-.4M532.2 328.1l1.2-1 2.4 1.8M533.4 327.1l.2-1 1.2-.8M530.9 327.9l-.2-.6-1.9-1.4M529.8 324l.3 .1 1 1.8 1.7-.3-.7-1.8-2 .3M532.1 323.8l.9-1.1M531.1 325.9l-.4 1.4M532.8 325.6l.8 .5M504.5 314.5l-.6-1-.5-.1-1.2 1.8M509.1 312.1l-1 0-.3-1.2 .2-.6M508.1 312.1l-.5 .6 .5 1.6M509.4 301.9l-.7-.4-1.1 .7 .6 2.6 1.2-.1M507.8 310.9l-2-.5-.2-.2 .5-1.8 1.7 .1 .1 .1M508.2 304.8l-.8 .7 .9 1.5 1.5-.8M508.3 307l0 .8 2 .1M507.8 308.5l.5-.7M497 305.3l.2 .3 .2 .9-1.1 1.2-.8 .3-.6 1.2-1.7 .6-1-1.4 2.1-1.6 0-.2M495.5 308l-1.2-1.2M490.5 310.6l.8 .3 .1 1.7-1.1 .8M498.9 307.5l-1.5-1M498.9 308.5l-1.4 1-1.2-1.8M501.5 308.3l.5-.5 .1-1.1M497.2 305.6l1.7-.7 1.6 .7M505.9 299l.9-.7 .2-1.7 .4-.6 3.6-.5-1.7 3.9-.7 .4-1.8-1.5M505.7 300.8l1.1 1.5 .8-.1M508.6 299.8l.1 1.7M507 296.6l-3.1 .1M509.3 299.4l1.8 .1M511.1 294.9l-.1 .6 1.6 1.4M507.4 296l-2.2-3.8M495.6 290.9l.6-2.7 .4-.4-2-2.1-1.5 .7 .7 1.9 .2 .1 2.2-.2M494 288.4l-.4 2.2M496.6 287.8l.4-.1M494.6 285.7l.4-1.9M493.1 286.4l-.7-.3M493.8 288.3l-2.3 .5M618.6 327.4l.6-2M618.9 328.8l.9 1.2-.7 1-1.7-.4-.2-.2 1.6-1.6M617.6 327.6l-.7-.9M617.3 328.4l-1.3 .6-.1-.3M613.6 328.2l.2 .7-.7 .6-1.9-.9M613.1 329.5l.2 .7-.3 .7M624.2 329.5l-.8-.2-1 2.1-.7 .1-1.1-1.6 1.5-2 .1 0 1.2 1.4M622.2 327.9l1.9-2.9M622.4 331.4l1.6 1.2M620.6 329.9l-.8 .1M619.1 331l.3 1.2 1.3 .6 1-1.3M622.1 327.9l-.9-.4M620.7 332.8l.3 1.1M625.4 236l-.3-2.2M629.2 236.9l1.9-.9 0-.2M622.6 246.2l2.4 0-.1 2-3.1 .9-.1 .2 3.5 4.3-1.5 1M626.9 259.3l-.1-5.8 1.5-1-.1 5.4 4.2 3.2M625.2 253.6l1.6-.1M634.6 223.8l1.7-3.1-1.4-3.2-2.8 .6M634.9 217.5l2.1-2.5 .2-3.6M637 215l4.3 3.1 2-4.4 4.2-2.2M636.6 231.4l1.8 .3 .5-.2 3.5-5.6 1.7-.5 .8-.8-.5-2.3-2.9-3.5-3.5 2.4 2 3.9 2.4 .8M640 225.1l-3.5 .5M638.9 231.5l5 2.1M644.1 225.4l1.4 4.8M638 221.2l-1.7-.5M644.9 224.6l5.7-.2M644.4 222.3l3.6-3 .5-4.7M641.5 218.8l-.2-.7M606.5 224.2l.6-1-.6-1.5M606 221.5l-.9 1.4M607.1 223.2l.7-.2M605.3 220.6l-1.6-.1M608.9 221l.3-1.8M606.6 219.2l0-.3M613.2 217l1.1 2.1 1.8-1 1.2 .9 1-1.6 0-.3-2.4-1.1 .2 2.1M615.9 216l-.2-.1M617.3 219l.3 2.3-3.3-.8 0-1.4M618.3 217.1l1.9-2.7M618 221.7l-.4-.4M618.3 217.4l2.4 1.4M557.5 236.5l2.1 .9 .3-.2 .3-1.8-2-1.1-.9 .5-.1 .3M559.9 237.2l2.7 1.2 .8-.7M560.2 235.4l1.1-.7 .7 .2M557.3 234.8l-2.9-1.8-.4-.1-.4 .8M554 232.9l-.3-1.2-2.1-1M554.4 233l4.2-1.2-.4 2.5M553.7 231.7l1-1.3-1.2-3.2M564.1 228.5l-.2-1.4 2.9-.2M563.9 227.1l-.7-.8 1.9-1.8M563.2 226.3l-1.2-.3-.5-3.4M562 226l-.2 .2-3.3-.4M562.6 238.4l-.1 .5 .2 1.6 .5 .4M582 227.4l2.2-.4 .1-.7 .5-.3 1.1 .7 0 .9-1.6-.3-.1-.3M584.3 227.3l-.1 1-2 .7M584.3 226.3l-1.1-.7M584.8 226l.6-1.1M585.9 226.7l1.6-.9M586 231.4l-.2-1.7 1-.2 .2-1.7-.9 0-.8 1.5 .5 .4M584.2 228.3l1.1 1-1.8 1.4M586.8 229.5l.3 .1M587 227.8l.1 0M586.1 227.8l-.2-.2M578.6 237.4l.1-.1-.6-1.5 .3-1 2 1-.8 1.2-.9 .3M579.6 237l1 .5M578.1 235.8l-2.1 .3M580.4 235.8l.5-.3M578.4 234.8l-.2-.9M590.2 232.4l.7 1.3 .8-.2 .3-.7M588 236.2l-.4-.1-.5 .2M589 232.6l-.1 .6-.3 .2-1.1 .2-.5-.6M590.9 233.7l-.1 .1-.9 .4 0 1.1-.8 .1-.3-.3 .1-1.9 1 1M592.6 239.9l-.1-.7 1.2-.6 1 .9M592.5 239.2l-.2-.1-1.6-.1M591.2 203.5l2.5 .6 1.9-.8 .8 1.9-3 2.6-.7-.4 1-3.3M592.7 207.4l-1.2-.2M595.6 203.3l.3-.9M596.4 205.2l.5 .4 3.2-.1M603.7 231.4l-.1-.1-.3-.1-1.4 .4 .9 1.7 .8-.2 .1-1.7 1.1 0 .8 1.5-.4 .9-.1 .1-1.5-.8M607.6 225.3l-1.2-.9M608.6 225.1l1.2-1-.1-.2M618.7 251.3l-1.9-1.9 .4-.7 .5-.3 2.4 1.2M610.4 243.4l-2.9 .4 0 .5 1.8 1.9 .4-.2 .7-1.8 0-.8 0-.1-.7-1.8-2-.7 1.4-2.6 .2-.2 1.1 2.6-.7 .9M607.7 240.8l-.1 .1M606.5 239.4l.2-1 2.4-.2M621.9 239l-1.1-1.9 1.6-3M618.4 242l3 1.3M625.4 240.1l2 4.8-2 .6-2.7-2.7 1.3-3M610.7 237.7l1.4 .6 .8-1.8-1.3-1.3-.6 .2-.3 2.3-1.4 .3-.9-1.5-.9-.4-1.2 1.5-.2-.1-.9-1.3 1-1.5 .8 .3 .5 1.1M606.3 237.6l.4 .8M621.3 239.2l-2.7-.3-1 1.1 .8 1.8M616.3 224.7l-.5 .1-1.3-.4-.8-3.5 .6-.4M613.7 220.9l-1.5 .1-1.7-3.3M612.2 221l-.3 .3-1.7 .6M592.9 224.5l.1 .8-.8 1.5 .3 1.3-.9 1M593 225.3l.9 1.1 1.2-.2-.4 2.4-.1 .1-.2 .1-.6-.6-.4-1.1 .5-.7M593.4 227.1l-1.2-.3M595.1 226.2l.6-.6M596.9 226.4l-.7 1.6-1.5 .6M593.8 228.2l-1.3-.1M594.4 228.8l-.9 1M594.6 228.7l1.3 1.2 0 .6M593.2 218.9l1.3-.7 .9 .3 1.3-1-2.2-2-.6 .6 .6 2.1M593.9 216.1l-2.3 .7M595.4 218.5l.1 1.3M596.7 217.5l1.1 0M596.2 228l.7 .8 1.5-.4 .1 .2-.4 1.6-1.5-.6 .3-.8M596.6 229.6l-.7 .3M598.4 228.4l.2-1M598.1 230.2l.1 .6M598.5 228.6l1.4 .8M602.5 229.7l.8 1.5M601.3 231.4l.6 .2M597.2 233.2l-1.4 1.4 1 .5 .9-.8 .6 1 1.2-.1-.4-1.1-.5-.4-.8 0-.1 .6M597.8 233.7l-.3-.4M596.8 235.1l.4 1.1 .3 .2 .8-1.1M598.6 233.7l.7-1.2M599.1 234.1l1.1-.8M595.9 241.6l-.7 1.4 .3 .3 0 .8-.8 .6-1-1.1 .4-.8 1.1 .2M591.8 242.2l2.3 .6-.1-.8M595.5 243.3l1.1-.1M595.5 244.1l1.1 1.2 .3-.2M594.7 244.7l-.3 .7M593.7 243.6l-.7 .6M596.6 245.3l-.1 .3M613.2 253l-.3 1-2.4-.6-.2-.9 1.6-1.5 .4 .2 .9 1.8 2.6-.7-.3-2 1.3-.9M609.7 246l1.9 1 .3 1.2-.7 .9M609.3 246.2l-.1 .1M610.4 244.2l2.1 1.5-.9 1.3M607.5 244.3l-.9 1.5M607.5 243.8l-.9-.9M599.3 252l-.9-1.2 1.1-1.3 0-1-.9-1-1.1 .2-.1 1.3 .9 1.8 .1 0M598.3 250.8l-1.7 .5M599.5 249.5l1.3 .5M597.4 249l-1.9 .9M599.5 248.5l1.8-.5M598.6 247.5l.5-.9M597.5 247.7l-.5-.2M605.7 239.5l-.8-.3-1 .4 .7 1.1M603.9 239.6l-.2 0-1.6 1.5M542.5 264.9l-2.1 .3-1.2-3-2.5 .4 .7 3.3 2.8-.1 .2-.6M540.2 265.8l0 .1M539.2 262.2l1-1 2.1 0M537.4 265.9l-1.3 2.7M536.7 262.6l-.4-.1M542.7 258l-1.1-1.3 .2-1.3 .3-.1M541.6 256.7l-2.1 2 .7 2.5M539.5 258.7l-.2-.1-2.9 .2M539.4 250.7l0 .1-2.4 1.7-.1 0M539.4 250.8l.7 1.1 2.3 .2M497.1 302.3l.5-.7-.6-1M502.2 298.6l-1.3 1.4-.8-.1-.3-2.6M500.1 299.9l-.4 .2-1.5-.5M500.9 300l1.1 1.1 1.4-.1M502 301.1l-.7 1.7 .8 .7 .2 0 1.5-1.6-.1-.5M501.9 304.3l.2-.8M501.3 302.8l-1.3 .1 .7 2.4M493.4 296.2l-.4 .2-2.3-.8 0-.5M490.7 295.6l-.6 .7-.5 0M505.8 310.4l-.1 .9-1.4 .7 .3 .8 1.3 .3 .4-.4-.6-1.4M506.3 312.7l1.3 0M504.6 312.8l-.7 .7M505.9 313.1l-.1 .6M506.8 302.3l-.2 .2-2.3-.1-.1 1.7 .1 0 1.8-.5 .5-1.1M504.3 302.4l-.5-.5M504.2 304.1l-1.9-.6M507.4 305.5l-.5 0-1 2.7 .2 .2M504.3 304.1l-.1 1.7-.1 .1-.8 0M504.2 305.8l2.6-.4-.7-1.8M506.9 305.5l-.1-.1M491.4 312.6l2.3 0 0 .4-3 3.5M493.7 312.6l.1-.2-.6-2.5-1.9 1M493.2 309.9l0-.1M615 337.5l.2-2.3-1-1.2-3.3 1.7M613.8 331.6l.9 1.4-.6 .6-1.1-.7M614.1 333.6l.1 .4M613.8 331.5l1-.4 1 .1 .7-1-.5-1.2-1.5 .3-.3 .7 .6 1.1M614.2 330l-.9 .2M614.7 333l1.2-.5-.1-1.3M616.5 330.2l.7 .2M614.5 329.3l-.7-.4M618.3 334.9l-.2-.2 .7-2.1-1.2-.2-1.1 .6 .2 1 1.4 .7M616.7 334l-1.5 1.2M618.8 332.6l.6-.4M617.6 332.4l-.2-1.8M616.5 333l-.6-.5M680.2 383.4l.4 1.2 4.8 0 3.7 3.4-4.5 2.4-.6 5-.5-5.2-3.6-3.9 .7-1.7M685.4 384.6l-.6-4.9M689.2 402.8l3.8-2.1M684 395.4l-1.1 3.2M689.1 388l3.1-1.4M676.1 391.8l0-.1 0-4.8-.1 0-3.1 2.9-1.2-3.6M676 386.9l-.4-.6M676.1 386.9l3.8-.6M681.1 413.5l2 1.5 2.3 3.3M634.6 235.9l2.2 2.7 2.7 1.8 .8 1.2-.2 .4-4.9 1.5-4.1-3 .6-1.8 5.1-.1M631.7 238.7l-.6-2.7M639.5 240.4l1.6-4.6-2.7-4.1M640.3 241.6l5.3-1.6M631.1 240.5l-.7 .7-2.5-1.2M621.8 249.1l-.5-1.8M630.4 241.2l0 .5-2.8 3.2-.2 0M625 246.2l.4-.7M564.2 230.6l.2 .7 2.1 1.4 0 .5-.4 .8-2.7-.1 0-1.5 1-1.1M566.5 232.7l.6-.5M566.5 233.2l2.6 1.3M566.1 234l.1 1.5M563.4 233.9l-.2 .3M558.6 231.8l.2-.2 2.4 2.9 .1 .2M561.2 234.5l.4-2.3 1.8 .2M561.6 232.2l-.3-.5 1.8-1.8 .6 .1M563.1 229.9l-1.7-.9-1.4 2.2-1.2 .3-1.3-2.5 0-.2 3.5-.6 .4 .8M561 228.2l.8-2M560 231.2l1.3 .5M557.5 228.8l-.1-.8M558.8 231.5l0 .1M557.5 229l-2.8 1.4M562.7 243.1l-2.1-1.4 0-.1-.6-1.7-1.1-.9-.5 .2-.1 2.7 1.7 .3 .6-.5M560 242.2l.1 .9M560.6 241.6l2.1-1.1M560 239.9l2.5-1M558.3 241.9l-.3 .2M558.4 239.2l-2.6-.3M558.9 239l.7-1.6M588.8 235.1l-.7-.3-.6 .5-.8-.5 .3-.4 .3-.2 .7 .3 .1 .3M588 234.5l.6-1.1M587.5 235.3l.1 .8M589.1 235.4l-.1 .2M587.3 234.2l.2-.6M586.7 234.8l-.7 .4M587 234.4l-.6-1M593.7 234.6l-.6-.6-.4 .3 .1 1.3 .6 .3 .3-1.3 1.6-.1 0 .1 .5 0M596.9 205.6l.2 2.8-3.3 .2-.4-.8M600.7 207.3l-3.3 1.4 .3 1.9 4.6 .7M597.1 208.4l.3 .3M605.3 230.7l.4-1.6-.9-.1-.7 .5 .1 .2 1.1 1.1 0-.1 1.5 .4 .2-.1 1.3 1.6-.6 .3-1.4-.5 .5-1.3M606.2 234.7l-1-.9M606.3 232.4l-.7 .5M605.3 230.8l-.5 .6M604.2 229.7l-.6 1.6M605.7 229.1l.1 0 .4-1.9M604.8 229l-.2-.8M607.2 227.1l.2 2 1.9-.9 .6 .8-.2 .4-2.4 .7-.1-.5 .2-.5M607.2 229.6l-1.4-.5M609.3 228.2l-.2-.7M609.7 229.4l-.2 2-2.2-1 0-.3M607 231l.3-.6M617.7 243.8l-.6 .2-2.3-1.7 .4-.6 3.2 .2M619.3 245.9l-.5 .4-1.1 2.1M609.8 224.1l.1 .1 .8 2.1 .2 .1 1.7-1 .4-.8-.6-.4-2.5 0M612.4 224.2l-.5-2.9M610.7 226.3l-1.3 .7M610.9 226.4l.9 1.6-.1 1-1.8 0M612.6 225.4l.5 1.6-1.3 1M613.1 227l.6 .2 1.5-.8 .6-1.6M613 224.6l1.5-.2M613.7 227.2l.4 1.7-.6 .9 0 .1 2.7 1.1 .5-.3 .1-1.8-1.3-.6-1.4 .6M615.5 228.3l-.3-1.9M616.8 228.9l1.8-1.6M616.7 230.7l2.5 .8M609.5 231.4l.1 .2-.1 1-1.2 0M620.8 237.1l-.7-.4-2 1 .5 1.2M620.1 236.7l-1.1-1.8 0-.5M602.8 233.3l-.9 .8 .1 .3-1.5 1.9-.5-.1-.4-1 1.7-1.3 .6 .2M601.3 233.9l-.1-.2M599.6 235.2l-.1 0M597.5 236.4l.1 .3M600 236.2l-.2 .2M600.5 236.3l.5 .3 .4 1.9-1.4 .1M603.7 239.6l-.5-1-.6-.4-1.2 .3 .2 1.7M605.1 233.9l-1.4 1.5 .3 1.1-.1 .1-1 .5-.7-.7 .2-1.4 1.3 .4M602.4 235l-.4-.6M604 236.5l1.2-.3M602.2 236.4l-1.2 .2M602.9 237.1l-.3 1.1M611.9 251l-.8-1.4M610.3 252.5l-.6-.2M612.3 251.2l2.4-1.2-.9-1.8-1.9 0M615.5 250.3l-.8-.3M610.5 253.4l-.2 .4M612.9 254l.1 .5M610.4 243.3l2.3-.5 1 .3 .3 1.4 2.3 .2 .1 1.4-.8 .8-1 0-.8-1.7 .2-.7M613.8 245.2l-1.3 .5M613.7 243.1l1.1-.8M616.3 244.7l.8-.7M614.6 246.9l-.8 1.3M616.4 246.1l2.4 .2M615.6 246.9l1.6 1.8M606.1 237.5l-.1 .1-1.1 1.1-.6-.7 .2-.6 1.5 .2M604.5 237.4l-.6-.8M604.9 238.7l0 .5M604.3 238l-1.1 .6M535.3 256l2.1-.1 .8 .4 2.7-1.3-1-1.2-1.5 .2-1 1.9M538.4 254l-1.4-1.5M538.2 256.3l1.1 2.3M540.9 255l.9 .4M539.9 253.8l.2-1.9M497.6 301.6l.2 0 1.8-1.1 .3 2.4-.3 .1-.6-.1-1.2-1.3M499 302.9l-1.3 .6M499.6 300.5l.1-.4M499.9 302.9l.1 0M499.6 303l-.7 1.9M493 296.4l-.7 1.4 1 1.1-.2 .7-2 .5-.2-1.4 0-.1 1.4-.8M490.9 298.6l-.8-2.3M493.3 298.9l1.8-.1M493.1 299.6l.7 1.3M491.1 300.1l-.3 1.4M490.9 298.7l-2.4-.2M505.9 308.2l-.2-.1-2.1 1-.4-.8 1.2-1.4 1.3 1.2M504.4 306.9l-.3-1M503.6 309.1l0 .2 .4 1 1.6-.1M503.2 308.3l-1.2-.5M503.6 309.3l-1.5 .3-.6-1.1M503.4 313.4l-.1-.2 0-1.2 .5-.4 .5 .4M503.8 311.6l-.1-.9 .3-.4M628.3 252.5l.2-.1 5.9-1.4 .3-.2 2.8-2.8 0-.1-3.9-2-5.1 .2-.7 4.4 .7 1.9M627.8 250.5l-2.9-2.3M634.4 251l-.5 5.1-1.2 5M628.5 246.1l-.9-1.2M633.6 245.9l-3.2-4.2M637.5 247.9l2.6-5.9M634.7 250.8l.7 3.6 1.6 3.3M637.5 248l4.8 4.3M595.5 239l-.4-1.5-1 .1-.4 1M595.1 237.5l.1-.2 1 .3M595.2 237.3l.2-.8 1.8-.3M595.4 236.5l-.4-.9 .3-1M594.1 237.6l-.9-.7-.5 .2-.5 .5 .1 1.5M592.2 237.6l-1.4-.2-.3 .9M590.8 237.4l-.2-.7-1.3 .3M593.8 208.6l-.2 2.5-.1 .1 0 .1 1.1 3.4 0 .1 2.5-.9-.2-2.3-3.3-.5M596.9 211.6l.8-1M593.5 211.2l-2.6-1.4M593.5 211.3l-2.9 1.8M594.6 214.7l-4.3-.9M597.1 213.9l1.7 1.2M594.6 214.8l-.1 .7M613.5 229.9l.2 2.3 2.2-.4 .3-.8M615.9 231.8l.2 2 2.6 .1M616.1 233.8l-.5 .5-1.7-.9-.5-.7 .3-.5M607.7 232.9l-.7 2.1 2.4-1.1 .2-1.2-.1-.1M609.4 233.9l.6 1.1-1.6 1.5M613.9 233.4l-1 1.3-1.1 .1-.1-1.6 .5-.5 1.2 0M609.6 231.6l1.3-.5 .8-2.1 1.5 .8-1.3 1.9-1-.6M611.7 233.2l-2.1-.5M611.9 231.7l.3 1M613.2 229.8l.3 0M611 235.4l-1-.4M611.6 235.2l.2-.4M615.6 234.3l-.1 .3-1 1.2-1.6-1.1M614.5 235.8l-.1 .3-1.5 .4M619 234.9l-1.6 1.5 .5 1.2 .2 .1M617.4 236.4l-.4-.1-1.5-1.7M615.2 241.7l-.1-.9 1.8-1.1 .7 .3M497.4 316l-.6-1.4-2.5 1.9 .1-2.5 1.9 0 .6 .4-.1 .2M496.9 314.4l.2-.2 2.5 .1-1.4-2.7 .5-.2 1.2-1.5 0-.1M494.3 316.5l-.1 .2M494.4 314l-.7-1M496.3 314l-.7-2-1.8 .4M494.9 309.2l.6 .6 1.8 .3 .7 1.4-.2 .2-2.1 .2-.2-2.1M495.7 311.9l-.1 .1M497.3 310.1l.2-.6M497.8 311.7l-.7 2.5M498 311.5l.2 .1M503.3 312l-.8-.1-.9 1-.5 .2-.3-.9 .5-1.4 .6-.2 .1 .1 .5 1.2M502 310.7l1.7 0M501.6 312.9l1.7 .3M500.8 312.2l-2.1-.8M501.3 310.8l-1.4-.9M501.1 313.1l-.3 1M501.9 310.6l.2-1M592.7 237.1l-1.3-1.1 .7-.5-.2-.9-.8 .1-.5 .9 .2 .4 .6 0M590.8 236l-.2 .7M590.6 235.6l-.7-.3M591.1 234.7l-.3-.9M591.9 234.6l.3-.3-.5-.8M592.8 235.6l-.7-.1M592.7 234.3l-.5 0M595 235.6l-1.6 .3-.2 1M593.1 234l.1-.3M615.1 240.8l-.1-.2-2.7-.3-.2-.3 .3-1.3 2-.2 .6 2.1M612.3 240.3l.4 2.5M612.4 238.7l-.3-.4M612.1 240l-1.7 .6M614.4 236.1l.5 1.2-.4 1.2 2.1 .5 .2-.8-.9-.9-1 0M615.9 237.3l1.1-1M614.5 238.5l-.1 0M616.6 239l.3 .7M616.8 238.2l1.1-.6M47 129.8l-5 1.2-1.9 2.5-2.3 2.2-1.2 2.9-2.1 2.4-2.2 2.6-1.6 3-1.3 3.2-2.4 2.4-3 2-2.5 2.6-2 2.9-2.5 2.5-4.3 1.2-4.5 .1M47 163.5l-3.2 .7-3.2-.6-3.2-.6-3-1-3.2 0-3.2 .6-3.1 .7-2.9 1.5-5-2.6M95.8 129.8l-.4 5.1 1.6 4.9-3.4 .6-2.8 1.8-1.2 4.4-1.4 4.4-3.1-.1-3.1 .1-1.9-3.1-1.9-3.1-2.9-1.9-3.3-.7-4.4 1.3-4.4 1.3-3.7 4.1-4.5 3.3-.4-5.6-.9-5.6-.1-5.6 .4-5.6M83.2 204.8l-3.7-2.6-4.1-2.5-4.6-1.2 2.1-2.3 1.6-2.7-.9-4.5-1.6-4.2-2.2-2.3-2.8-1.5-3.9 0-3.6-1.2-2.6-3.1-2.4-3.2-1.4-2.8-2.1-2.4-1.8-2.5-2.2-2.3 1.2-4.1 2.6-3.4 4.2-3.8 4.1 1.1 4.1 .2 4.5 1.8 4.3 1.9 1.6 3.7 .9 3.9-2.4 3.8-2.4 3.8-1.3 4.3-1.4 4.3M97 139.8l1.9 3.5 3.1 2.7 3 2.8 2 3.4-3.1 3.4-1.9 4.2-4.9 1.6-5.1 .8-5-2.4-2-4.7-3-4.1M90.8 162.2l-5.8 0-5.5 1.3-5 1.3M54.5 173.5l-2.1 2.4-1.1 3-2 2.5-2.3 2.1-3.1 .9-3.1 .4-3.2-1.2-3.1-1.4-5 2.6-4.2 1.8-4.5 .6-2.6-3.7-3.1 0-3.1 0-3.8-2.5M50.8 234.8l-3.7-1.5-3.9-1.1-3.5-.2-3.4-.5-3.3 1.5-3.5 .5-5 1.3-2.2-4.6-2.8-4.2 .5-3.8 .8-3.7 1.6-3.2 2.5-2.5 1.7-3.2 .4-3.6 2.3-2.2 2.1-2.4 .8-3.1 1.7-2.7 3-1.3 2.3-2.2 2.3-2.2 1.7-2.7-2.4-2.4M60.8 181l-5.3 .3-4.7 2.2-3.5 2.5-4.1 1.2M53.2 230.5l-4.8-2.5-5.2-2 .7-3.8 .6-3.7-2.6-2.4-2.4-2.6-2.6-4.2-3.7-3.3 .9-5 .4-5M8.2 227.2l3.6-2.7 2.7-3.5 2.3-5.1 2.7-4.9-.7-3.4-1.8-2.8-4.4-.7-4.4-.6M32 233.5l-4.7 3-5.3 2-1.7 2.6-2.3 2-1.5 2.7-1.3 2.9-1.5 2.7-2.4 2-2.2 2.1-2.6 1.7M55 226.5l-1.9-5.1 .1-5.4-.5-4.6-1.9-4.2M162 129.8l-1.2 2.9-.2 3.2-1.7 2.6-1.9 2.5-4.7 3.4-4.1 4.1-2 3-1.7 3.3-4.1 1.1-3.4 2.6-3.1 2.6-1.9 3.7-3.4 1.4-2.8 2.3-3.1 1.3-3.2 1.2-2.4-3.8-2.6-3.7-4.7-2.6-5.3-1.1-.3 3.2-1.3 3.1-.5 3.3-1.6 2.8-1.5 3.1-1.1 3.2-3.8-.1-3.6-1.2-4-1.5-3.6-2.2-3.7-2.5M107 202.2l1.9-4.3 1.9-4.4-3.2-5-3.1-5-3.1 3.4-1.9 4.1-3.6 1.9-2.7 3.1 .5-5.2 2.1-4.8-2.7-4.3-2.3-4.5M114 204.8l-.8-5.7 1.3-5.6-.9-3.7-.4-3.8-4.5-.7-4.2-1.8-3.6-1.9-2.7-3.1M119.5 129.8l-1.7 2.7-1.9 2.6-1.5 2.9-1.2 3-1.4 5-1.9 4.9-3.5 3.9-1.9 5M127 169.8l-5 2.4-3.7 1.2-3.8 .1-3.7-2.6-3.8-2.4-3.4 1.5-2.8 2.2M130.8 182.2l-2.5 2-2.5 1.8-1.7-2.7-2.1-2.3-3.9 3.4-4.9 1.6M137 129.8l.6 4.3-.6 4.4-2.3 2.9-1.5 3.4-3.1-.4-3.1-.9-5 2.5-3.6-2.7-3.9-2.3M135.8 144.8l-2.8 4-1 4.7-3.9 2.3-3.6 2.7-2.6-2.4-2.4-2.6 1.7-3.6 .8-3.9M149.5 146l-2.2-2.8-2.8-2.2-3.9-.9-3.6-1.6M173.2 129.8l1.3 5-3.7 1.1-3.8 .1-.9 3.9-1.6 3.6-3.7-1.3-3.8-1.2M177 178.5l-.4-4.7 .5-4.7 .1-4.7-.7-4.6 .5-3.8 0-3.8-5.6-.1-5.6 .1-1.4-4.2 .1-4.5M177 152.2l1.2-5 4.1-3.6 4.7-2.6 3.6-2.7 2.6-3.5-4.5-1.6-4.2-2.2-5 1.8-5 2M229.5 163.5l-5.1 .2-5-.5-5-1-4.9-1.2-4.2-.7-4.3 .4-4.1 1.2-4 1.6-3.8-2-4.2-.9-4.2-.2-4.2-.6M224.5 129.8l0 5-3.8 1.8-3.7 1.9-2.2 4.8-.3 5.2-1.2 3.3-.1 3.4-2.4 2.6-1.3 3.2M233.2 156l4.2-1.9 3.4-3.1-3.8-3.8 3.8-2.4 2.5-1.8 2.5-2-1.3-5-2.9-2.1-2.1-2.9-3.6 1.5-3.7 1.3-3.8 .8-3.9 .2M177 171l-3.4-2.6-4.1-1.2-5 1-5 .3M147 162.2l-3.8-2.4-2.4 5 1.2 5-5 2.4M155 150.5l-1.8-2.5-4.2 .5M152 153.5l.2-4.5-1.4-4.2M156.5 149.8l-4.6-.3-4.4 1M154 152.5l-1.7-3.4-2.8-2.6M150 153l1.7-3.8 1.8-3.7M152 156.5l-5 .7-2.5-2.4M165.8 152.2l-5-1.2-3.8-2.5M98.2 186l1-3.4 1.2-3.3 2-3 2.1-2.8 1.4-3 2-2.6 .6-3.3 1-3.1 .4-3.3-.1-3.2 .1-3.3 .9-3.2M114.5 173.5l3.4-4.6 4.1-4.1-3.2-4.7-1.8-5.3M133.2 172.2l-3.1-1.2-3.1-1.2 1.3-2.8 1.7-2.7 .7-3 1.3-2.8-3.4-4.5-1.6-5.5M139.5 167.2l-3.3-2.9-3-3.3 1.9-2.8 1.2-3.1 .4-3.3 .3-3.3M84.5 198.5l-1.6-3-2.1-2.8-1.1-3.3-.2-3.4-3.8-.4-3.7-.8M72 212.2l-3.2-1.8-3-1.9-4.2-2.5-4.6-1.2-3.3 .8-2.9 1.6-3.3-1.6-3-2.1 2.9-3.5 2.1-4-2.5-5 5 0 5 0 1.3-5.6 1.2-5.6M27 152.2l-3.6-3.2-3.9-3-5.5 1.9-5.8 .6M54 141l-4.8 1.2-4.7 1.3-5.2-.4-4.8-2.1M466.6 272l2.4-6.1-.1-.1M567.6 352.3l.2-.1 2.1 2.9M664.4 379.5l-.9-1.1 3.7-1.3M662.2 376.5l1.3 1.9-1.9 1.3M548.9 349.7l-.8 1.1-1.3-1.3M601.9 228.7l.7 .4 1.5 .4M599.6 240.1l-.5-.3 0 1.6M27 212.2l-1.6 4.3-.9 4.5 .6 3.1 1 3-.7 3.2 .4 3.2 3.9-1.3 4.1-.6 4.1-.1 4.1-.5 1.5-4.3 1-4.5-.8-3.3-1.7-2.9-4.2-1.8-3.3-3.2-3.7 .7-3.8 .5M147 146l.3 3.2 .9 3 3.3 1.8 3.5-1.8 2-3.7-2.5-3-3.7-1.5-3.8 2"/>
<path fill="none" stroke="#000" stroke-width="5.800000000000001" stroke-linecap="round" stroke-linejoin="round" d="M583.0,433.0 583.2,438.5 584.5,446.0 585.8,456.0 592.0,466.0 602.0,476.0 612.0,486.0 624.5,496.0 635.0,502.0"/>
<path fill="none" stroke="#aadaff" stroke-width="3.2" stroke-linecap="round" stroke-linejoin="round" d="M583.0,433.0 583.2,438.5 584.5,446.0 585.8,456.0 592.0,466.0 602.0,476.0 612.0,486.0 624.5,496.0 635.0,502.0"/>
<path fill="#aadaff" stroke="#000" stroke-width="0.7" d="M595.0,254.5 598.0,253.0 603.0,253.0 607.5,255.0 610.0,259.0 610.0,263.5 607.5,264.0 607.0,260.5 604.5,258.0 600.0,256.5 596.5,257.0Z"/>
</svg>
<div style="position:absolute;left:11px;top:11px;width:105px;height:33px;background:#fff;border-radius:2px;box-shadow:0 1px 4px -1px rgba(0,0,0,.3)"></div>
<div style="position:absolute;left:53px;top:11px;width:1px;height:33px;background:#e6e6e6"></div>
<div style="position:absolute;left:851px;top:11px;width:27px;height:27px;background:#fff;border-radius:2px"></div>
<svg style="position:absolute;left:856px;top:17px" width="18" height="17" viewBox="0 0 18 17"><path fill="none" stroke="#666" stroke-width="2.3" d="M1.2 5.500V1.200H5.500M12.500 1.200H16.800V5.500M16.800 11.500V15.800H12.500M5.500 15.800H1.200V11.500"/></svg>
<div style="position:absolute;left:851px;top:543px;width:32px;height:32px;background:#fff;border-radius:2px;box-shadow:0 1px 4px -1px rgba(0,0,0,.3)"></div>
<svg style="position:absolute;left:860px;top:546px" width="14" height="23" viewBox="0 0 14 23"><circle cx="7" cy="4" r="3.600" fill="#f9b416"/><path fill="#fbb914" d="M2.500 8.500Q7 7 11.500 8.500L13 15.500L11 16L10.200 13V22H7.500V16.500H6.500V22H3.800V13L3 16L1 15.500Z"/><path fill="#e8892b" d="M5.200 8.200L7 11L8.800 8.200Z"/></svg>
<div style="position:absolute;left:851px;top:586px;width:32px;height:62px;background:#fff;border-radius:2px;box-shadow:0 1px 4px -1px rgba(0,0,0,.3)"></div>
<div style="position:absolute;left:856px;top:617px;width:22px;height:1px;background:#e6e6e6"></div>
<svg style="position:absolute;left:860px;top:594px" width="14" height="46" viewBox="0 0 14 46"><path fill="none" stroke="#666" stroke-width="2.400" d="M1 7.500H13M7 1.500V13.500M1 38.800H13"/></svg>
<div style="position:absolute;left:440px;top:659px;width:40px;height:15px;background:linear-gradient(to right,rgba(245,245,245,0),rgba(245,245,245,.7))"></div>
<div style="position:absolute;left:480px;top:659px;width:128px;height:15px;background:rgba(245,245,245,.7)"></div>
<div style="position:absolute;left:609px;top:659px;width:98px;height:15px;background:rgba(245,245,245,.7)"></div>
<div style="position:absolute;left:708px;top:659px;width:186px;height:15px;background:rgba(245,245,245,.7)"></div>
<div style="position:absolute;left:650px;top:665px;width:48px;height:6px;box-sizing:border-box;border:1.5px solid #444;border-top:none;"></div>
<div style="position:absolute;white-space:nowrap;left:480.4px;top:659.8px;font-size:10px;font-weight:normal;line-height:14px;color:#444;letter-spacing:0.60px">Map data ©2018 Google</div>
<div style="position:absolute;white-space:nowrap;left:615.3px;top:659.8px;font-size:10px;font-weight:normal;line-height:14px;color:#444;letter-spacing:0.70px">20 km</div>
<div style="position:absolute;white-space:nowrap;left:714.5px;top:659.8px;font-size:10px;font-weight:normal;line-height:14px;color:#444;letter-spacing:0.55px">Terms of Use</div>
<div style="position:absolute;white-space:nowrap;left:793.5px;top:659.8px;font-size:10px;font-weight:normal;line-height:14px;color:#444;letter-spacing:0.49px">Report a map error</div>
<div style="position:absolute;white-space:nowrap;left:20.3px;top:19.0px;font-size:11px;font-weight:bold;line-height:14px;color:#000;letter-spacing:0.56px">Map</div>
<div style="position:absolute;white-space:nowrap;left:62.7px;top:19.0px;font-size:11px;font-weight:normal;line-height:14px;color:#565656;letter-spacing:0.54px">Satellite</div>
<div style="position:absolute;left:6px;top:646px;font-size:23px;line-height:26px;font-weight:bold;color:#fff;letter-spacing:-0.9px;-webkit-text-stroke:0.8px #b8b8b8;text-shadow:0 0 2px rgba(0,0,0,.25);white-space:nowrap">Google</div>

</div>
</body>
</html>
